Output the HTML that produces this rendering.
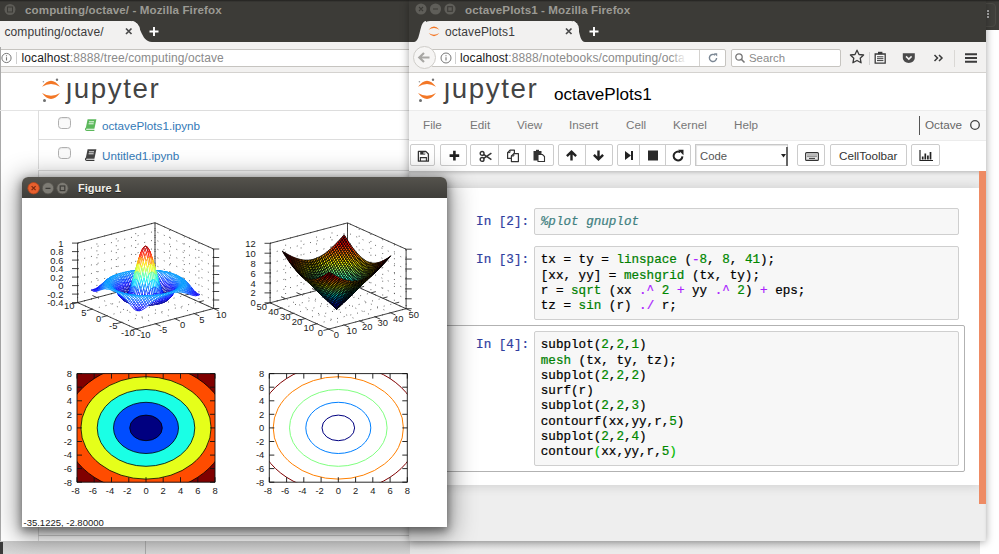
<!DOCTYPE html>
<html><head><meta charset="utf-8">
<style>
*{box-sizing:border-box;margin:0;padding:0}
html,body{width:999px;height:554px;overflow:hidden}
body{position:relative;background:#e3e3e3;font-family:"Liberation Sans",sans-serif;font-size:11.7px;color:#333}
.abs{position:absolute}
/* ---------- generic firefox chrome ---------- */
.win{position:absolute;top:0;height:541px;overflow:hidden;background:#fff}
.titlebar{position:absolute;left:0;right:0;top:0;height:42px;background:#3c3b37}
.title{position:absolute;top:3px;font-weight:bold;font-size:11.6px;color:#9b9a94;white-space:nowrap;letter-spacing:.1px}
.tab{position:absolute;top:21px;height:21px;background:#f2f1f0;border-radius:9px 9px 0 0;font-size:12px;letter-spacing:.1px;color:#3b3b3b;white-space:nowrap}
.navbar{position:absolute;left:0;right:0;top:42px;height:31px;background:#f2f1f0;border-bottom:1px solid #d4d2cf}
.urlbox{position:absolute;top:7px;height:18px;background:#fff;border:1px solid #c6c4c0;border-radius:2px;font-size:12px;letter-spacing:.1px;color:#8a8a8a;white-space:nowrap;line-height:16px}
.urlbox b{font-weight:normal;color:#1a1a1a}
/* ---------- jupyter ---------- */
.jtext{position:absolute;font-size:27.7px;color:#444;margin-top:.8px;letter-spacing:1.6px;white-space:nowrap;line-height:30px}
.row{position:absolute;left:38px;right:0;height:30px;border-top:1px solid #ddd;border-left:1px solid #ddd}
.cb{position:absolute;left:19.2px;top:5.6px;width:12.6px;height:12.4px;border:1px solid #b0b0b0;border-radius:3.5px;background:#fafafa;box-shadow:inset 0 1px 1px #e8e8e8}
.lnk{position:absolute;left:63px;top:8px;color:#337ab7;font-size:11.7px;white-space:nowrap}
.menu span{position:absolute;top:118px;color:#777;font-size:11.7px}
.btn{position:absolute;top:144px;height:22px;border:1px solid #ccc;border-radius:2px;background:#fff}
.btn i{position:absolute;top:0;bottom:0;width:1px;background:#ccc}
.btn svg{position:absolute;top:4px}
.cellin{position:absolute;left:125px;width:425px;background:#f7f7f7;border:1px solid #cfcfcf;border-radius:2px}
pre{font-family:"Liberation Mono",monospace;font-size:12.6px;line-height:15.3px;color:#000;-webkit-text-stroke:.22px}
.cellin pre{position:absolute;left:5.8px;top:6.3px}
.prompt{position:absolute;left:61px;margin-top:1.3px;width:64px;text-align:right;padding-right:5px;color:#303f9f}
.k{color:#008000}.n{color:#080}.o{color:#a2f}.c{color:#408080;font-style:italic}.m{color:#0b0}
</style></head>
<body>

<!-- strip of another window on far right -->
<div class="abs" style="left:980px;top:0;width:19px;height:30px;background:#3e3d39"></div>
<div class="abs" style="left:974px;top:3px;width:22px;height:24px;border:1px solid #4c4b46;border-radius:4px;background:#41403c"></div>
<div class="abs" style="left:987px;top:10px;width:2px;height:2px;background:#aaa;box-shadow:0 3px #aaa,0 6px #aaa"></div>

<!-- bottom strip -->
<div class="abs" style="left:0;top:541px;width:999px;height:13px;background:linear-gradient(#d6d6d6,#ebebeb 70%)"></div>
<div class="abs" style="left:0;top:541px;width:410px;height:13px;background:linear-gradient(#c9c9c9,#d9d9d9)"></div>
<div class="abs" style="left:0;top:542px;width:2.5px;height:12px;background:#3a3a3a"></div>
<div class="abs" style="left:145px;top:541px;width:1px;height:13px;background:#aaa"></div>
<div class="abs" style="left:980px;top:30px;width:19px;height:524px;background:#fff"></div>

<!-- ================= LEFT WINDOW ================= -->
<div class="win" id="lw" style="left:0;width:440px">
  <div class="titlebar"></div>
  <svg class="abs" style="left:2px;top:2px" width="16" height="16"><circle cx="8" cy="7.5" r="5.5" fill="#5d5c57"/><rect x="5.5" y="5" width="5" height="5" fill="none" stroke="#3c3b37" stroke-width="1"/></svg>
  <div class="title" style="left:25px">computing/octave/ - Mozilla Firefox</div>
  <div class="tab" style="left:-10px;width:150px"><span class="abs" style="left:14.5px;top:4px">computing/octave/</span></div>
  <svg class="abs" style="left:132px;top:21px" width="22" height="21"><path d="M0 0 C9 0 8 21 20 21 L0 21Z" fill="#f2f1f0"/></svg>
  <svg class="abs" style="left:124px;top:26px" width="40" height="12"><path d="M2 2.5l5.5 5.5M7.5 2.5L2 8" stroke="#4a4a4a" stroke-width="1.7"/><path d="M25.5 5.5h9M30 1v9" stroke="#fff" stroke-width="1.9"/></svg>
  <div class="navbar">
    <div class="urlbox" style="left:-5px;width:460px"><span class="abs" style="left:25.5px;top:0"><b>localhost</b>:8888/tree/computing/octave</span></div>
    <svg class="abs" style="left:0;top:9px" width="20" height="14"><circle cx="6.5" cy="7" r="4.6" fill="none" stroke="#777" stroke-width="1"/><path d="M6.5 6.3v3.2M6.5 4.2v1" stroke="#777" stroke-width="1.1"/><path d="M16.5 1v12" stroke="#d0d0d0" stroke-width="1"/></svg>
  </div>
  <!-- left edge stripe -->
  <div class="abs" style="left:0;top:47px;width:1px;height:494px;background:#a9a9a9"></div>
  <!-- jupyter header -->
  <svg class="abs" style="left:40.5px;top:78px" width="24" height="27" viewBox="0 0 24 27"><path d="M1 8.7Q10-3.3 19 8.7Q10 3.3 1 8.7zM1 15Q10 26.8 19 15Q10 20.6 1 15z" fill="#f37726"/><circle cx="16" cy="1.7" r="1.2" fill="#767677"/><circle cx="2.4" cy="3.8" r=".8" fill="#989798"/><circle cx="3.5" cy="22.4" r="1.5" fill="#6f7070"/></svg>
  <div class="jtext" style="left:66px;top:73px">&#x237;upyter</div>
  <div class="abs" style="left:0;top:110px;width:440px;height:1px;background:#e4e4e4"></div>
  <div class="row" style="top:110px"><div class="cb"></div>
    <svg class="abs" style="left:44.5px;top:6.8px" width="14" height="14" viewBox="0 0 14 14"><path d="M3.6 1.2h8.8l-2 9.6H1.6z" fill="#5cb85c"/><path d="M2.2 10.2c-1 .6-.9 2.2.5 2.2h7.7" fill="none" stroke="#5cb85c" stroke-width="1.2"/><path d="M5 3.8h5M4.6 5.8h5" stroke="#fff" stroke-width=".9"/></svg>
    <div class="lnk">octavePlots1.ipynb</div></div>
  <div class="row" style="top:139.4px"><div class="cb" style="top:6.6px"></div>
    <svg class="abs" style="left:44.5px;top:7.4px" width="14" height="14" viewBox="0 0 14 14"><path d="M3.6 1.2h8.8l-2 9.6H1.6z" fill="#444"/><path d="M2.2 10.2c-1 .6-.9 2.2.5 2.2h7.7" fill="none" stroke="#3a3a3a" stroke-width="1.2"/><path d="M5 3.8h5M4.6 5.8h5" stroke="#fff" stroke-width=".9"/></svg>
    <div class="lnk" style="top:8.6px">Untitled1.ipynb</div></div>
  <div class="row" style="top:170px;height:371px"></div>
  <div class="abs" style="left:38px;top:535px;width:402px;height:1px;background:#d0d0d0"></div>
</div>

<!-- ================= RIGHT WINDOW ================= -->
<div class="win" id="rw" style="left:409px;width:577px;box-shadow:0 1px 8px 0 rgba(0,0,0,.36)">
  <div class="titlebar" style="background:#3c3b37"></div>
  <svg class="abs" style="left:4px;top:1px" width="46" height="17"><g fill="#5f5e59"><circle cx="8" cy="8" r="5.6"/><circle cx="22.5" cy="8" r="5.6"/><circle cx="37" cy="8" r="5.6"/></g><g stroke="#3c3b37" stroke-width="1.1" fill="none"><path d="M6 6l4 4M10 6l-4 4M20 8h5"/><rect x="34.7" y="5.7" width="4.6" height="4.6"/></g></svg>
  <div class="title" style="left:56px;top:3px">octavePlots1 - Mozilla Firefox</div>
  <div class="tab" style="left:13px;width:157px;border-radius:8px 8px 0 0"><span class="abs" style="left:23px;top:4px">octavePlots1</span></div>
  <svg class="abs" style="left:5px;top:21px" width="12" height="21"><path d="M12 0 C5 0 7 21 0 21 L12 21Z" fill="#f2f1f0"/></svg>
  <svg class="abs" style="left:164px;top:21px" width="14" height="21"><path d="M0 0 C7 0 5 21 12 21 L0 21Z" fill="#f2f1f0"/></svg>
  <svg class="abs" style="left:18.6px;top:25.2px" width="12" height="13" viewBox="0 0 20 21.7"><path d="M1 8Q10-3 19 8Q10 2.4 1 8zM1 13.4Q10 24.4 19 13.4Q10 19 1 13.4z" fill="#f37726"/></svg>
  <svg class="abs" style="left:155px;top:26px" width="40" height="12"><path d="M2 2.5l5.5 5.5M7.5 2.5L2 8" stroke="#4a4a4a" stroke-width="1.7"/><path d="M25.5 5.5h9M30 1v9" stroke="#fff" stroke-width="1.9"/></svg>
  <div class="navbar">
    <div class="urlbox" style="left:22px;width:295px"><span class="abs" style="left:28px;top:0"><b>localhost</b>:8888/notebooks/computing/octa</span>
      <div class="abs" style="right:25px;top:0;width:30px;height:16px;background:linear-gradient(90deg,rgba(255,255,255,0),#fff 55%)"></div>
      <div class="abs" style="right:25px;top:0;width:1px;height:16px;background:#d4d2cf"></div>
      <svg class="abs" style="right:6px;top:2px" width="12" height="12" viewBox="0 0 12 12"><path d="M9.6 6A3.6 3.6 0 1 1 8.2 3.1" fill="none" stroke="#7b8794" stroke-width="1.4"/><path d="M6.8 1.2h3.4v3.4z" fill="#7b8794"/></svg>
    </div>
    <svg class="abs" style="left:2px;top:3px" width="60" height="26"><circle cx="13.5" cy="12.5" r="11" fill="#f6f5f4" stroke="#cfcdc9" stroke-width="1"/><path d="M8.5 12.5h10M13 8l-4.7 4.5L13 17" fill="none" stroke="#a8a7a4" stroke-width="2.2"/><circle cx="35" cy="13" r="5" fill="none" stroke="#777" stroke-width="1"/><path d="M35 12.3v3.2M35 10.2v1" stroke="#777" stroke-width="1.1"/><path d="M44.5 7v12" stroke="#d0d0d0" stroke-width="1"/></svg>
    <div class="urlbox" style="left:322px;width:110px"><span class="abs" style="left:17px;top:0;color:#8a8a8a;font-size:11.4px;letter-spacing:0">Search</span>
      <svg class="abs" style="left:1.5px;top:2px" width="12" height="12"><circle cx="5" cy="5" r="3.2" fill="none" stroke="#777" stroke-width="1.3"/><path d="M7.3 7.3l3.2 3.2" stroke="#777" stroke-width="1.6"/></svg></div>
    <svg class="abs" style="left:438px;top:5px" width="140" height="22" viewBox="0 0 140 22">
      <path d="M10 3.2l2 4.3 4.6.5-3.4 3.2.9 4.6L10 13.5l-4.1 2.3.9-4.6L3.4 8l4.6-.5z" fill="none" stroke="#3b3b3b" stroke-width="1.3" stroke-linejoin="round"/>
      <path d="M22.5 5v13" stroke="#d0d0d0"/>
      <path d="M28.2 7h10v9.2h-10z" fill="#fbfbfb" stroke="#3b3b3b" stroke-width="1.3"/><path d="M31 4.8h4.4v2.4H31z" fill="#3b3b3b"/><path d="M30 9.8h6.4M30 11.7h6.4M30 13.6h6.4" stroke="#3b3b3b" stroke-width="1"/>
      <path d="M55.8 6.2h12v4.4c0 3.2-2.6 5.4-6 5.4s-6-2.2-6-5.4z" fill="#4a4a4a"/><path d="M59 9.4l2.8 2.7 2.8-2.7" fill="none" stroke="#f2f1f0" stroke-width="1.5"/>
      <path d="M87.5 8l3 3-3 3M92 8l3 3-3 3" fill="none" stroke="#3b3b3b" stroke-width="1.5"/>
      <path d="M107.5 3v17" stroke="#dad8d5"/>
      <path d="M118 7.2h12M118 11h12M118 14.8h12" stroke="#3b3b3b" stroke-width="2"/>
    </svg>
  </div>
  <!-- jupyter header -->
  <svg class="abs" style="left:8px;top:78px" width="24" height="27" viewBox="0 0 24 27"><path d="M1 8.7Q10-3.3 19 8.7Q10 3.3 1 8.7zM1 15Q10 26.8 19 15Q10 20.6 1 15z" fill="#f37726"/><circle cx="16" cy="1.7" r="1.2" fill="#767677"/><circle cx="2.4" cy="3.8" r=".8" fill="#989798"/><circle cx="3.5" cy="22.4" r="1.5" fill="#6f7070"/></svg>
  <div class="jtext" style="left:35px;top:73px">&#x237;upyter</div>
  <div class="abs" style="left:145px;top:85px;font-size:17.1px;color:#000;white-space:nowrap">octavePlots1</div>
  <div class="abs" style="left:0;top:110px;width:577px;height:31px;background:#f8f8f8;border-top:1px solid #ececec;border-bottom:1px solid #ececec"></div>
  <div class="menu"><span style="left:14px">File</span><span style="left:61px">Edit</span><span style="left:108px">View</span><span style="left:160px">Insert</span><span style="left:217px">Cell</span><span style="left:264px">Kernel</span><span style="left:325px">Help</span><span style="left:516px;color:#666">Octave</span></div>
  <div class="abs" style="left:510px;top:116px;width:1px;height:19px;background:#555"></div>
  <svg class="abs" style="left:560px;top:119px" width="12" height="12"><circle cx="6" cy="6" r="4.3" fill="none" stroke="#444" stroke-width="1.3"/></svg>
  <!-- toolbar -->
  <div class="btn" style="left:1px;width:25px"><svg style="left:6px;top:4.5px" width="13" height="13" viewBox="0 0 13 13"><path d="M1.4 1.4h7.4l2.6 2.6v7.2h-10z" fill="#fff" stroke="#333" stroke-width="1.3" stroke-linejoin="round"/><path d="M3.2 1.4h5v3.2h-5z" fill="#333"/><path d="M6.6 2h1v2h-1z" fill="#fff"/><path d="M3.4 11V7.6h6V11" fill="none" stroke="#333" stroke-width="1.1"/></svg></div>
  <div class="btn" style="left:31px;width:27px"><svg style="left:7px" width="13" height="13"><path d="M1.6 6.6h9.6M6.4 1.8v9.6" stroke="#222" stroke-width="2.6"/></svg></div>
  <div class="btn" style="left:61px;width:84px"><i style="left:27px"></i><i style="left:54px"></i>
    <svg style="left:7.5px;top:4.5px" width="14" height="13" viewBox="0 0 14 13"><circle cx="3.1" cy="3.4" r="1.9" fill="none" stroke="#333" stroke-width="1.4"/><circle cx="3.1" cy="9.4" r="1.9" fill="none" stroke="#333" stroke-width="1.4"/><path d="M4.6 4.4L12.4 9.6M4.6 8.4L12.4 3.2" stroke="#333" stroke-width="1.5"/></svg>
    <svg style="left:34.5px;top:4px" width="14" height="14" viewBox="0 0 14 14"><path d="M4 1.2H8.4V9.4H1.6V3.6z" fill="#fff" stroke="#333" stroke-width="1.2" stroke-linejoin="round"/><path d="M7.8 4.6H12.4v8H5.4V7z" fill="#fff" stroke="#333" stroke-width="1.2" stroke-linejoin="round"/><path d="M4 1.2v2.4H1.6M7.8 4.6V7H5.4" fill="none" stroke="#333" stroke-width="1"/></svg>
    <svg style="left:61px" width="14" height="13" viewBox="0 0 14 13"><path d="M1.5 2h8v9.5h-8z" fill="#333"/><path d="M4 .8h3v2H4z" fill="#333"/><path d="M6 5.5h4.5l2 2V12.5H6z" fill="#fff" stroke="#333" stroke-width="1.1"/></svg></div>
  <div class="btn" style="left:149px;width:55px"><i style="left:26px"></i>
    <svg style="left:6px" width="13" height="13"><path d="M6.5 11.6V3.4M1.9 7.2l4.6-4.6 4.6 4.6" fill="none" stroke="#222" stroke-width="2.4"/></svg>
    <svg style="left:33px" width="13" height="13"><path d="M6.5 1.4v8.2M1.9 5.8l4.6 4.6 4.6-4.6" fill="none" stroke="#222" stroke-width="2.4"/></svg></div>
  <div class="btn" style="left:208px;width:74px"><i style="left:21px"></i><i style="left:47px"></i>
    <svg style="left:5px" width="12" height="13"><path d="M2 2l6 4.5L2 11z" fill="#222"/><path d="M9 2v9" stroke="#222" stroke-width="2"/></svg>
    <svg style="left:29px" width="12" height="13"><rect x="1" y="1.5" width="10" height="10" fill="#2a2a2a"/></svg>
    <svg style="left:53px;top:3.5px" width="14" height="14" viewBox="0 0 13 13"><path d="M10.6 6.8A4.1 4.1 0 1 1 8.6 3" fill="none" stroke="#222" stroke-width="1.9"/><path d="M6.6 .8h5v5z" fill="#222"/></svg></div>
  <div class="btn" style="left:286px;width:93px;border-color:#c8c8c8;border-radius:0;box-shadow:inset 1px 1px 1px #e4e4e4"><span class="abs" style="left:4px;top:5px;font-size:11.3px;color:#555">Code</span>
    <div class="abs" style="right:-1px;top:2px;width:2px;height:19px;background:#666"></div>
    <svg class="abs" style="left:84.5px;top:9px" width="6" height="5"><path d="M0 0h5l-2.5 3.5z" fill="#222"/></svg></div>
  <div class="btn" style="left:388px;width:28px"><svg style="left:7px;top:6.5px" width="14" height="10"><rect x=".6" y=".6" width="12.8" height="7.8" rx="1" fill="#e8e8e8" stroke="#333" stroke-width="1.1"/><path d="M2.5 3h9M2.5 4.6h9" stroke="#333" stroke-width="1" stroke-dasharray="1 1"/><path d="M4 6.4h6" stroke="#333" stroke-width="1"/></svg></div>
  <div class="btn" style="left:421px;width:77px"><span class="abs" style="left:8px;top:3.5px;font-size:11.7px;color:#333">CellToolbar</span></div>
  <div class="btn" style="left:502px;width:29px"><svg style="left:7px;top:5px" width="15" height="12"><path d="M1 0v10.5h13" fill="none" stroke="#222" stroke-width="1.2"/><path d="M3.7 9.5v-3M6.3 9.5v-6M8.9 9.5v-4M11.5 9.5v-7.5" stroke="#222" stroke-width="1.7"/></svg></div>
  <div class="abs" style="left:0;top:170.5px;width:577px;height:371px;background:#eee;box-shadow:inset 0 3px 4px -2px rgba(0,0,0,.25)"></div>
  <!-- notebook container -->
  <div class="abs" style="left:30px;top:188.3px;width:539.5px;height:297px;background:#fff;box-shadow:0 0 10px 1px rgba(87,87,87,.2)"></div>
  <div class="abs" style="left:569.5px;top:170.5px;width:8px;height:333px;background:#ee8b64"></div>
  <!-- cells -->
  <pre class="prompt" style="top:214px">In [2]:</pre>
  <div class="cellin" style="top:208px;height:27px"><pre><span class="c">%plot gnuplot</span></pre></div>
  <pre class="prompt" style="top:252px">In [3]:</pre>
  <div class="cellin" style="top:246px;height:73.5px"><pre>tx = ty = <span class="k">linspace</span> (<span class="o">-</span><span class="n">8</span>, <span class="n">8</span>, <span class="n">41</span>);
[xx, yy] = <span class="k">meshgrid</span> (tx, ty);
r = <span class="k">sqrt</span> (xx <span class="o">.^</span> <span class="n">2</span> <span class="o">+</span> yy <span class="o">.^</span> <span class="n">2</span>) <span class="o">+</span> eps;
tz = <span class="k">sin</span> (r) <span class="o">./</span> r;</pre></div>
  <div class="abs" style="left:30px;top:324.7px;width:525.5px;height:147.4px;border:1px solid #b2b2b2;border-radius:2px"></div>
  <pre class="prompt" style="top:337px">In [4]:</pre>
  <div class="cellin" style="top:331px;height:135px"><pre>subplot(<span class="n">2</span>,<span class="n">2</span>,<span class="n">1</span>)
<span class="k">mesh</span> (tx, ty, tz);
subplot(<span class="n">2</span>,<span class="n">2</span>,<span class="n">2</span>)
surf(r)
subplot(<span class="n">2</span>,<span class="n">2</span>,<span class="n">3</span>)
contourf(xx,yy,r,<span class="n">5</span>)
subplot(<span class="n">2</span>,<span class="n">2</span>,<span class="n">4</span>)
contour<span class="m">(</span>xx,yy,r,<span class="n">5</span><span class="m">)</span></pre></div>
</div>

<div class="abs" style="left:0;top:0;width:999px;height:2px;background:linear-gradient(rgba(0,0,0,.45),rgba(0,0,0,0))"></div>
<!-- ================= FIGURE WINDOW ================= -->
<div class="abs" id="fig" style="left:22px;top:177px;width:425px;height:350px;border-radius:6px 6px 0 0;box-shadow:0 3px 9px 1px rgba(0,0,0,.42),0 5px 26px 4px rgba(0,0,0,.42);background:#fff;overflow:hidden">
  <div class="abs" style="left:0;top:0;width:425px;height:21px;background:linear-gradient(#55534d,#3e3d39)"></div>
  <svg class="abs" style="left:4px;top:3px" width="50" height="16"><circle cx="7.6" cy="8.2" r="5.7" fill="#e8602e" stroke="#b8461c" stroke-width=".8"/><circle cx="22" cy="8.2" r="5.7" fill="#7d7b74" stroke="#55534d" stroke-width=".8"/><circle cx="36.5" cy="8.2" r="5.7" fill="#7d7b74" stroke="#55534d" stroke-width=".8"/><g stroke="#3c3b37" stroke-width="1.2" fill="none"><path d="M5.6 6.2l4 4M9.6 6.2l-4 4" stroke="#7a2a10"/><path d="M19.5 8.4h5"/><rect x="34.2" y="6" width="4.6" height="4.6"/></g></svg>
  <div class="abs" style="left:56px;top:4px;font-weight:bold;font-size:11px;color:#f0efe9;white-space:nowrap;text-shadow:0 1px 0 #222;margin-top:1.3px">Figure 1</div>
  <div class="abs" style="left:0;top:21px;width:425px;height:330px"><svg width="425" height="330" viewBox="22 198 425 330" style="position:absolute;left:0;top:0" font-family="Liberation Sans, sans-serif" font-size="9.4" fill="#1a1a1a">
<path d="M77.6 243.1L155.0 222.7L213.6 249.0M77.6 251.6L155.0 231.2L213.6 257.5M77.6 260.1L155.0 239.7L213.6 266.0M77.6 268.6L155.0 248.2L213.6 274.5M77.6 277.1L155.0 256.7L213.6 283.0M77.6 285.6L155.0 265.2L213.6 291.5M77.6 294.1L155.0 273.7L213.6 300.0M77.6 302.6L155.0 282.2L213.6 308.5M77.6 302.6L155.0 282.2L155.0 222.7M92.2 309.2L169.6 288.8L169.6 229.3M106.9 315.8L184.3 295.4L184.3 235.9M121.5 322.3L198.9 301.9L198.9 242.4M136.2 328.9L213.6 308.5L213.6 249.0M136.2 328.9L77.6 302.6L77.6 243.1M155.5 323.8L96.9 297.5L96.9 238.0M174.9 318.7L116.3 292.4L116.3 232.9M194.2 313.6L135.7 287.3L135.7 227.8M213.6 308.5L155.0 282.2L155.0 222.7" fill="none" stroke="#444" stroke-width="0.9" stroke-dasharray="0.9 6"/>
<path d="M155.0 282.2L155.0 222.7M77.6 302.6L155.0 282.2M155.0 282.2L213.6 308.5M169.6 288.8L174.5 287.5M184.3 295.4L189.1 294.1M198.9 301.9L203.8 300.7M96.9 297.5L92.4 295.5M116.3 292.4L111.7 290.4M135.7 287.3L131.1 285.3" fill="none" stroke="#222" stroke-width="0.85"/>
<g fill="#fff" stroke-width="0.72" stroke-linejoin="round"><path d="M152.7 274.6l1.6-.4-1.2-.8-1.5 .7zM151.2 274.7l1.5-.1-1.1-.5-1.6 .4zM149.6 274.5l1.6 .2-1.2-.2-1.5 .2z" stroke="#00e"/><path d="M148.1 274.1l1.5 .4-1.1 .2-1.6-.2z" stroke="#00f"/><path d="M146.6 273.6l1.5 .5-1.2 .4-1.5-.3z" stroke="#01f"/><path d="M145 272.9l1.6 .7-1.2 .6-1.6-.4z" stroke="#02f"/><path d="M143.5 272.3l1.5 .6-1.2 .9-1.5-.6z" stroke="#03f"/><path d="M141.9 271.7l1.6 .6-1.2 .9-1.6-.5z" stroke="#04f"/><path d="M140.4 271.2l1.5 .5-1.2 1-1.5-.5z" stroke="#05f"/><path d="M138.8 270.8l1.6 .4-1.2 1-1.6-.4z" stroke="#06f"/><path d="M137.3 270.6l1.5 .2-1.2 1-1.5-.4z" stroke="#07f"/><path d="M135.7 270.5l1.6 .1-1.2 .8-1.6-.2zM134.2 270.6l1.5-.1-1.2 .7-1.5-.1z" stroke="#08f"/><path d="M132.6 270.8l1.6-.2-1.2 .5-1.6 0zM131.1 271.1l1.5-.3-1.2 .3-1.5 .1zM129.5 271.5l1.6-.4-1.2 .1-1.5 .2zM128 271.9l1.5-.4-1.1-.1-1.6 .3zM126.4 272.3l1.6-.4-1.2-.2-1.5 .3zM124.9 272.7l1.5-.4-1.1-.3-1.6 .4zM123.3 273.1l1.6-.4-1.2-.3-1.5 .4zM121.8 273.5l1.5-.4-1.1-.3-1.6 .4zM120.2 273.9l1.6-.4-1.2-.3-1.5 .5zM118.7 274.3l1.5-.4-1.1-.2-1.6 .4zM117.1 274.7l1.6-.4-1.2-.2-1.5 .6zM115.6 275.2l1.5-.5-1.1 0-1.6 .6zM114 275.7l1.6-.5-1.2 .1-1.5 .7zM112.5 276.3l1.5-.6-1.1 .3-1.6 .8z" stroke="#09f"/><path d="M110.9 277.1l1.6-.8-1.2 .5-1.5 .9zM109.4 277.9l1.5-.8-1.1 .6-1.6 1.1z" stroke="#08f"/><path d="M107.9 279l1.5-1.1-1.2 .9-1.5 1.1z" stroke="#07f"/><path d="M106.3 280.1l1.6-1.1-1.2 .9-1.6 1.3z" stroke="#06f"/><path d="M104.8 281.5l1.5-1.4-1.2 1.1-1.5 1.3z" stroke="#05f"/><path d="M103.2 282.9l1.6-1.4-1.2 1-1.6 1.4z" stroke="#04f"/><path d="M101.7 284.3l1.5-1.4-1.2 1-1.5 1.3z" stroke="#03f"/><path d="M100.1 285.8l1.6-1.5-1.2 .9-1.6 1.3z" stroke="#02f"/><path d="M98.6 287.2l1.5-1.4-1.2 .7-1.5 1.1z" stroke="#01f"/><path d="M97 288.4l1.6-1.2-1.2 .4-1.6 .9z" stroke="#00f"/><path d="M95.5 289.4l1.5-1-1.2 .1-1.5 .7zM93.9 290.1l1.6-.7-1.2-.2-1.6 .4zM92.4 290.6l1.5-.5-1.2-.5-1.5 .2zM153.9 274.8l1.6 0-1.2-.6-1.6 .4zM152.4 274.6l1.5 .2-1.2-.2-1.5 .1z" stroke="#00e"/><path d="M150.8 274.1l1.6 .5-1.2 .1-1.6-.2z" stroke="#00f"/><path d="M149.3 273.5l1.5 .6-1.2 .4-1.5-.4z" stroke="#01f"/><path d="M147.7 272.7l1.6 .8-1.2 .6-1.5-.5z" stroke="#02f"/><path d="M146.2 272l1.5 .7-1.1 .9-1.6-.7z" stroke="#03f"/><path d="M144.6 271.3l1.6 .7-1.2 .9-1.5-.6z" stroke="#05f"/><path d="M143.1 270.8l1.5 .5-1.1 1-1.6-.6z" stroke="#06f"/><path d="M141.5 270.4l1.6 .4-1.2 .9-1.5-.5z" stroke="#07f"/><path d="M140 270.2l1.5 .2-1.1 .8-1.6-.4zM138.4 270.2l1.6 0-1.2 .6-1.5-.2z" stroke="#08f"/><path d="M136.9 270.4l1.5-.2-1.1 .4-1.6-.1zM135.3 270.8l1.6-.4-1.2 .1-1.5 .1zM133.8 271.2l1.5-.4-1.1-.2-1.6 .2zM132.2 271.8l1.6-.6-1.2-.4-1.5 .3zM130.7 272.3l1.5-.5-1.1-.7-1.6 .4zM129.1 272.9l1.6-.6-1.2-.8-1.5 .4zM127.6 273.5l1.5-.6-1.1-1-1.6 .4zM126.1 274l1.5-.5-1.2-1.2-1.5 .4zM124.5 274.4l1.6-.4-1.2-1.3-1.6 .4zM123 274.8l1.5-.4-1.2-1.3-1.5 .4zM121.4 275.1l1.6-.3-1.2-1.3-1.6 .4zM119.9 275.4l1.5-.3-1.2-1.2-1.5 .4zM118.3 275.6l1.6-.2-1.2-1.1-1.6 .4zM116.8 275.8l1.5-.2-1.2-.9-1.5 .5zM115.2 276.1l1.6-.3-1.2-.6-1.6 .5zM113.7 276.5l1.5-.4-1.2-.4-1.5 .6zM112.1 277l1.6-.5-1.2-.2-1.6 .8zM110.6 277.6l1.5-.6-1.2 .1-1.5 .8z" stroke="#09f"/><path d="M109 278.4l1.6-.8-1.2 .3-1.5 1.1zM107.5 279.4l1.5-1-1.1 .6-1.6 1.1z" stroke="#08f"/><path d="M105.9 280.6l1.6-1.2-1.2 .7-1.5 1.4z" stroke="#07f"/><path d="M104.4 281.9l1.5-1.3-1.1 .9-1.6 1.4z" stroke="#06f"/><path d="M102.8 283.4l1.6-1.5-1.2 1-1.5 1.4z" stroke="#05f"/><path d="M101.3 285l1.5-1.6-1.1 .9-1.6 1.5z" stroke="#03f"/><path d="M99.7 286.5l1.6-1.5-1.2 .8-1.5 1.4z" stroke="#02f"/><path d="M98.2 288l1.5-1.5-1.1 .7-1.6 1.2z" stroke="#01f"/><path d="M96.6 289.3l1.6-1.3-1.2 .4-1.5 1z" stroke="#00f"/><path d="M95.1 290.3l1.5-1-1.1 .1-1.6 .7zM93.5 291.1l1.6-.8-1.2-.2-1.5 .5zM155.1 274.8l1.5 .2-1.1-.2-1.6 0z" stroke="#00e"/><path d="M153.5 274.2l1.6 .6-1.2 0-1.5-.2z" stroke="#00f"/><path d="M152 273.5l1.5 .7-1.1 .4-1.6-.5z" stroke="#01f"/><path d="M150.4 272.7l1.6 .8-1.2 .6-1.5-.6z" stroke="#02f"/><path d="M148.9 271.9l1.5 .8-1.1 .8-1.6-.8z" stroke="#04f"/><path d="M147.3 271.1l1.6 .8-1.2 .8-1.5-.7z" stroke="#05f"/><path d="M145.8 270.5l1.5 .6-1.1 .9-1.6-.7z" stroke="#06f"/><path d="M144.3 270.2l1.5 .3-1.2 .8-1.5-.5z" stroke="#07f"/><path d="M142.7 270l1.6 .2-1.2 .6-1.6-.4z" stroke="#08f"/><path d="M141.2 270.1l1.5-.1-1.2 .4-1.5-.2zM139.6 270.5l1.6-.4-1.2 .1-1.6 0zM138.1 271l1.5-.5-1.2-.3-1.5 .2zM136.5 271.7l1.6-.7-1.2-.6-1.6 .4zM135 272.4l1.5-.7-1.2-.9-1.5 .4zM133.4 273.2l1.6-.8-1.2-1.2-1.6 .6zM131.9 274l1.5-.8-1.2-1.4-1.5 .5z" stroke="#09f"/><path d="M130.3 274.8l1.6-.8-1.2-1.7-1.6 .6zM128.8 275.5l1.5-.7-1.2-1.9-1.5 .6zM127.2 276.1l1.6-.6-1.2-2-1.5 .5zM125.7 276.5l1.5-.4-1.1-2.1-1.6 .4zM124.1 276.9l1.6-.4-1.2-2.1-1.5 .4zM122.6 277.1l1.5-.2-1.1-2.1-1.6 .3zM121 277.2l1.6-.1-1.2-2-1.5 .3zM119.5 277.3l1.5-.1-1.1-1.8-1.6 .2z" stroke="#08f"/><path d="M117.9 277.3l1.6 0-1.2-1.7-1.5 .2zM116.4 277.3l1.5 0-1.1-1.5-1.6 .3zM114.8 277.4l1.6-.1-1.2-1.2-1.5 .4zM113.3 277.5l1.5-.1-1.1-.9-1.6 .5zM111.7 277.8l1.6-.3-1.2-.5-1.5 .6zM110.2 278.3l1.5-.5-1.1-.2-1.6 .8zM108.6 279l1.6-.7-1.2 .1-1.5 1z" stroke="#09f"/><path d="M107.1 280l1.5-1-1.1 .4-1.6 1.2z" stroke="#08f"/><path d="M105.6 281.1l1.5-1.1-1.2 .6-1.5 1.3z" stroke="#07f"/><path d="M104 282.5l1.6-1.4-1.2 .8-1.6 1.5z" stroke="#06f"/><path d="M102.5 284.1l1.5-1.6-1.2 .9-1.5 1.6z" stroke="#05f"/><path d="M100.9 285.7l1.6-1.6-1.2 .9-1.6 1.5z" stroke="#04f"/><path d="M99.4 287.4l1.5-1.7-1.2 .8-1.5 1.5z" stroke="#02f"/><path d="M97.8 288.9l1.6-1.5-1.2 .6-1.6 1.3z" stroke="#01f"/><path d="M96.3 290.3l1.5-1.4-1.2 .4-1.5 1z" stroke="#00f"/><path d="M94.7 291.3l1.6-1-1.2 0-1.6 .8z" stroke="#00e"/><path d="M156.3 274.5l1.5 .5-1.2 0-1.5-.2z" stroke="#00f"/><path d="M154.7 273.7l1.6 .8-1.2 .3-1.6-.6z" stroke="#01f"/><path d="M153.2 272.8l1.5 .9-1.2 .5-1.5-.7z" stroke="#02f"/><path d="M151.6 271.9l1.6 .9-1.2 .7-1.6-.8z" stroke="#04f"/><path d="M150.1 271.1l1.5 .8-1.2 .8-1.5-.8z" stroke="#05f"/><path d="M148.5 270.4l1.6 .7-1.2 .8-1.6-.8z" stroke="#06f"/><path d="M147 270.1l1.5 .3-1.2 .7-1.5-.6z" stroke="#08f"/><path d="M145.4 270l1.6 .1-1.2 .4-1.5-.3zM143.9 270.2l1.5-.2-1.1 .2-1.6-.2zM142.3 270.7l1.6-.5-1.2-.2-1.5 .1zM140.8 271.4l1.5-.7-1.1-.6-1.6 .4zM139.2 272.3l1.6-.9-1.2-.9-1.5 .5zM137.7 273.3l1.5-1-1.1-1.3-1.6 .7z" stroke="#09f"/><path d="M136.1 274.4l1.6-1.1-1.2-1.6-1.5 .7zM134.6 275.5l1.5-1.1-1.1-2-1.6 .8z" stroke="#08f"/><path d="M133 276.5l1.6-1-1.2-2.3-1.5 .8z" stroke="#07f"/><path d="M131.5 277.4l1.5-.9-1.1-2.5-1.6 .8zM129.9 278.2l1.6-.8-1.2-2.6-1.5 .7zM128.4 278.9l1.5-.7-1.1-2.7-1.6 .6z" stroke="#06f"/><path d="M126.8 279.4l1.6-.5-1.2-2.8-1.5 .4zM125.3 279.7l1.5-.3-1.1-2.9-1.6 .4z" stroke="#05f"/><path d="M123.8 279.9l1.5-.2-1.2-2.8-1.5 .2zM122.2 279.9l1.6 0-1.2-2.8-1.6 .1zM120.7 279.8l1.5 .1-1.2-2.7-1.5 .1z" stroke="#06f"/><path d="M119.1 279.6l1.6 .2-1.2-2.5-1.6 0z" stroke="#07f"/><path d="M117.6 279.3l1.5 .3-1.2-2.3-1.5 0zM116 279.1l1.6 .2-1.2-2-1.6 .1z" stroke="#08f"/><path d="M114.5 278.8l1.5 .3-1.2-1.7-1.5 .1zM112.9 278.8l1.6 0-1.2-1.3-1.6 .3zM111.4 278.8l1.5 0-1.2-1-1.5 .5zM109.8 279.2l1.6-.4-1.2-.5-1.6 .7zM108.3 279.8l1.5-.6-1.2-.2-1.5 1zM106.7 280.7l1.6-.9-1.2 .2-1.5 1.1z" stroke="#09f"/><path d="M105.2 281.9l1.5-1.2-1.1 .4-1.6 1.4z" stroke="#08f"/><path d="M103.6 283.3l1.6-1.4-1.2 .6-1.5 1.6z" stroke="#06f"/><path d="M102.1 284.9l1.5-1.6-1.1 .8-1.6 1.6z" stroke="#05f"/><path d="M100.5 286.7l1.6-1.8-1.2 .8-1.5 1.7z" stroke="#04f"/><path d="M99 288.4l1.5-1.7-1.1 .7-1.6 1.5z" stroke="#02f"/><path d="M97.4 290l1.6-1.6-1.2 .5-1.5 1.4z" stroke="#01f"/><path d="M95.9 291.3l1.5-1.3-1.1 .3-1.6 1z" stroke="#00f"/><path d="M157.4 274l1.6 .8-1.2 .2-1.5-.5z" stroke="#01f"/><path d="M155.9 273.1l1.5 .9-1.1 .5-1.6-.8z" stroke="#02f"/><path d="M154.3 272.1l1.6 1-1.2 .6-1.5-.9z" stroke="#04f"/><path d="M152.8 271.2l1.5 .9-1.1 .7-1.6-.9z" stroke="#05f"/><path d="M151.2 270.5l1.6 .7-1.2 .7-1.5-.8z" stroke="#07f"/><path d="M149.7 270.1l1.5 .4-1.1 .6-1.6-.7z" stroke="#08f"/><path d="M148.1 270l1.6 .1-1.2 .3-1.5-.3zM146.6 270.3l1.5-.3-1.1 .1-1.6-.1zM145 270.9l1.6-.6-1.2-.3-1.5 .2zM143.5 271.9l1.5-1-1.1-.7-1.6 .5zM142 273l1.5-1.1-1.2-1.2-1.5 .7z" stroke="#09f"/><path d="M140.4 274.3l1.6-1.3-1.2-1.6-1.6 .9z" stroke="#08f"/><path d="M138.9 275.7l1.5-1.4-1.2-2-1.5 1z" stroke="#07f"/><path d="M137.3 277l1.6-1.3-1.2-2.4-1.6 1.1z" stroke="#06f"/><path d="M135.8 278.3l1.5-1.3-1.2-2.6-1.5 1.1z" stroke="#05f"/><path d="M134.2 279.5l1.6-1.2-1.2-2.8-1.6 1zM132.7 280.6l1.5-1.1-1.2-3-1.5 .9z" stroke="#04f"/><path d="M131.1 281.4l1.6-.8-1.2-3.2-1.6 .8zM129.6 282.1l1.5-.7-1.2-3.2-1.5 .7zM128 282.6l1.6-.5-1.2-3.2-1.6 .5zM126.5 283l1.5-.4-1.2-3.2-1.5 .3zM124.9 283.1l1.6-.1-1.2-3.3-1.5 .2zM123.4 283l1.5 .1-1.1-3.2-1.6 0z" stroke="#03f"/><path d="M121.8 282.8l1.6 .2-1.2-3.1-1.5-.1zM120.3 282.4l1.5 .4-1.1-3-1.6-.2z" stroke="#04f"/><path d="M118.7 281.9l1.6 .5-1.2-2.8-1.5-.3z" stroke="#05f"/><path d="M117.2 281.4l1.5 .5-1.1-2.6-1.6-.2z" stroke="#06f"/><path d="M115.6 280.8l1.6 .6-1.2-2.3-1.5-.3z" stroke="#07f"/><path d="M114.1 280.4l1.5 .4-1.1-2-1.6 0z" stroke="#08f"/><path d="M112.5 280l1.6 .4-1.2-1.6-1.5 0zM111 279.9l1.5 .1-1.1-1.2-1.6 .4zM109.4 280.1l1.6-.2-1.2-.7-1.5 .6zM107.9 280.6l1.5-.5-1.1-.3-1.6 .9zM106.3 281.5l1.6-.9-1.2 .1-1.5 1.2z" stroke="#09f"/><path d="M104.8 282.7l1.5-1.2-1.1 .4-1.6 1.4z" stroke="#08f"/><path d="M103.3 284.2l1.5-1.5-1.2 .6-1.5 1.6z" stroke="#07f"/><path d="M101.7 286l1.6-1.8-1.2 .7-1.6 1.8z" stroke="#05f"/><path d="M100.2 287.8l1.5-1.8-1.2 .7-1.5 1.7z" stroke="#04f"/><path d="M98.6 289.5l1.6-1.7-1.2 .6-1.6 1.6z" stroke="#02f"/><path d="M97.1 291.1l1.5-1.6-1.2 .5-1.5 1.3z" stroke="#01f"/><path d="M158.6 273.5l1.6 1-1.2 .3-1.6-.8z" stroke="#02f"/><path d="M157.1 272.5l1.5 1-1.2 .5-1.5-.9z" stroke="#03f"/><path d="M155.5 271.5l1.6 1-1.2 .6-1.6-1z" stroke="#05f"/><path d="M154 270.7l1.5 .8-1.2 .6-1.5-.9z" stroke="#06f"/><path d="M152.4 270.2l1.6 .5-1.2 .5-1.6-.7z" stroke="#08f"/><path d="M150.9 270.1l1.5 .1-1.2 .3-1.5-.4zM149.3 270.4l1.6-.3-1.2 0-1.6-.1zM147.8 271.2l1.5-.8-1.2-.4-1.5 .3zM146.2 272.3l1.6-1.1-1.2-.9-1.6 .6z" stroke="#09f"/><path d="M144.7 273.6l1.5-1.3-1.2-1.4-1.5 1z" stroke="#08f"/><path d="M143.1 275.2l1.6-1.6-1.2-1.7-1.5 1.1z" stroke="#07f"/><path d="M141.6 276.8l1.5-1.6-1.1-2.2-1.6 1.3z" stroke="#06f"/><path d="M140 278.5l1.6-1.7-1.2-2.5-1.5 1.4z" stroke="#05f"/><path d="M138.5 280.1l1.5-1.6-1.1-2.8-1.6 1.3z" stroke="#04f"/><path d="M136.9 281.5l1.6-1.4-1.2-3.1-1.5 1.3z" stroke="#03f"/><path d="M135.4 282.8l1.5-1.3-1.1-3.2-1.6 1.2z" stroke="#02f"/><path d="M133.8 283.9l1.6-1.1-1.2-3.3-1.5 1.1z" stroke="#01f"/><path d="M132.3 284.8l1.5-.9-1.1-3.3-1.6 .8zM130.7 285.5l1.6-.7-1.2-3.4-1.5 .7z" stroke="#00f"/><path d="M129.2 286l1.5-.5-1.1-3.4-1.6 .5zM127.6 286.3l1.6-.3-1.2-3.4-1.5 .4z" stroke="#00e"/><path d="M126.1 286.4l1.5-.1-1.1-3.3-1.6 .1zM124.5 286.3l1.6 .1-1.2-3.3-1.5-.1z" stroke="#00f"/><path d="M123 286.1l1.5 .2-1.1-3.3-1.6-.2z" stroke="#01f"/><path d="M121.5 285.6l1.5 .5-1.2-3.3-1.5-.4z" stroke="#02f"/><path d="M119.9 285l1.6 .6-1.2-3.2-1.6-.5z" stroke="#03f"/><path d="M118.4 284.2l1.5 .8-1.2-3.1-1.5-.5z" stroke="#04f"/><path d="M116.8 283.4l1.6 .8-1.2-2.8-1.6-.6z" stroke="#05f"/><path d="M115.3 282.5l1.5 .9-1.2-2.6-1.5-.4z" stroke="#06f"/><path d="M113.7 281.8l1.6 .7-1.2-2.1-1.6-.4z" stroke="#07f"/><path d="M112.2 281.2l1.5 .6-1.2-1.8-1.5-.1z" stroke="#08f"/><path d="M110.6 281l1.6 .2-1.2-1.3-1.6 .2zM109.1 281.1l1.5-.1-1.2-.9-1.5 .5zM107.5 281.5l1.6-.4-1.2-.5-1.6 .9zM106 282.4l1.5-.9-1.2 0-1.5 1.2z" stroke="#09f"/><path d="M104.4 283.7l1.6-1.3-1.2 .3-1.5 1.5z" stroke="#08f"/><path d="M102.9 285.3l1.5-1.6-1.1 .5-1.6 1.8z" stroke="#06f"/><path d="M101.3 287.1l1.6-1.8-1.2 .7-1.5 1.8z" stroke="#05f"/><path d="M99.8 289l1.5-1.9-1.1 .7-1.6 1.7z" stroke="#03f"/><path d="M98.2 290.8l1.6-1.8-1.2 .5-1.5 1.6z" stroke="#02f"/><path d="M159.8 273l1.5 1.1-1.1 .4-1.6-1z" stroke="#03f"/><path d="M158.2 271.9l1.6 1.1-1.2 .5-1.5-1z" stroke="#05f"/><path d="M156.7 271l1.5 .9-1.1 .6-1.6-1z" stroke="#06f"/><path d="M155.1 270.4l1.6 .6-1.2 .5-1.5-.8z" stroke="#08f"/><path d="M153.6 270.3l1.5 .1-1.1 .3-1.6-.5zM152 270.6l1.6-.3-1.2-.1-1.5-.1zM150.5 271.3l1.5-.7-1.1-.5-1.6 .3zM148.9 272.5l1.6-1.2-1.2-.9-1.5 .8z" stroke="#09f"/><path d="M147.4 274.1l1.5-1.6-1.1-1.3-1.6 1.1z" stroke="#08f"/><path d="M145.8 275.9l1.6-1.8-1.2-1.8-1.5 1.3z" stroke="#07f"/><path d="M144.3 277.8l1.5-1.9-1.1-2.3-1.6 1.6z" stroke="#05f"/><path d="M142.7 279.7l1.6-1.9-1.2-2.6-1.5 1.6z" stroke="#04f"/><path d="M141.2 281.5l1.5-1.8-1.1-2.9-1.6 1.7z" stroke="#02f"/><path d="M139.7 283.2l1.5-1.7-1.2-3-1.5 1.6z" stroke="#01f"/><path d="M138.1 284.7l1.6-1.5-1.2-3.1-1.6 1.4z" stroke="#00f"/><path d="M136.6 285.9l1.5-1.2-1.2-3.2-1.5 1.3zM135 286.9l1.6-1-1.2-3.1-1.6 1.1z" stroke="#00d"/><path d="M133.5 287.8l1.5-.9-1.2-3-1.5 .9z" stroke="#00c"/><path d="M131.9 288.4l1.6-.6-1.2-3-1.6 .7zM130.4 288.9l1.5-.5-1.2-2.9-1.5 .5zM128.8 289.3l1.6-.4-1.2-2.9-1.6 .3zM127.3 289.4l1.5-.1-1.2-3-1.5 .1z" stroke="#00b"/><path d="M125.7 289.4l1.6 0-1.2-3-1.6-.1z" stroke="#00c"/><path d="M124.2 289.2l1.5 .2-1.2-3.1-1.5-.2zM122.6 288.7l1.6 .5-1.2-3.1-1.5-.5z" stroke="#00d"/><path d="M121.1 288.1l1.5 .6-1.1-3.1-1.6-.6z" stroke="#00f"/><path d="M119.5 287.2l1.6 .9-1.2-3.1-1.5-.8z" stroke="#01f"/><path d="M118 286.2l1.5 1-1.1-3-1.6-.8z" stroke="#02f"/><path d="M116.4 285.1l1.6 1.1-1.2-2.8-1.5-.9z" stroke="#04f"/><path d="M114.9 284l1.5 1.1-1.1-2.6-1.6-.7z" stroke="#05f"/><path d="M113.3 283.1l1.6 .9-1.2-2.2-1.5-.6z" stroke="#07f"/><path d="M111.8 282.3l1.5 .8-1.1-1.9-1.6-.2z" stroke="#08f"/><path d="M110.2 281.9l1.6 .4-1.2-1.3-1.5 .1zM108.7 282l1.5-.1-1.1-.8-1.6 .4zM107.1 282.5l1.6-.5-1.2-.5-1.5 .9zM105.6 283.5l1.5-1-1.1-.1-1.6 1.3z" stroke="#09f"/><path d="M104 284.9l1.6-1.4-1.2 .2-1.5 1.6z" stroke="#08f"/><path d="M102.5 286.6l1.5-1.7-1.1 .4-1.6 1.8z" stroke="#06f"/><path d="M101 288.5l1.5-1.9-1.2 .5-1.5 1.9z" stroke="#05f"/><path d="M99.4 290.4l1.6-1.9-1.2 .5-1.6 1.8z" stroke="#03f"/><path d="M160.9 272.5l1.6 1.1-1.2 .5-1.5-1.1z" stroke="#04f"/><path d="M159.4 271.5l1.5 1-1.1 .5-1.6-1.1z" stroke="#06f"/><path d="M157.9 270.7l1.5 .8-1.2 .4-1.5-.9z" stroke="#07f"/><path d="M156.3 270.5l1.6 .2-1.2 .3-1.6-.6zM154.8 270.7l1.5-.2-1.2-.1-1.5-.1zM153.2 271.4l1.6-.7-1.2-.4-1.6 .3zM151.7 272.7l1.5-1.3-1.2-.8-1.5 .7z" stroke="#09f"/><path d="M150.1 274.3l1.6-1.6-1.2-1.4-1.6 1.2z" stroke="#08f"/><path d="M148.6 276.3l1.5-2-1.2-1.8-1.5 1.6z" stroke="#07f"/><path d="M147 278.4l1.6-2.1-1.2-2.2-1.6 1.8z" stroke="#05f"/><path d="M145.5 280.5l1.5-2.1-1.2-2.5-1.5 1.9z" stroke="#03f"/><path d="M143.9 282.6l1.6-2.1-1.2-2.7-1.6 1.9z" stroke="#01f"/><path d="M142.4 284.5l1.5-1.9-1.2-2.9-1.5 1.8z" stroke="#00f"/><path d="M140.8 286.1l1.6-1.6-1.2-3-1.5 1.7z" stroke="#00d"/><path d="M139.3 287.4l1.5-1.3-1.1-2.9-1.6 1.5z" stroke="#00c"/><path d="M137.7 288.5l1.6-1.1-1.2-2.7-1.5 1.2z" stroke="#00b"/><path d="M136.2 289.4l1.5-.9-1.1-2.6-1.6 1z" stroke="#00a"/><path d="M134.6 290.1l1.6-.7-1.2-2.5-1.5 .9zM133.1 290.6l1.5-.5-1.1-2.3-1.6 .6zM131.5 291.1l1.6-.5-1.2-2.2-1.5 .5zM130 291.4l1.5-.3-1.1-2.2-1.6 .4zM128.4 291.7l1.6-.3-1.2-2.1-1.5 .1zM126.9 291.8l1.5-.1-1.1-2.3-1.6 0z" stroke="#009"/><path d="M125.3 291.8l1.6 0-1.2-2.4-1.5-.2z" stroke="#00a"/><path d="M123.8 291.5l1.5 .3-1.1-2.6-1.6-.5z" stroke="#00b"/><path d="M122.2 291l1.6 .5-1.2-2.8-1.5-.6z" stroke="#00c"/><path d="M120.7 290.2l1.5 .8-1.1-2.9-1.6-.9z" stroke="#00d"/><path d="M119.2 289.1l1.5 1.1-1.2-3-1.5-1z" stroke="#00f"/><path d="M117.6 287.9l1.6 1.2-1.2-2.9-1.6-1.1z" stroke="#01f"/><path d="M116.1 286.6l1.5 1.3-1.2-2.8-1.5-1.1z" stroke="#03f"/><path d="M114.5 285.2l1.6 1.4-1.2-2.6-1.6-.9z" stroke="#05f"/><path d="M113 284.1l1.5 1.1-1.2-2.1-1.5-.8z" stroke="#07f"/><path d="M111.4 283.3l1.6 .8-1.2-1.8-1.6-.4z" stroke="#08f"/><path d="M109.9 282.8l1.5 .5-1.2-1.4-1.5 .1zM108.3 282.9l1.6-.1-1.2-.8-1.6 .5zM106.8 283.5l1.5-.6-1.2-.4-1.5 1zM105.2 284.6l1.6-1.1-1.2 0-1.6 1.4z" stroke="#09f"/><path d="M103.7 286.2l1.5-1.6-1.2 .3-1.5 1.7z" stroke="#07f"/><path d="M102.1 288l1.6-1.8-1.2 .4-1.5 1.9z" stroke="#06f"/><path d="M100.6 290l1.5-2-1.1 .5-1.6 1.9z" stroke="#04f"/><path d="M162.1 272.1l1.6 1.2-1.2 .3-1.6-1.1z" stroke="#05f"/><path d="M160.6 271.2l1.5 .9-1.2 .4-1.5-1z" stroke="#07f"/><path d="M159 270.7l1.6 .5-1.2 .3-1.5-.8z" stroke="#08f"/><path d="M157.5 270.8l1.5-.1-1.1 0-1.6-.2zM155.9 271.4l1.6-.6-1.2-.3-1.5 .2zM154.4 272.6l1.5-1.2-1.1-.7-1.6 .7z" stroke="#09f"/><path d="M152.8 274.3l1.6-1.7-1.2-1.2-1.5 1.3z" stroke="#08f"/><path d="M151.3 276.4l1.5-2.1-1.1-1.6-1.6 1.6z" stroke="#07f"/><path d="M149.7 278.7l1.6-2.3-1.2-2.1-1.5 2z" stroke="#05f"/><path d="M148.2 281l1.5-2.3-1.1-2.4-1.6 2.1z" stroke="#03f"/><path d="M146.6 283.3l1.6-2.3-1.2-2.6-1.5 2.1z" stroke="#01f"/><path d="M145.1 285.3l1.5-2-1.1-2.8-1.6 2.1z" stroke="#00e"/><path d="M143.5 287l1.6-1.7-1.2-2.7-1.5 1.9z" stroke="#00c"/><path d="M142 288.4l1.5-1.4-1.1-2.5-1.6 1.6z" stroke="#00a"/><path d="M140.4 289.5l1.6-1.1-1.2-2.3-1.5 1.3zM138.9 290.2l1.5-.7-1.1-2.1-1.6 1.1z" stroke="#009"/><path d="M137.4 290.8l1.5-.6-1.2-1.7-1.5 .9zM135.8 291.2l1.6-.4-1.2-1.4-1.6 .7zM134.3 291.6l1.5-.4-1.2-1.1-1.5 .5zM132.7 292l1.6-.4-1.2-1-1.6 .5zM131.2 292.4l1.5-.4-1.2-.9-1.5 .3zM129.6 292.8l1.6-.4-1.2-1-1.6 .3zM128.1 293.2l1.5-.4-1.2-1.1-1.5 .1zM126.5 293.5l1.6-.3-1.2-1.4-1.6 0z" stroke="#008"/><path d="M125 293.5l1.5 0-1.2-1.7-1.5-.3zM123.4 293.3l1.6 .2-1.2-2-1.6-.5z" stroke="#009"/><path d="M121.9 292.8l1.5 .5-1.2-2.3-1.5-.8z" stroke="#00a"/><path d="M120.3 291.9l1.6 .9-1.2-2.6-1.5-1.1z" stroke="#00c"/><path d="M118.8 290.6l1.5 1.3-1.1-2.8-1.6-1.2z" stroke="#00e"/><path d="M117.2 289.2l1.6 1.4-1.2-2.7-1.5-1.3z" stroke="#01f"/><path d="M115.7 287.7l1.5 1.5-1.1-2.6-1.6-1.4z" stroke="#03f"/><path d="M114.1 286.2l1.6 1.5-1.2-2.5-1.5-1.1z" stroke="#05f"/><path d="M112.6 284.9l1.5 1.3-1.1-2.1-1.6-.8z" stroke="#07f"/><path d="M111 284l1.6 .9-1.2-1.6-1.5-.5z" stroke="#08f"/><path d="M109.5 283.7l1.5 .3-1.1-1.2-1.6 .1zM107.9 283.8l1.6-.1-1.2-.8-1.5 .6zM106.4 284.6l1.5-.8-1.1-.3-1.6 1.1z" stroke="#09f"/><path d="M104.8 285.9l1.6-1.3-1.2 0-1.5 1.6z" stroke="#08f"/><path d="M103.3 287.6l1.5-1.7-1.1 .3-1.6 1.8z" stroke="#07f"/><path d="M101.7 289.6l1.6-2-1.2 .4-1.5 2z" stroke="#05f"/><path d="M163.3 271.9l1.5 1-1.1 .4-1.6-1.2z" stroke="#06f"/><path d="M161.7 271.2l1.6 .7-1.2 .2-1.5-.9z" stroke="#08f"/><path d="M160.2 271l1.5 .2-1.1 0-1.6-.5zM158.6 271.4l1.6-.4-1.2-.3-1.5 .1zM157.1 272.5l1.5-1.1-1.1-.6-1.6 .6z" stroke="#09f"/><path d="M155.6 274.1l1.5-1.6-1.2-1.1-1.5 1.2z" stroke="#08f"/><path d="M154 276.2l1.6-2.1-1.2-1.5-1.6 1.7z" stroke="#07f"/><path d="M152.5 278.6l1.5-2.4-1.2-1.9-1.5 2.1z" stroke="#05f"/><path d="M150.9 281.2l1.6-2.6-1.2-2.2-1.6 2.3z" stroke="#03f"/><path d="M149.4 283.6l1.5-2.4-1.2-2.5-1.5 2.3z" stroke="#00f"/><path d="M147.8 285.8l1.6-2.2-1.2-2.6-1.6 2.3z" stroke="#00d"/><path d="M146.3 287.6l1.5-1.8-1.2-2.5-1.5 2z" stroke="#00b"/><path d="M144.7 289l1.6-1.4-1.2-2.3-1.6 1.7z" stroke="#00a"/><path d="M143.2 289.9l1.5-.9-1.2-2-1.5 1.4z" stroke="#009"/><path d="M141.6 290.5l1.6-.6-1.2-1.5-1.6 1.1zM140.1 290.7l1.5-.2-1.2-1-1.5 .7zM138.5 290.8l1.6-.1-1.2-.5-1.5 .6zM137 290.9l1.5-.1-1.1 0-1.6 .4zM135.4 291l1.6-.1-1.2 .3-1.5 .4zM133.9 291.3l1.5-.3-1.1 .6-1.6 .4zM132.3 291.8l1.6-.5-1.2 .7-1.5 .4zM130.8 292.5l1.5-.7-1.1 .6-1.6 .4zM129.2 293.3l1.6-.8-1.2 .3-1.5 .4zM127.7 294l1.5-.7-1.1-.1-1.6 .3zM126.1 294.6l1.6-.6-1.2-.5-1.5 0zM124.6 294.8l1.5-.2-1.1-1.1-1.6-.2z" stroke="#008"/><path d="M123 294.7l1.6 .1-1.2-1.5-1.5-.5z" stroke="#009"/><path d="M121.5 294.2l1.5 .5-1.1-1.9-1.6-.9z" stroke="#00a"/><path d="M119.9 293.2l1.6 1-1.2-2.3-1.5-1.3z" stroke="#00b"/><path d="M118.4 291.8l1.5 1.4-1.1-2.6-1.6-1.4z" stroke="#00d"/><path d="M116.9 290.1l1.5 1.7-1.2-2.6-1.5-1.5z" stroke="#00f"/><path d="M115.3 288.4l1.6 1.7-1.2-2.4-1.6-1.5z" stroke="#03f"/><path d="M113.8 286.8l1.5 1.6-1.2-2.2-1.5-1.3z" stroke="#05f"/><path d="M112.2 285.5l1.6 1.3-1.2-1.9-1.6-.9z" stroke="#07f"/><path d="M110.7 284.7l1.5 .8-1.2-1.5-1.5-.3z" stroke="#08f"/><path d="M109.1 284.4l1.6 .3-1.2-1-1.6 .1zM107.6 284.8l1.5-.4-1.2-.6-1.5 .8zM106 285.8l1.6-1-1.2-.2-1.6 1.3z" stroke="#09f"/><path d="M104.5 287.4l1.5-1.6-1.2 .1-1.5 1.7z" stroke="#08f"/><path d="M102.9 289.3l1.6-1.9-1.2 .2-1.6 2z" stroke="#06f"/><path d="M164.5 271.8l1.5 .9-1.2 .2-1.5-1z" stroke="#07f"/><path d="M162.9 271.3l1.6 .5-1.2 .1-1.6-.7z" stroke="#08f"/><path d="M161.4 271.4l1.5-.1-1.2-.1-1.5-.2zM159.8 272.2l1.6-.8-1.2-.4-1.6 .4zM158.3 273.7l1.5-1.5-1.2-.8-1.5 1.1z" stroke="#09f"/><path d="M156.7 275.8l1.6-2.1-1.2-1.2-1.5 1.6z" stroke="#07f"/><path d="M155.2 278.2l1.5-2.4-1.1-1.7-1.6 2.1z" stroke="#05f"/><path d="M153.6 280.9l1.6-2.7-1.2-2-1.5 2.4z" stroke="#03f"/><path d="M152.1 283.5l1.5-2.6-1.1-2.3-1.6 2.6z" stroke="#01f"/><path d="M150.5 285.9l1.6-2.4-1.2-2.3-1.5 2.4z" stroke="#00d"/><path d="M149 287.9l1.5-2-1.1-2.3-1.6 2.2z" stroke="#00b"/><path d="M147.4 289.3l1.6-1.4-1.2-2.1-1.5 1.8z" stroke="#009"/><path d="M145.9 290.2l1.5-.9-1.1-1.7-1.6 1.4zM144.3 290.5l1.6-.3-1.2-1.2-1.5 .9zM142.8 290.3l1.5 .2-1.1-.6-1.6 .6zM141.2 289.9l1.6 .4-1.2 .2-1.5 .2z" stroke="#008"/><path d="M139.7 289.4l1.5 .5-1.1 .8-1.6 .1z" stroke="#009"/><path d="M138.1 289l1.6 .4-1.2 1.4-1.5 .1zM136.6 288.8l1.5 .2-1.1 1.9-1.6 .1zM135.1 289l1.5-.2-1.2 2.2-1.5 .3zM133.5 289.6l1.6-.6-1.2 2.3-1.6 .5zM132 290.6l1.5-1-1.2 2.2-1.5 .7zM130.4 291.8l1.6-1.2-1.2 1.9-1.6 .8z" stroke="#00a"/><path d="M128.9 293.2l1.5-1.4-1.2 1.5-1.5 .7z" stroke="#009"/><path d="M127.3 294.4l1.6-1.2-1.2 .8-1.6 .6zM125.8 295.4l1.5-1-1.2 .2-1.5 .2zM124.2 295.9l1.6-.5-1.2-.6-1.6-.1zM122.7 295.9l1.5 0-1.2-1.2-1.5-.5z" stroke="#008"/><path d="M121.1 295.2l1.6 .7-1.2-1.7-1.6-1z" stroke="#009"/><path d="M119.6 294.1l1.5 1.1-1.2-2-1.5-1.4z" stroke="#00b"/><path d="M118 292.5l1.6 1.6-1.2-2.3-1.5-1.7z" stroke="#00d"/><path d="M116.5 290.7l1.5 1.8-1.1-2.4-1.6-1.7z" stroke="#01f"/><path d="M114.9 288.8l1.6 1.9-1.2-2.3-1.5-1.6z" stroke="#03f"/><path d="M113.4 287.2l1.5 1.6-1.1-2-1.6-1.3z" stroke="#05f"/><path d="M111.8 286l1.6 1.2-1.2-1.7-1.5-.8z" stroke="#07f"/><path d="M110.3 285.3l1.5 .7-1.1-1.3-1.6-.3zM108.7 285.3l1.6 0-1.2-.9-1.5 .4zM107.2 286l1.5-.7-1.1-.5-1.6 1z" stroke="#09f"/><path d="M105.6 287.3l1.6-1.3-1.2-.2-1.5 1.6z" stroke="#08f"/><path d="M104.1 289l1.5-1.7-1.1 .1-1.6 1.9z" stroke="#07f"/><path d="M165.6 271.8l1.6 .8-1.2 .1-1.5-.9z" stroke="#08f"/><path d="M164.1 271.6l1.5 .2-1.1 0-1.6-.5zM162.5 272.1l1.6-.5-1.2-.3-1.5 .1zM161 273.3l1.5-1.2-1.1-.7-1.6 .8z" stroke="#09f"/><path d="M159.4 275.1l1.6-1.8-1.2-1.1-1.5 1.5z" stroke="#08f"/><path d="M157.9 277.5l1.5-2.4-1.1-1.4-1.6 2.1z" stroke="#06f"/><path d="M156.3 280.3l1.6-2.8-1.2-1.7-1.5 2.4z" stroke="#04f"/><path d="M154.8 283.1l1.5-2.8-1.1-2.1-1.6 2.7z" stroke="#01f"/><path d="M153.3 285.7l1.5-2.6-1.2-2.2-1.5 2.6z" stroke="#00e"/><path d="M151.7 287.9l1.6-2.2-1.2-2.2-1.6 2.4z" stroke="#00b"/><path d="M150.2 289.4l1.5-1.5-1.2-2-1.5 2z" stroke="#009"/><path d="M148.6 290.3l1.6-.9-1.2-1.5-1.6 1.4zM147.1 290.4l1.5-.1-1.2-1-1.5 .9zM145.5 289.9l1.6 .5-1.2-.2-1.6 .3z" stroke="#008"/><path d="M144 289l1.5 .9-1.2 .6-1.5-.2z" stroke="#009"/><path d="M142.4 287.7l1.6 1.3-1.2 1.3-1.6-.4z" stroke="#00a"/><path d="M140.9 286.5l1.5 1.2-1.2 2.2-1.5-.5z" stroke="#00c"/><path d="M139.3 285.5l1.6 1-1.2 2.9-1.6-.4z" stroke="#00d"/><path d="M137.8 285l1.5 .5-1.2 3.5-1.5-.2z" stroke="#00e"/><path d="M136.2 285.1l1.6-.1-1.2 3.8-1.5 .2zM134.7 285.8l1.5-.7-1.1 3.9-1.6 .6z" stroke="#00f"/><path d="M133.1 287.2l1.6-1.4-1.2 3.8-1.5 1z" stroke="#00e"/><path d="M131.6 289l1.5-1.8-1.1 3.4-1.6 1.2z" stroke="#00d"/><path d="M130 291l1.6-2-1.2 2.8-1.5 1.4z" stroke="#00c"/><path d="M128.5 293l1.5-2-1.1 2.2-1.6 1.2z" stroke="#00a"/><path d="M126.9 294.8l1.6-1.8-1.2 1.4-1.5 1z" stroke="#009"/><path d="M125.4 296.2l1.5-1.4-1.1 .6-1.6 .5zM123.8 296.8l1.6-.6-1.2-.3-1.5 0zM122.3 296.8l1.5 0-1.1-.9-1.6-.7z" stroke="#008"/><path d="M120.7 296l1.6 .8-1.2-1.6-1.5-1.1z" stroke="#009"/><path d="M119.2 294.7l1.5 1.3-1.1-1.9-1.6-1.6z" stroke="#00b"/><path d="M117.6 292.9l1.6 1.8-1.2-2.2-1.5-1.8z" stroke="#00e"/><path d="M116.1 290.9l1.5 2-1.1-2.2-1.6-1.9z" stroke="#01f"/><path d="M114.6 289l1.5 1.9-1.2-2.1-1.5-1.6z" stroke="#04f"/><path d="M113 287.4l1.6 1.6-1.2-1.8-1.6-1.2z" stroke="#06f"/><path d="M111.5 286.3l1.5 1.1-1.2-1.4-1.5-.7z" stroke="#08f"/><path d="M109.9 285.9l1.6 .4-1.2-1-1.6 0zM108.4 286.3l1.5-.4-1.2-.6-1.5 .7zM106.8 287.3l1.6-1-1.2-.3-1.6 1.3z" stroke="#09f"/><path d="M105.3 288.9l1.5-1.6-1.2 0-1.5 1.7zM166.8 272l1.6 .6-1.2 0-1.6-.8z" stroke="#08f"/><path d="M165.3 272.1l1.5-.1-1.2-.2-1.5-.2zM163.7 272.9l1.6-.8-1.2-.5-1.6 .5zM162.2 274.4l1.5-1.5-1.2-.8-1.5 1.2z" stroke="#09f"/><path d="M160.6 276.6l1.6-2.2-1.2-1.1-1.6 1.8z" stroke="#07f"/><path d="M159.1 279.3l1.5-2.7-1.2-1.5-1.5 2.4z" stroke="#05f"/><path d="M157.5 282.2l1.6-2.9-1.2-1.8-1.6 2.8z" stroke="#02f"/><path d="M156 285.1l1.5-2.9-1.2-1.9-1.5 2.8z" stroke="#00f"/><path d="M154.4 287.5l1.6-2.4-1.2-2-1.5 2.6z" stroke="#00c"/><path d="M152.9 289.4l1.5-1.9-1.1-1.8-1.6 2.2z" stroke="#00a"/><path d="M151.3 290.4l1.6-1-1.2-1.5-1.5 1.5zM149.8 290.6l1.5-.2-1.1-1-1.6 .9zM148.2 289.8l1.6 .8-1.2-.3-1.5 .1z" stroke="#008"/><path d="M146.7 288.4l1.5 1.4-1.1 .6-1.6-.5z" stroke="#009"/><path d="M145.1 286.5l1.6 1.9-1.2 1.5-1.5-.9z" stroke="#00b"/><path d="M143.6 284.3l1.5 2.2-1.1 2.5-1.6-1.3z" stroke="#00d"/><path d="M142 282.3l1.6 2-1.2 3.4-1.5-1.2z" stroke="#01f"/><path d="M140.5 280.7l1.5 1.6-1.1 4.2-1.6-1z" stroke="#03f"/><path d="M138.9 279.8l1.6 .9-1.2 4.8-1.5-.5zM137.4 279.8l1.5 0-1.1 5.2-1.6 .1zM135.8 280.6l1.6-.8-1.2 5.3-1.5 .7zM134.3 282.4l1.5-1.8-1.1 5.2-1.6 1.4z" stroke="#05f"/><path d="M132.8 284.8l1.5-2.4-1.2 4.8-1.5 1.8z" stroke="#03f"/><path d="M131.2 287.6l1.6-2.8-1.2 4.2-1.6 2z" stroke="#01f"/><path d="M129.7 290.6l1.5-3-1.2 3.4-1.5 2z" stroke="#00d"/><path d="M128.1 293.3l1.6-2.7-1.2 2.4-1.6 1.8z" stroke="#00b"/><path d="M126.6 295.6l1.5-2.3-1.2 1.5-1.5 1.4z" stroke="#009"/><path d="M125 297.1l1.6-1.5-1.2 .6-1.6 .6zM123.5 297.8l1.5-.7-1.2-.3-1.5 0zM121.9 297.5l1.6 .3-1.2-1-1.6-.8z" stroke="#008"/><path d="M120.4 296.5l1.5 1-1.2-1.5-1.5-1.3z" stroke="#00a"/><path d="M118.8 294.8l1.6 1.7-1.2-1.8-1.6-1.8z" stroke="#00c"/><path d="M117.3 292.8l1.5 2-1.2-1.9-1.5-2z" stroke="#00f"/><path d="M115.7 290.7l1.6 2.1-1.2-1.9-1.5-1.9z" stroke="#02f"/><path d="M114.2 288.9l1.5 1.8-1.1-1.7-1.6-1.6z" stroke="#05f"/><path d="M112.6 287.5l1.6 1.4-1.2-1.5-1.5-1.1z" stroke="#07f"/><path d="M111.1 286.7l1.5 .8-1.1-1.2-1.6-.4zM109.5 286.8l1.6-.1-1.2-.8-1.5 .4zM108 287.5l1.5-.7-1.1-.5-1.6 1z" stroke="#09f"/><path d="M106.4 289l1.6-1.5-1.2-.2-1.5 1.6z" stroke="#08f"/><path d="M168 272.3l1.5 .5-1.1-.2-1.6-.6zM166.4 272.6l1.6-.3-1.2-.3-1.5 .1zM164.9 273.7l1.5-1.1-1.1-.5-1.6 .8z" stroke="#09f"/><path d="M163.3 275.6l1.6-1.9-1.2-.8-1.5 1.5z" stroke="#08f"/><path d="M161.8 278.1l1.5-2.5-1.1-1.2-1.6 2.2z" stroke="#06f"/><path d="M160.2 281l1.6-2.9-1.2-1.5-1.5 2.7z" stroke="#04f"/><path d="M158.7 284l1.5-3-1.1-1.7-1.6 2.9z" stroke="#01f"/><path d="M157.1 286.8l1.6-2.8-1.2-1.8-1.5 2.9z" stroke="#00d"/><path d="M155.6 289l1.5-2.2-1.1-1.7-1.6 2.4z" stroke="#00a"/><path d="M154 290.4l1.6-1.4-1.2-1.5-1.5 1.9z" stroke="#009"/><path d="M152.5 290.8l1.5-.4-1.1-1-1.6 1zM151 290.2l1.5 .6-1.2-.4-1.5 .2z" stroke="#008"/><path d="M149.4 288.5l1.6 1.7-1.2 .4-1.6-.8z" stroke="#009"/><path d="M147.9 286.1l1.5 2.4-1.2 1.3-1.5-1.4z" stroke="#00c"/><path d="M146.3 283.1l1.6 3-1.2 2.3-1.6-1.9z" stroke="#00f"/><path d="M144.8 280l1.5 3.1-1.2 3.4-1.5-2.2z" stroke="#03f"/><path d="M143.2 277.2l1.6 2.8-1.2 4.3-1.6-2z" stroke="#06f"/><path d="M141.7 274.9l1.5 2.3-1.2 5.1-1.5-1.6z" stroke="#09f"/><path d="M140.1 273.6l1.6 1.3-1.2 5.8-1.6-.9z" stroke="#0cf"/><path d="M138.6 273.4l1.5 .2-1.2 6.2-1.5 0zM137 274.4l1.6-1-1.2 6.4-1.6 .8z" stroke="#0df"/><path d="M135.5 276.6l1.5-2.2-1.2 6.2-1.5 1.8z" stroke="#0cf"/><path d="M133.9 279.6l1.6-3-1.2 5.8-1.5 2.4z" stroke="#09f"/><path d="M132.4 283.3l1.5-3.7-1.1 5.2-1.6 2.8z" stroke="#06f"/><path d="M130.8 287.2l1.6-3.9-1.2 4.3-1.5 3z" stroke="#03f"/><path d="M129.3 291l1.5-3.8-1.1 3.4-1.6 2.7z" stroke="#00f"/><path d="M127.7 294.2l1.6-3.2-1.2 2.3-1.5 2.3z" stroke="#00c"/><path d="M126.2 296.7l1.5-2.5-1.1 1.4-1.6 1.5z" stroke="#009"/><path d="M124.6 298.2l1.6-1.5-1.2 .4-1.5 .7zM123.1 298.6l1.5-.4-1.1-.4-1.6-.3z" stroke="#008"/><path d="M121.5 298l1.6 .6-1.2-1.1-1.5-1z" stroke="#009"/><path d="M120 296.6l1.5 1.4-1.1-1.5-1.6-1.7z" stroke="#00a"/><path d="M118.4 294.6l1.6 2-1.2-1.8-1.5-2z" stroke="#00d"/><path d="M116.9 292.4l1.5 2.2-1.1-1.8-1.6-2.1z" stroke="#01f"/><path d="M115.3 290.3l1.6 2.1-1.2-1.7-1.5-1.8z" stroke="#04f"/><path d="M113.8 288.7l1.5 1.6-1.1-1.4-1.6-1.4z" stroke="#06f"/><path d="M112.3 287.6l1.5 1.1-1.2-1.2-1.5-.8z" stroke="#08f"/><path d="M110.7 287.3l1.6 .3-1.2-.9-1.6 .1zM109.2 287.8l1.5-.5-1.2-.5-1.5 .7zM107.6 289.1l1.6-1.3-1.2-.3-1.6 1.5zM169.2 272.8l1.5 .2-1.2-.2-1.5-.5zM167.6 273.3l1.6-.5-1.2-.5-1.6 .3zM166.1 274.7l1.5-1.4-1.2-.7-1.5 1.1z" stroke="#09f"/><path d="M164.5 276.8l1.6-2.1-1.2-1-1.6 1.9z" stroke="#08f"/><path d="M163 279.5l1.5-2.7-1.2-1.2-1.5 2.5z" stroke="#05f"/><path d="M161.4 282.6l1.6-3.1-1.2-1.4-1.6 2.9z" stroke="#03f"/><path d="M159.9 285.6l1.5-3-1.2-1.6-1.5 3z" stroke="#00f"/><path d="M158.3 288.2l1.6-2.6-1.2-1.6-1.6 2.8z" stroke="#00c"/><path d="M156.8 290.2l1.5-2-1.2-1.4-1.5 2.2z" stroke="#009"/><path d="M155.2 291.1l1.6-.9-1.2-1.2-1.6 1.4zM153.7 290.8l1.5 .3-1.2-.7-1.5 .4z" stroke="#008"/><path d="M152.1 289.3l1.6 1.5-1.2 0-1.5-.6z" stroke="#009"/><path d="M150.6 286.7l1.5 2.6-1.1 .9-1.6-1.7z" stroke="#00b"/><path d="M149 283.2l1.6 3.5-1.2 1.8-1.5-2.4z" stroke="#00f"/><path d="M147.5 279.3l1.5 3.9-1.1 2.9-1.6-3z" stroke="#04f"/><path d="M145.9 275.2l1.6 4.1-1.2 3.8-1.5-3.1z" stroke="#08f"/><path d="M144.4 271.5l1.5 3.7-1.1 4.8-1.6-2.8z" stroke="#0df"/><path d="M142.8 268.6l1.6 2.9-1.2 5.7-1.5-2.3z" stroke="#2fd"/><path d="M141.3 266.9l1.5 1.7-1.1 6.3-1.6-1.3z" stroke="#4fb"/><path d="M139.7 266.6l1.6 .3-1.2 6.7-1.5-.2zM138.2 267.7l1.5-1.1-1.1 6.8-1.6 1z" stroke="#6f9"/><path d="M136.6 270.3l1.6-2.6-1.2 6.7-1.5 2.2z" stroke="#4fb"/><path d="M135.1 274l1.5-3.7-1.1 6.3-1.6 3z" stroke="#2fd"/><path d="M133.5 278.5l1.6-4.5-1.2 5.6-1.5 3.7z" stroke="#0df"/><path d="M132 283.3l1.5-4.8-1.1 4.8-1.6 3.9z" stroke="#08f"/><path d="M130.5 288.1l1.5-4.8-1.2 3.9-1.5 3.8z" stroke="#04f"/><path d="M128.9 292.4l1.6-4.3-1.2 2.9-1.6 3.2z" stroke="#00f"/><path d="M127.4 295.8l1.5-3.4-1.2 1.8-1.5 2.5z" stroke="#00b"/><path d="M125.8 298.1l1.6-2.3-1.2 .9-1.6 1.5z" stroke="#009"/><path d="M124.3 299.2l1.5-1.1-1.2 .1-1.5 .4zM122.7 299.1l1.6 .1-1.2-.6-1.6-.6z" stroke="#008"/><path d="M121.2 298l1.5 1.1-1.2-1.1-1.5-1.4z" stroke="#009"/><path d="M119.6 296.2l1.6 1.8-1.2-1.4-1.6-2z" stroke="#00c"/><path d="M118.1 294l1.5 2.2-1.2-1.6-1.5-2.2z" stroke="#00f"/><path d="M116.5 291.8l1.6 2.2-1.2-1.6-1.6-2.1z" stroke="#03f"/><path d="M115 289.9l1.5 1.9-1.2-1.5-1.5-1.6z" stroke="#05f"/><path d="M113.4 288.5l1.6 1.4-1.2-1.2-1.5-1.1z" stroke="#08f"/><path d="M111.9 288l1.5 .5-1.1-.9-1.6-.3zM110.3 288.3l1.6-.3-1.2-.7-1.5 .5zM108.8 289.3l1.5-1-1.1-.5-1.6 1.3zM170.3 273.2l1.6 .1-1.2-.3-1.5-.2zM168.8 274l1.5-.8-1.1-.4-1.6 .5zM167.2 275.6l1.6-1.6-1.2-.7-1.5 1.4z" stroke="#09f"/><path d="M165.7 277.9l1.5-2.3-1.1-.9-1.6 2.1z" stroke="#07f"/><path d="M164.1 280.8l1.6-2.9-1.2-1.1-1.5 2.7z" stroke="#04f"/><path d="M162.6 284l1.5-3.2-1.1-1.3-1.6 3.1z" stroke="#02f"/><path d="M161 287l1.6-3-1.2-1.4-1.5 3z" stroke="#00d"/><path d="M159.5 289.4l1.5-2.4-1.1-1.4-1.6 2.6z" stroke="#00b"/><path d="M157.9 291l1.6-1.6-1.2-1.2-1.5 2z" stroke="#009"/><path d="M156.4 291.4l1.5-.4-1.1-.8-1.6 .9zM154.8 290.5l1.6 .9-1.2-.3-1.5-.3z" stroke="#008"/><path d="M153.3 288.2l1.5 2.3-1.1 .3-1.6-1.5z" stroke="#00a"/><path d="M151.7 284.7l1.6 3.5-1.2 1.1-1.5-2.6z" stroke="#00d"/><path d="M150.2 280.3l1.5 4.4-1.1 2-1.6-3.5z" stroke="#03f"/><path d="M148.7 275.3l1.5 5-1.2 2.9-1.5-3.9z" stroke="#08f"/><path d="M147.1 270.4l1.6 4.9-1.2 4-1.6-4.1z" stroke="#0ef"/><path d="M145.6 265.9l1.5 4.5-1.2 4.8-1.5-3.7z" stroke="#4fb"/><path d="M144 262.4l1.6 3.5-1.2 5.6-1.6-2.9z" stroke="#9f6"/><path d="M142.5 260.3l1.5 2.1-1.2 6.2-1.5-1.7z" stroke="#df2"/><path d="M140.9 259.9l1.6 .4-1.2 6.6-1.6-.3zM139.4 261.2l1.5-1.3-1.2 6.7-1.5 1.1z" stroke="#ef1"/><path d="M137.8 264.1l1.6-2.9-1.2 6.5-1.6 2.6z" stroke="#df2"/><path d="M136.3 268.3l1.5-4.2-1.2 6.2-1.5 3.7z" stroke="#9f6"/><path d="M134.7 273.6l1.6-5.3-1.2 5.7-1.6 4.5z" stroke="#4fb"/><path d="M133.2 279.4l1.5-5.8-1.2 4.9-1.5 4.8z" stroke="#0ef"/><path d="M131.6 285.1l1.6-5.7-1.2 3.9-1.5 4.8z" stroke="#08f"/><path d="M130.1 290.4l1.5-5.3-1.1 3-1.6 4.3z" stroke="#03f"/><path d="M128.5 294.7l1.6-4.3-1.2 2-1.5 3.4z" stroke="#00d"/><path d="M127 297.8l1.5-3.1-1.1 1.1-1.6 2.3z" stroke="#00a"/><path d="M125.4 299.6l1.6-1.8-1.2 .3-1.5 1.1zM123.9 300l1.5-.4-1.1-.4-1.6-.1z" stroke="#008"/><path d="M122.3 299.2l1.6 .8-1.2-.9-1.5-1.1z" stroke="#009"/><path d="M120.8 297.6l1.5 1.6-1.1-1.2-1.6-1.8z" stroke="#00b"/><path d="M119.2 295.4l1.6 2.2-1.2-1.4-1.5-2.2z" stroke="#00d"/><path d="M117.7 293.1l1.5 2.3-1.1-1.4-1.6-2.2z" stroke="#02f"/><path d="M116.1 291l1.6 2.1-1.2-1.3-1.5-1.9z" stroke="#04f"/><path d="M114.6 289.5l1.5 1.5-1.1-1.1-1.6-1.4z" stroke="#07f"/><path d="M113 288.7l1.6 .8-1.2-1-1.5-.5zM111.5 288.7l1.5 0-1.1-.7-1.6 .3zM110 289.6l1.5-.9-1.2-.4-1.5 1zM171.5 273.8l1.5-.1-1.1-.4-1.6-.1zM169.9 274.7l1.6-.9-1.2-.6-1.5 .8z" stroke="#09f"/><path d="M168.4 276.5l1.5-1.8-1.1-.7-1.6 1.6z" stroke="#08f"/><path d="M166.9 279l1.5-2.5-1.2-.9-1.5 2.3z" stroke="#06f"/><path d="M165.3 282l1.6-3-1.2-1.1-1.6 2.9z" stroke="#04f"/><path d="M163.8 285.2l1.5-3.2-1.2-1.2-1.5 3.2z" stroke="#01f"/><path d="M162.2 288.1l1.6-2.9-1.2-1.2-1.6 3z" stroke="#00d"/><path d="M160.7 290.4l1.5-2.3-1.2-1.1-1.5 2.4z" stroke="#00a"/><path d="M159.1 291.7l1.6-1.3-1.2-1-1.6 1.6zM157.6 291.6l1.5 .1-1.2-.7-1.5 .4z" stroke="#008"/><path d="M156 290.1l1.6 1.5-1.2-.2-1.6-.9z" stroke="#009"/><path d="M154.5 287.1l1.5 3-1.2 .4-1.5-2.3z" stroke="#00c"/><path d="M152.9 282.8l1.6 4.3-1.2 1.1-1.6-3.5z" stroke="#01f"/><path d="M151.4 277.5l1.5 5.3-1.2 1.9-1.5-4.4z" stroke="#06f"/><path d="M149.8 271.7l1.6 5.8-1.2 2.8-1.5-5z" stroke="#0df"/><path d="M148.3 266l1.5 5.7-1.1 3.6-1.6-4.9z" stroke="#4fb"/><path d="M146.7 260.9l1.6 5.1-1.2 4.4-1.5-4.5z" stroke="#bf4"/><path d="M145.2 256.9l1.5 4-1.1 5-1.6-3.5z" stroke="#fe0"/><path d="M143.6 254.5l1.6 2.4-1.2 5.5-1.5-2.1z" stroke="#fa0"/><path d="M142.1 254l1.5 .5-1.1 5.8-1.6-.4zM140.5 255.3l1.6-1.3-1.2 5.9-1.5 1.3z" stroke="#f80"/><path d="M139 258.6l1.5-3.3-1.1 5.9-1.6 2.9z" stroke="#fa0"/><path d="M137.4 263.4l1.6-4.8-1.2 5.5-1.5 4.2z" stroke="#fe0"/><path d="M135.9 269.3l1.5-5.9-1.1 4.9-1.6 5.3z" stroke="#bf4"/><path d="M134.3 275.8l1.6-6.5-1.2 4.3-1.5 5.8z" stroke="#4fb"/><path d="M132.8 282.4l1.5-6.6-1.1 3.6-1.6 5.7z" stroke="#0df"/><path d="M131.2 288.5l1.6-6.1-1.2 2.7-1.5 5.3z" stroke="#06f"/><path d="M129.7 293.6l1.5-5.1-1.1 1.9-1.6 4.3z" stroke="#01f"/><path d="M128.2 297.4l1.5-3.8-1.2 1.1-1.5 3.1z" stroke="#00c"/><path d="M126.6 299.8l1.6-2.4-1.2 .4-1.6 1.8z" stroke="#009"/><path d="M125.1 300.7l1.5-.9-1.2-.2-1.5 .4zM123.5 300.2l1.6 .5-1.2-.7-1.6-.8z" stroke="#008"/><path d="M122 298.7l1.5 1.5-1.2-1-1.5-1.6z" stroke="#00a"/><path d="M120.4 296.6l1.6 2.1-1.2-1.1-1.6-2.2z" stroke="#00d"/><path d="M118.9 294.2l1.5 2.4-1.2-1.2-1.5-2.3z" stroke="#01f"/><path d="M117.3 292l1.6 2.2-1.2-1.1-1.6-2.1z" stroke="#04f"/><path d="M115.8 290.3l1.5 1.7-1.2-1-1.5-1.5z" stroke="#06f"/><path d="M114.2 289.4l1.6 .9-1.2-.8-1.6-.8z" stroke="#08f"/><path d="M112.7 289.3l1.5 .1-1.2-.7-1.5 0zM111.1 290l1.6-.7-1.2-.6-1.5 .9zM172.7 274.3l1.5-.2-1.2-.4-1.5 .1zM171.1 275.3l1.6-1-1.2-.5-1.6 .9z" stroke="#09f"/><path d="M169.6 277.2l1.5-1.9-1.2-.6-1.5 1.8z" stroke="#08f"/><path d="M168 279.9l1.6-2.7-1.2-.7-1.5 2.5z" stroke="#06f"/><path d="M166.5 283l1.5-3.1-1.1-.9-1.6 3z" stroke="#03f"/><path d="M164.9 286.2l1.6-3.2-1.2-1-1.5 3.2z" stroke="#00f"/><path d="M163.4 289.1l1.5-2.9-1.1-1-1.6 2.9z" stroke="#00c"/><path d="M161.8 291.2l1.6-2.1-1.2-1-1.5 2.3z" stroke="#009"/><path d="M160.3 292.2l1.5-1-1.1-.8-1.6 1.3zM158.7 291.8l1.6 .4-1.2-.5-1.5-.1z" stroke="#008"/><path d="M157.2 289.8l1.5 2-1.1-.2-1.6-1.5z" stroke="#00a"/><path d="M155.6 286.2l1.6 3.6-1.2 .3-1.5-3z" stroke="#00d"/><path d="M154.1 281.3l1.5 4.9-1.1 .9-1.6-4.3z" stroke="#03f"/><path d="M152.5 275.4l1.6 5.9-1.2 1.5-1.5-5.3z" stroke="#09f"/><path d="M151 269l1.5 6.4-1.1 2.1-1.6-5.8z" stroke="#2fd"/><path d="M149.4 262.7l1.6 6.3-1.2 2.7-1.5-5.7z" stroke="#9f6"/><path d="M147.9 257l1.5 5.7-1.1 3.3-1.6-5.1z" stroke="#fe0"/><path d="M146.4 252.7l1.5 4.3-1.2 3.9-1.5-4z" stroke="#f80"/><path d="M144.8 250l1.6 2.7-1.2 4.2-1.6-2.4z" stroke="#f30"/><path d="M143.3 249.4l1.5 .6-1.2 4.5-1.5-.5zM141.7 250.9l1.6-1.5-1.2 4.6-1.6 1.3z" stroke="#f10"/><path d="M140.2 254.3l1.5-3.4-1.2 4.4-1.5 3.3z" stroke="#f30"/><path d="M138.6 259.5l1.6-5.2-1.2 4.3-1.6 4.8z" stroke="#f80"/><path d="M137.1 265.9l1.5-6.4-1.2 3.9-1.5 5.9z" stroke="#fe0"/><path d="M135.5 273.1l1.6-7.2-1.2 3.4-1.6 6.5z" stroke="#9f6"/><path d="M134 280.3l1.5-7.2-1.2 2.7-1.5 6.6z" stroke="#2fd"/><path d="M132.4 287l1.6-6.7-1.2 2.1-1.6 6.1z" stroke="#09f"/><path d="M130.9 292.8l1.5-5.8-1.2 1.5-1.5 5.1z" stroke="#03f"/><path d="M129.3 297.2l1.6-4.4-1.2 .8-1.5 3.8z" stroke="#00d"/><path d="M127.8 300l1.5-2.8-1.1 .2-1.6 2.4z" stroke="#00a"/><path d="M126.2 301.2l1.6-1.2-1.2-.2-1.5 .9zM124.7 301l1.5 .2-1.1-.5-1.6-.5z" stroke="#008"/><path d="M123.1 299.7l1.6 1.3-1.2-.8-1.5-1.5z" stroke="#009"/><path d="M121.6 297.6l1.5 2.1-1.1-1-1.6-2.1z" stroke="#00c"/><path d="M120 295.2l1.6 2.4-1.2-1-1.5-2.4z" stroke="#00f"/><path d="M118.5 292.9l1.5 2.3-1.1-1-1.6-2.2z" stroke="#03f"/><path d="M116.9 291.1l1.6 1.8-1.2-.9-1.5-1.7z" stroke="#06f"/><path d="M115.4 290l1.5 1.1-1.1-.8-1.6-.9z" stroke="#08f"/><path d="M113.8 289.8l1.6 .2-1.2-.6-1.5-.1zM112.3 290.5l1.5-.7-1.1-.5-1.6 .7zM173.8 274.9l1.6-.3-1.2-.5-1.5 .2zM172.3 276l1.5-1.1-1.1-.6-1.6 1z" stroke="#09f"/><path d="M170.7 277.9l1.6-1.9-1.2-.7-1.5 1.9z" stroke="#08f"/><path d="M169.2 280.6l1.5-2.7-1.1-.7-1.6 2.7z" stroke="#06f"/><path d="M167.6 283.8l1.6-3.2-1.2-.7-1.5 3.1z" stroke="#03f"/><path d="M166.1 287l1.5-3.2-1.1-.8-1.6 3.2z" stroke="#00f"/><path d="M164.6 289.9l1.5-2.9-1.2-.8-1.5 2.9z" stroke="#00b"/><path d="M163 291.9l1.6-2-1.2-.8-1.6 2.1z" stroke="#009"/><path d="M161.5 292.7l1.5-.8-1.2-.7-1.5 1zM159.9 292.1l1.6 .6-1.2-.5-1.6-.4z" stroke="#008"/><path d="M158.4 289.8l1.5 2.3-1.2-.3-1.5-2z" stroke="#00a"/><path d="M156.8 285.9l1.6 3.9-1.2 0-1.6-3.6z" stroke="#00e"/><path d="M155.3 280.5l1.5 5.4-1.2 .3-1.5-4.9z" stroke="#05f"/><path d="M153.7 274.2l1.6 6.3-1.2 .8-1.6-5.9z" stroke="#0cf"/><path d="M152.2 267.4l1.5 6.8-1.2 1.2-1.5-6.4z" stroke="#4fb"/><path d="M150.6 260.7l1.6 6.7-1.2 1.6-1.6-6.3z" stroke="#df2"/><path d="M149.1 254.8l1.5 5.9-1.2 2-1.5-5.7z" stroke="#fa0"/><path d="M147.5 250.2l1.6 4.6-1.2 2.2-1.5-4.3z" stroke="#f30"/><path d="M146 247.3l1.5 2.9-1.1 2.5-1.6-2.7z" stroke="#e00"/><path d="M144.4 246.6l1.6 .7-1.2 2.7-1.5-.6zM142.9 248.2l1.5-1.6-1.1 2.8-1.6 1.5z" stroke="#b00"/><path d="M141.3 251.8l1.6-3.6-1.2 2.7-1.5 3.4z" stroke="#e00"/><path d="M139.8 257.2l1.5-5.4-1.1 2.5-1.6 5.2z" stroke="#f30"/><path d="M138.2 264l1.6-6.8-1.2 2.3-1.5 6.4z" stroke="#fa0"/><path d="M136.7 271.5l1.5-7.5-1.1 1.9-1.6 7.2z" stroke="#df2"/><path d="M135.1 279.1l1.6-7.6-1.2 1.6-1.5 7.2z" stroke="#4fb"/><path d="M133.6 286.3l1.5-7.2-1.1 1.2-1.6 6.7z" stroke="#0cf"/><path d="M132 292.4l1.6-6.1-1.2 .7-1.5 5.8z" stroke="#05f"/><path d="M130.5 297.1l1.5-4.7-1.1 .4-1.6 4.4z" stroke="#00e"/><path d="M128.9 300.2l1.6-3.1-1.2 .1-1.5 2.8z" stroke="#00a"/><path d="M127.4 301.7l1.5-1.5-1.1-.2-1.6 1.2zM125.9 301.7l1.5 0-1.2-.5-1.5-.2z" stroke="#008"/><path d="M124.3 300.5l1.6 1.2-1.2-.7-1.6-1.3z" stroke="#009"/><path d="M122.8 298.4l1.5 2.1-1.2-.8-1.5-2.1z" stroke="#00b"/><path d="M121.2 296l1.6 2.4-1.2-.8-1.6-2.4z" stroke="#00f"/><path d="M119.7 293.7l1.5 2.3-1.2-.8-1.5-2.3z" stroke="#03f"/><path d="M118.1 291.8l1.6 1.9-1.2-.8-1.6-1.8z" stroke="#06f"/><path d="M116.6 290.7l1.5 1.1-1.2-.7-1.5-1.1z" stroke="#08f"/><path d="M115 290.4l1.6 .3-1.2-.7-1.6-.2zM113.5 290.9l1.5-.5-1.2-.6-1.5 .7zM175 275.4l1.6-.3-1.2-.5-1.6 .3zM173.5 276.5l1.5-1.1-1.2-.5-1.5 1.1z" stroke="#09f"/><path d="M171.9 278.5l1.6-2-1.2-.5-1.6 1.9z" stroke="#08f"/><path d="M170.4 281.2l1.5-2.7-1.2-.6-1.5 2.7z" stroke="#05f"/><path d="M168.8 284.4l1.6-3.2-1.2-.6-1.6 3.2z" stroke="#03f"/><path d="M167.3 287.6l1.5-3.2-1.2-.6-1.5 3.2z" stroke="#00e"/><path d="M165.7 290.5l1.6-2.9-1.2-.6-1.5 2.9z" stroke="#00b"/><path d="M164.2 292.5l1.5-2-1.1-.6-1.6 2z" stroke="#009"/><path d="M162.6 293.3l1.6-.8-1.2-.6-1.5 .8zM161.1 292.5l1.5 .8-1.1-.6-1.6-.6z" stroke="#008"/><path d="M159.5 290.1l1.6 2.4-1.2-.4-1.5-2.3z" stroke="#00a"/><path d="M158 286.1l1.5 4-1.1-.3-1.6-3.9z" stroke="#00f"/><path d="M156.4 280.6l1.6 5.5-1.2-.2-1.5-5.4z" stroke="#05f"/><path d="M154.9 274.1l1.5 6.5-1.1-.1-1.6-6.3z" stroke="#0df"/><path d="M153.3 267.2l1.6 6.9-1.2 .1-1.5-6.8z" stroke="#6f9"/><path d="M151.8 260.4l1.5 6.8-1.1 .2-1.6-6.7z" stroke="#ef1"/><path d="M150.2 254.3l1.6 6.1-1.2 .3-1.5-5.9z" stroke="#f80"/><path d="M148.7 249.6l1.5 4.7-1.1 .5-1.6-4.6z" stroke="#f10"/><path d="M147.1 246.8l1.6 2.8-1.2 .6-1.5-2.9z" stroke="#b00"/><path d="M145.6 246l1.5 .8-1.1 .5-1.6-.7zM144.1 247.6l1.5-1.6-1.2 .6-1.5 1.6z" stroke="#900"/><path d="M142.5 251.3l1.6-3.7-1.2 .6-1.6 3.6z" stroke="#b00"/><path d="M141 256.8l1.5-5.5-1.2 .5-1.5 5.4z" stroke="#f10"/><path d="M139.4 263.6l1.6-6.8-1.2 .4-1.6 6.8z" stroke="#f80"/><path d="M137.9 271.3l1.5-7.7-1.2 .4-1.5 7.5z" stroke="#ef1"/><path d="M136.3 279l1.6-7.7-1.2 .2-1.6 7.6z" stroke="#6f9"/><path d="M134.8 286.3l1.5-7.3-1.2 .1-1.5 7.2z" stroke="#0df"/><path d="M133.2 292.6l1.6-6.3-1.2 0-1.6 6.1z" stroke="#05f"/><path d="M131.7 297.4l1.5-4.8-1.2-.2-1.5 4.7z" stroke="#00f"/><path d="M130.1 300.7l1.6-3.3-1.2-.3-1.6 3.1z" stroke="#00a"/><path d="M128.6 302.2l1.5-1.5-1.2-.5-1.5 1.5zM127 302.3l1.6-.1-1.2-.5-1.5 0z" stroke="#008"/><path d="M125.5 301.1l1.5 1.2-1.1-.6-1.6-1.2z" stroke="#009"/><path d="M123.9 299.1l1.6 2-1.2-.6-1.5-2.1z" stroke="#00b"/><path d="M122.4 296.6l1.5 2.5-1.1-.7-1.6-2.4z" stroke="#00e"/><path d="M120.8 294.3l1.6 2.3-1.2-.6-1.5-2.3z" stroke="#03f"/><path d="M119.3 292.4l1.5 1.9-1.1-.6-1.6-1.9z" stroke="#05f"/><path d="M117.7 291.2l1.6 1.2-1.2-.6-1.5-1.1z" stroke="#08f"/><path d="M116.2 290.9l1.5 .3-1.1-.5-1.6-.3zM114.6 291.5l1.6-.6-1.2-.5-1.5 .5zM176.2 275.9l1.5-.2-1.1-.6-1.6 .3zM174.6 277l1.6-1.1-1.2-.5-1.5 1.1z" stroke="#09f"/><path d="M173.1 279l1.5-2-1.1-.5-1.6 2z" stroke="#08f"/><path d="M171.5 281.7l1.6-2.7-1.2-.5-1.5 2.7z" stroke="#05f"/><path d="M170 284.8l1.5-3.1-1.1-.5-1.6 3.2z" stroke="#03f"/><path d="M168.4 288.1l1.6-3.3-1.2-.4-1.5 3.2z" stroke="#00e"/><path d="M166.9 290.9l1.5-2.8-1.1-.5-1.6 2.9z" stroke="#00b"/><path d="M165.3 293l1.6-2.1-1.2-.4-1.5 2z" stroke="#009"/><path d="M163.8 293.8l1.5-.8-1.1-.5-1.6 .8zM162.3 293.1l1.5 .7-1.2-.5-1.5-.8z" stroke="#008"/><path d="M160.7 290.8l1.6 2.3-1.2-.6-1.6-2.4z" stroke="#00a"/><path d="M159.2 286.9l1.5 3.9-1.2-.7-1.5-4z" stroke="#00f"/><path d="M157.6 281.6l1.6 5.3-1.2-.8-1.6-5.5z" stroke="#05f"/><path d="M156.1 275.3l1.5 6.3-1.2-1-1.5-6.5z" stroke="#0df"/><path d="M154.5 268.4l1.6 6.9-1.2-1.2-1.6-6.9z" stroke="#6f9"/><path d="M153 261.8l1.5 6.6-1.2-1.2-1.5-6.8z" stroke="#ef1"/><path d="M151.4 255.8l1.6 6-1.2-1.4-1.6-6.1z" stroke="#f80"/><path d="M149.9 251.2l1.5 4.6-1.2-1.5-1.5-4.7z" stroke="#f10"/><path d="M148.3 248.4l1.6 2.8-1.2-1.6-1.6-2.8z" stroke="#b00"/><path d="M146.8 247.7l1.5 .7-1.2-1.6-1.5-.8zM145.2 249.2l1.6-1.5-1.2-1.7-1.5 1.6z" stroke="#900"/><path d="M143.7 252.8l1.5-3.6-1.1-1.6-1.6 3.7z" stroke="#b00"/><path d="M142.1 258.3l1.6-5.5-1.2-1.5-1.5 5.5z" stroke="#f10"/><path d="M140.6 265l1.5-6.7-1.1-1.5-1.6 6.8z" stroke="#f80"/><path d="M139 272.5l1.6-7.5-1.2-1.4-1.5 7.7z" stroke="#ef1"/><path d="M137.5 280.2l1.5-7.7-1.1-1.2-1.6 7.7z" stroke="#6f9"/><path d="M135.9 287.3l1.6-7.1-1.2-1.2-1.5 7.3z" stroke="#0df"/><path d="M134.4 293.4l1.5-6.1-1.1-1-1.6 6.3z" stroke="#05f"/><path d="M132.8 298.2l1.6-4.8-1.2-.8-1.5 4.8z" stroke="#00f"/><path d="M131.3 301.3l1.5-3.1-1.1-.8-1.6 3.3z" stroke="#00a"/><path d="M129.7 302.8l1.6-1.5-1.2-.6-1.5 1.5zM128.2 302.7l1.5 .1-1.1-.6-1.6 .1z" stroke="#008"/><path d="M126.6 301.5l1.6 1.2-1.2-.4-1.5-1.2z" stroke="#009"/><path d="M125.1 299.5l1.5 2-1.1-.4-1.6-2z" stroke="#00b"/><path d="M123.6 297.1l1.5 2.4-1.2-.4-1.5-2.5z" stroke="#00e"/><path d="M122 294.7l1.6 2.4-1.2-.5-1.6-2.3z" stroke="#03f"/><path d="M120.5 292.9l1.5 1.8-1.2-.4-1.5-1.9z" stroke="#05f"/><path d="M118.9 291.7l1.6 1.2-1.2-.5-1.6-1.2z" stroke="#08f"/><path d="M117.4 291.4l1.5 .3-1.2-.5-1.5-.3zM115.8 292l1.6-.6-1.2-.5-1.6 .6zM177.4 276.4l1.5-.2-1.2-.5-1.5 .2zM175.8 277.4l1.6-1-1.2-.5-1.6 1.1z" stroke="#09f"/><path d="M174.3 279.3l1.5-1.9-1.2-.4-1.5 2z" stroke="#08f"/><path d="M172.7 282l1.6-2.7-1.2-.3-1.6 2.7z" stroke="#06f"/><path d="M171.2 285.1l1.5-3.1-1.2-.3-1.5 3.1z" stroke="#03f"/><path d="M169.6 288.3l1.6-3.2-1.2-.3-1.6 3.3z" stroke="#00f"/><path d="M168.1 291.2l1.5-2.9-1.2-.2-1.5 2.8z" stroke="#00b"/><path d="M166.5 293.3l1.6-2.1-1.2-.3-1.6 2.1z" stroke="#009"/><path d="M165 294.3l1.5-1-1.2-.3-1.5 .8zM163.4 293.9l1.6 .4-1.2-.5-1.5-.7z" stroke="#008"/><path d="M161.9 291.9l1.5 2-1.1-.8-1.6-2.3z" stroke="#00a"/><path d="M160.3 288.4l1.6 3.5-1.2-1.1-1.5-3.9z" stroke="#00e"/><path d="M158.8 283.4l1.5 5-1.1-1.5-1.6-5.3z" stroke="#05f"/><path d="M157.2 277.5l1.6 5.9-1.2-1.8-1.5-6.3z" stroke="#0cf"/><path d="M155.7 271.1l1.5 6.4-1.1-2.2-1.6-6.9z" stroke="#4fb"/><path d="M154.1 264.8l1.6 6.3-1.2-2.7-1.5-6.6z" stroke="#df2"/><path d="M152.6 259.2l1.5 5.6-1.1-3-1.6-6z" stroke="#fa0"/><path d="M151 254.8l1.6 4.4-1.2-3.4-1.5-4.6z" stroke="#f30"/><path d="M149.5 252.1l1.5 2.7-1.1-3.6-1.6-2.8z" stroke="#e00"/><path d="M147.9 251.5l1.6 .6-1.2-3.7-1.5-.7zM146.4 253l1.5-1.5-1.1-3.8-1.6 1.5z" stroke="#b00"/><path d="M144.8 256.4l1.6-3.4-1.2-3.8-1.5 3.6z" stroke="#e00"/><path d="M143.3 261.6l1.5-5.2-1.1-3.6-1.6 5.5z" stroke="#f30"/><path d="M141.8 268l1.5-6.4-1.2-3.3-1.5 6.7z" stroke="#fa0"/><path d="M140.2 275.2l1.6-7.2-1.2-3-1.6 7.5z" stroke="#df2"/><path d="M138.7 282.4l1.5-7.2-1.2-2.7-1.5 7.7z" stroke="#4fb"/><path d="M137.1 289.1l1.6-6.7-1.2-2.2-1.6 7.1z" stroke="#0cf"/><path d="M135.6 294.9l1.5-5.8-1.2-1.8-1.5 6.1z" stroke="#05f"/><path d="M134 299.3l1.6-4.4-1.2-1.5-1.6 4.8z" stroke="#00e"/><path d="M132.5 302.1l1.5-2.8-1.2-1.1-1.5 3.1z" stroke="#00a"/><path d="M130.9 303.3l1.6-1.2-1.2-.8-1.6 1.5zM129.4 303.1l1.5 .2-1.2-.5-1.5-.1z" stroke="#008"/><path d="M127.8 301.8l1.6 1.3-1.2-.4-1.6-1.2z" stroke="#009"/><path d="M126.3 299.7l1.5 2.1-1.2-.3-1.5-2z" stroke="#00b"/><path d="M124.7 297.3l1.6 2.4-1.2-.2-1.5-2.4z" stroke="#00f"/><path d="M123.2 295l1.5 2.3-1.1-.2-1.6-2.4z" stroke="#03f"/><path d="M121.6 293.2l1.6 1.8-1.2-.3-1.5-1.8z" stroke="#06f"/><path d="M120.1 292.1l1.5 1.1-1.1-.3-1.6-1.2z" stroke="#08f"/><path d="M118.5 291.9l1.6 .2-1.2-.4-1.5-.3zM117 292.6l1.5-.7-1.1-.5-1.6 .6zM178.5 276.9l1.6 0-1.2-.7-1.5 .2zM177 277.8l1.5-.9-1.1-.5-1.6 1z" stroke="#09f"/><path d="M175.4 279.6l1.6-1.8-1.2-.4-1.5 1.9z" stroke="#08f"/><path d="M173.9 282.1l1.5-2.5-1.1-.3-1.6 2.7z" stroke="#06f"/><path d="M172.3 285.1l1.6-3-1.2-.1-1.5 3.1z" stroke="#03f"/><path d="M170.8 288.3l1.5-3.2-1.1 0-1.6 3.2z" stroke="#00f"/><path d="M169.2 291.3l1.6-3-1.2 0-1.5 2.9z" stroke="#00c"/><path d="M167.7 293.6l1.5-2.3-1.1-.1-1.6 2.1z" stroke="#009"/><path d="M166.1 294.9l1.6-1.3-1.2-.3-1.5 1zM164.6 294.8l1.5 .1-1.1-.6-1.6-.4z" stroke="#008"/><path d="M163 293.3l1.6 1.5-1.2-.9-1.5-2z" stroke="#00a"/><path d="M161.5 290.3l1.5 3-1.1-1.4-1.6-3.5z" stroke="#00d"/><path d="M160 285.9l1.5 4.4-1.2-1.9-1.5-5z" stroke="#03f"/><path d="M158.4 280.7l1.6 5.2-1.2-2.5-1.6-5.9z" stroke="#09f"/><path d="M156.9 274.9l1.5 5.8-1.2-3.2-1.5-6.4z" stroke="#2fd"/><path d="M155.3 269.2l1.6 5.7-1.2-3.8-1.6-6.3z" stroke="#9f6"/><path d="M153.8 264.1l1.5 5.1-1.2-4.4-1.5-5.6z" stroke="#fe0"/><path d="M152.2 260.1l1.6 4-1.2-4.9-1.6-4.4z" stroke="#f80"/><path d="M150.7 257.7l1.5 2.4-1.2-5.3-1.5-2.7z" stroke="#f30"/><path d="M149.1 257.1l1.6 .6-1.2-5.6-1.6-.6zM147.6 258.5l1.5-1.4-1.2-5.6-1.5 1.5z" stroke="#f10"/><path d="M146 261.7l1.6-3.2-1.2-5.5-1.6 3.4z" stroke="#f30"/><path d="M144.5 266.5l1.5-4.8-1.2-5.3-1.5 5.2z" stroke="#f80"/><path d="M142.9 272.4l1.6-5.9-1.2-4.9-1.5 6.4z" stroke="#fe0"/><path d="M141.4 279l1.5-6.6-1.1-4.4-1.6 7.2z" stroke="#9f6"/><path d="M139.8 285.6l1.6-6.6-1.2-3.8-1.5 7.2z" stroke="#2fd"/><path d="M138.3 291.7l1.5-6.1-1.1-3.2-1.6 6.7z" stroke="#09f"/><path d="M136.7 296.8l1.6-5.1-1.2-2.6-1.5 5.8z" stroke="#03f"/><path d="M135.2 300.6l1.5-3.8-1.1-1.9-1.6 4.4z" stroke="#00d"/><path d="M133.6 303l1.6-2.4-1.2-1.3-1.5 2.8z" stroke="#00a"/><path d="M132.1 303.8l1.5-.8-1.1-.9-1.6 1.2zM130.5 303.4l1.6 .4-1.2-.5-1.5-.2z" stroke="#008"/><path d="M129 301.9l1.5 1.5-1.1-.3-1.6-1.3z" stroke="#009"/><path d="M127.4 299.8l1.6 2.1-1.2-.1-1.5-2.1z" stroke="#00c"/><path d="M125.9 297.4l1.5 2.4-1.1-.1-1.6-2.4z" stroke="#00f"/><path d="M124.3 295.2l1.6 2.2-1.2-.1-1.5-2.3z" stroke="#03f"/><path d="M122.8 293.5l1.5 1.7-1.1-.2-1.6-1.8z" stroke="#06f"/><path d="M121.3 292.5l1.5 1-1.2-.3-1.5-1.1z" stroke="#08f"/><path d="M119.7 292.4l1.6 .1-1.2-.4-1.6-.2zM118.2 293.2l1.5-.8-1.2-.5-1.5 .7zM179.7 277.5l1.5 0-1.1-.6-1.6 0zM178.2 278.2l1.5-.7-1.2-.6-1.5 .9z" stroke="#09f"/><path d="M176.6 279.8l1.6-1.6-1.2-.4-1.6 1.8z" stroke="#08f"/><path d="M175.1 282.1l1.5-2.3-1.2-.2-1.5 2.5z" stroke="#06f"/><path d="M173.5 285l1.6-2.9-1.2 0-1.6 3z" stroke="#04f"/><path d="M172 288.2l1.5-3.2-1.2 .1-1.5 3.2z" stroke="#01f"/><path d="M170.4 291.2l1.6-3-1.2 .1-1.6 3z" stroke="#00d"/><path d="M168.9 293.7l1.5-2.5-1.2 .1-1.5 2.3z" stroke="#00a"/><path d="M167.3 295.2l1.6-1.5-1.2-.1-1.6 1.3zM165.8 295.6l1.5-.4-1.2-.3-1.5-.1z" stroke="#008"/><path d="M164.2 294.7l1.6 .9-1.2-.8-1.6-1.5z" stroke="#009"/><path d="M162.7 292.4l1.5 2.3-1.2-1.4-1.5-3z" stroke="#00c"/><path d="M161.1 288.9l1.6 3.5-1.2-2.1-1.5-4.4z" stroke="#01f"/><path d="M159.6 284.5l1.5 4.4-1.1-3-1.6-5.2z" stroke="#06f"/><path d="M158 279.5l1.6 5-1.2-3.8-1.5-5.8z" stroke="#0df"/><path d="M156.5 274.6l1.5 4.9-1.1-4.6-1.6-5.7z" stroke="#4fb"/><path d="M154.9 270.1l1.6 4.5-1.2-5.4-1.5-5.1z" stroke="#bf4"/><path d="M153.4 266.6l1.5 3.5-1.1-6-1.6-4z" stroke="#fe0"/><path d="M151.8 264.6l1.6 2-1.2-6.5-1.5-2.4z" stroke="#fa0"/><path d="M150.3 264.1l1.5 .5-1.1-6.9-1.6-.6zM148.7 265.4l1.6-1.3-1.2-7-1.5 1.4z" stroke="#f80"/><path d="M147.2 268.3l1.5-2.9-1.1-6.9-1.6 3.2z" stroke="#fa0"/><path d="M145.6 272.6l1.6-4.3-1.2-6.6-1.5 4.8z" stroke="#fe0"/><path d="M144.1 277.8l1.5-5.2-1.1-6.1-1.6 5.9z" stroke="#bf4"/><path d="M142.5 283.6l1.6-5.8-1.2-5.4-1.5 6.6z" stroke="#4fb"/><path d="M141 289.4l1.5-5.8-1.1-4.6-1.6 6.6z" stroke="#0df"/><path d="M139.5 294.6l1.5-5.2-1.2-3.8-1.5 6.1z" stroke="#06f"/><path d="M137.9 298.9l1.6-4.3-1.2-2.9-1.6 5.1z" stroke="#01f"/><path d="M136.4 302l1.5-3.1-1.2-2.1-1.5 3.8z" stroke="#00c"/><path d="M134.8 303.8l1.6-1.8-1.2-1.4-1.6 2.4z" stroke="#009"/><path d="M133.3 304.2l1.5-.4-1.2-.8-1.5 .8zM131.7 303.4l1.6 .8-1.2-.4-1.6-.4z" stroke="#008"/><path d="M130.2 301.8l1.5 1.6-1.2 0-1.5-1.5z" stroke="#00a"/><path d="M128.6 299.6l1.6 2.2-1.2 .1-1.6-2.1z" stroke="#00d"/><path d="M127.1 297.3l1.5 2.3-1.2 .2-1.5-2.4z" stroke="#01f"/><path d="M125.5 295.2l1.6 2.1-1.2 .1-1.6-2.2z" stroke="#04f"/><path d="M124 293.7l1.5 1.5-1.2 0-1.5-1.7z" stroke="#06f"/><path d="M122.4 292.9l1.6 .8-1.2-.2-1.5-1z" stroke="#08f"/><path d="M120.9 293l1.5-.1-1.1-.4-1.6-.1zM119.3 293.8l1.6-.8-1.2-.6-1.5 .8zM180.9 278l1.5 .3-1.2-.8-1.5 0zM179.3 278.6l1.6-.6-1.2-.5-1.5 .7zM177.8 279.9l1.5-1.3-1.1-.4-1.6 1.6z" stroke="#09f"/><path d="M176.2 282.1l1.6-2.2-1.2-.1-1.5 2.3z" stroke="#07f"/><path d="M174.7 284.8l1.5-2.7-1.1 0-1.6 2.9z" stroke="#04f"/><path d="M173.1 287.8l1.6-3-1.2 .2-1.5 3.2z" stroke="#02f"/><path d="M171.6 290.9l1.5-3.1-1.1 .4-1.6 3z" stroke="#00d"/><path d="M170 293.5l1.6-2.6-1.2 .3-1.5 2.5z" stroke="#00b"/><path d="M168.5 295.4l1.5-1.9-1.1 .2-1.6 1.5z" stroke="#009"/><path d="M166.9 296.3l1.6-.9-1.2-.2-1.5 .4zM165.4 296.1l1.5 .2-1.1-.7-1.6-.9z" stroke="#008"/><path d="M163.8 294.6l1.6 1.5-1.2-1.4-1.5-2.3z" stroke="#00a"/><path d="M162.3 292l1.5 2.6-1.1-2.2-1.6-3.5z" stroke="#00d"/><path d="M160.7 288.5l1.6 3.5-1.2-3.1-1.5-4.4z" stroke="#03f"/><path d="M159.2 284.5l1.5 4-1.1-4-1.6-5z" stroke="#08f"/><path d="M157.7 280.4l1.5 4.1-1.2-5-1.5-4.9z" stroke="#0ef"/><path d="M156.1 276.8l1.6 3.6-1.2-5.8-1.6-4.5z" stroke="#4fb"/><path d="M154.6 273.9l1.5 2.9-1.2-6.7-1.5-3.5z" stroke="#9f6"/><path d="M153 272.2l1.6 1.7-1.2-7.3-1.6-2z" stroke="#df2"/><path d="M151.5 271.9l1.5 .3-1.2-7.6-1.5-.5zM149.9 273l1.6-1.1-1.2-7.8-1.6 1.3z" stroke="#ef1"/><path d="M148.4 275.5l1.5-2.5-1.2-7.6-1.5 2.9z" stroke="#df2"/><path d="M146.8 279.2l1.6-3.7-1.2-7.2-1.6 4.3z" stroke="#9f6"/><path d="M145.3 283.7l1.5-4.5-1.2-6.6-1.5 5.2z" stroke="#4fb"/><path d="M143.7 288.6l1.6-4.9-1.2-5.9-1.6 5.8z" stroke="#0ef"/><path d="M142.2 293.4l1.5-4.8-1.2-5-1.5 5.8z" stroke="#08f"/><path d="M140.6 297.7l1.6-4.3-1.2-4-1.5 5.2z" stroke="#03f"/><path d="M139.1 301.1l1.5-3.4-1.1-3.1-1.6 4.3z" stroke="#00d"/><path d="M137.5 303.4l1.6-2.3-1.2-2.2-1.5 3.1z" stroke="#00a"/><path d="M136 304.5l1.5-1.1-1.1-1.4-1.6 1.8zM134.4 304.4l1.6 .1-1.2-.7-1.5 .4z" stroke="#008"/><path d="M132.9 303.3l1.5 1.1-1.1-.2-1.6-.8z" stroke="#009"/><path d="M131.3 301.5l1.6 1.8-1.2 .1-1.5-1.6z" stroke="#00b"/><path d="M129.8 299.3l1.5 2.2-1.1 .3-1.6-2.2z" stroke="#00d"/><path d="M128.2 297l1.6 2.3-1.2 .3-1.5-2.3z" stroke="#02f"/><path d="M126.7 295.1l1.5 1.9-1.1 .3-1.6-2.1z" stroke="#04f"/><path d="M125.1 293.8l1.6 1.3-1.2 .1-1.5-1.5z" stroke="#07f"/><path d="M123.6 293.2l1.5 .6-1.1-.1-1.6-.8zM122 293.5l1.6-.3-1.2-.3-1.5 .1zM120.5 294.6l1.5-1.1-1.1-.5-1.6 .8zM182 278.7l1.6 .4-1.2-.8-1.5-.3zM180.5 279l1.5-.3-1.1-.7-1.6 .6zM178.9 280.1l1.6-1.1-1.2-.4-1.5 1.3z" stroke="#09f"/><path d="M177.4 281.9l1.5-1.8-1.1-.2-1.6 2.2z" stroke="#08f"/><path d="M175.9 284.4l1.5-2.5-1.2 .2-1.5 2.7z" stroke="#05f"/><path d="M174.3 287.3l1.6-2.9-1.2 .4-1.6 3z" stroke="#03f"/><path d="M172.8 290.3l1.5-3-1.2 .5-1.5 3.1z" stroke="#00f"/><path d="M171.2 293.1l1.6-2.8-1.2 .6-1.6 2.6z" stroke="#00c"/><path d="M169.7 295.3l1.5-2.2-1.2 .4-1.5 1.9z" stroke="#009"/><path d="M168.1 296.7l1.6-1.4-1.2 .1-1.6 .9zM166.6 297.1l1.5-.4-1.2-.4-1.5-.2z" stroke="#008"/><path d="M165 296.5l1.6 .6-1.2-1-1.6-1.5z" stroke="#009"/><path d="M163.5 294.8l1.5 1.7-1.2-1.9-1.5-2.6z" stroke="#00b"/><path d="M161.9 292.4l1.6 2.4-1.2-2.8-1.6-3.5z" stroke="#00f"/><path d="M160.4 289.4l1.5 3-1.2-3.9-1.5-4z" stroke="#04f"/><path d="M158.8 286.3l1.6 3.1-1.2-4.9-1.5-4.1z" stroke="#08f"/><path d="M157.3 283.5l1.5 2.8-1.1-5.9-1.6-3.6z" stroke="#0df"/><path d="M155.7 281.2l1.6 2.3-1.2-6.7-1.5-2.9z" stroke="#2fd"/><path d="M154.2 279.9l1.5 1.3-1.1-7.3-1.6-1.7z" stroke="#4fb"/><path d="M152.6 279.7l1.6 .2-1.2-7.7-1.5-.3zM151.1 280.7l1.5-1-1.1-7.8-1.6 1.1z" stroke="#6f9"/><path d="M149.5 282.9l1.6-2.2-1.2-7.7-1.5 2.5z" stroke="#4fb"/><path d="M148 285.9l1.5-3-1.1-7.4-1.6 3.7z" stroke="#2fd"/><path d="M146.4 289.6l1.6-3.7-1.2-6.7-1.5 4.5z" stroke="#0df"/><path d="M144.9 293.5l1.5-3.9-1.1-5.9-1.6 4.9z" stroke="#08f"/><path d="M143.3 297.3l1.6-3.8-1.2-4.9-1.5 4.8z" stroke="#04f"/><path d="M141.8 300.5l1.5-3.2-1.1-3.9-1.6 4.3z" stroke="#00f"/><path d="M140.2 303l1.6-2.5-1.2-2.8-1.5 3.4z" stroke="#00b"/><path d="M138.7 304.5l1.5-1.5-1.1-1.9-1.6 2.3z" stroke="#009"/><path d="M137.2 304.9l1.5-.4-1.2-1.1-1.5 1.1zM135.6 304.3l1.6 .6-1.2-.4-1.6-.1z" stroke="#008"/><path d="M134.1 302.9l1.5 1.4-1.2 .1-1.5-1.1z" stroke="#009"/><path d="M132.5 300.9l1.6 2-1.2 .4-1.6-1.8z" stroke="#00c"/><path d="M131 298.7l1.5 2.2-1.2 .6-1.5-2.2z" stroke="#00f"/><path d="M129.4 296.7l1.6 2-1.2 .6-1.6-2.3z" stroke="#03f"/><path d="M127.9 295l1.5 1.7-1.2 .3-1.5-1.9z" stroke="#05f"/><path d="M126.3 293.9l1.6 1.1-1.2 .1-1.6-1.3z" stroke="#08f"/><path d="M124.8 293.6l1.5 .3-1.2-.1-1.5-.6zM123.2 294.2l1.6-.6-1.2-.4-1.6 .3zM121.7 295.4l1.5-1.2-1.2-.7-1.5 1.1zM183.2 279.4l1.6 .6-1.2-.9-1.6-.4zM181.7 279.4l1.5 0-1.2-.7-1.5 .3zM180.1 280.2l1.6-.8-1.2-.4-1.6 1.1z" stroke="#09f"/><path d="M178.6 281.8l1.5-1.6-1.2-.1-1.5 1.8z" stroke="#08f"/><path d="M177 284l1.6-2.2-1.2 .1-1.5 2.5z" stroke="#06f"/><path d="M175.5 286.7l1.5-2.7-1.1 .4-1.6 2.9z" stroke="#04f"/><path d="M173.9 289.6l1.6-2.9-1.2 .6-1.5 3z" stroke="#01f"/><path d="M172.4 292.4l1.5-2.8-1.1 .7-1.6 2.8z" stroke="#00d"/><path d="M170.8 294.9l1.6-2.5-1.2 .7-1.5 2.2z" stroke="#00a"/><path d="M169.3 296.7l1.5-1.8-1.1 .4-1.6 1.4z" stroke="#009"/><path d="M167.7 297.8l1.6-1.1-1.2 0-1.5 .4zM166.2 297.9l1.5-.1-1.1-.7-1.6-.6z" stroke="#008"/><path d="M164.6 297.2l1.6 .7-1.2-1.4-1.5-1.7z" stroke="#009"/><path d="M163.1 295.8l1.5 1.4-1.1-2.4-1.6-2.4z" stroke="#00c"/><path d="M161.5 293.8l1.6 2-1.2-3.4-1.5-3z" stroke="#00f"/><path d="M160 291.7l1.5 2.1-1.1-4.4-1.6-3.1z" stroke="#03f"/><path d="M158.4 289.7l1.6 2-1.2-5.4-1.5-2.8z" stroke="#06f"/><path d="M156.9 288.1l1.5 1.6-1.1-6.2-1.6-2.3z" stroke="#09f"/><path d="M155.4 287.2l1.5 .9-1.2-6.9-1.5-1.3z" stroke="#0cf"/><path d="M153.8 287.1l1.6 .1-1.2-7.3-1.6-.2zM152.3 288l1.5-.9-1.2-7.4-1.5 1z" stroke="#0df"/><path d="M150.7 289.7l1.6-1.7-1.2-7.3-1.6 2.2z" stroke="#0cf"/><path d="M149.2 292.1l1.5-2.4-1.2-6.8-1.5 3z" stroke="#09f"/><path d="M147.6 295l1.6-2.9-1.2-6.2-1.6 3.7z" stroke="#06f"/><path d="M146.1 297.9l1.5-2.9-1.2-5.4-1.5 3.9z" stroke="#03f"/><path d="M144.5 300.7l1.6-2.8-1.2-4.4-1.6 3.8z" stroke="#00f"/><path d="M143 302.9l1.5-2.2-1.2-3.4-1.5 3.2z" stroke="#00c"/><path d="M141.4 304.5l1.6-1.6-1.2-2.4-1.6 2.5z" stroke="#009"/><path d="M139.9 305.1l1.5-.6-1.2-1.5-1.5 1.5zM138.3 304.9l1.6 .2-1.2-.6-1.5 .4z" stroke="#008"/><path d="M136.8 303.9l1.5 1-1.1 0-1.6-.6z" stroke="#009"/><path d="M135.2 302.2l1.6 1.7-1.2 .4-1.5-1.4z" stroke="#00a"/><path d="M133.7 300.2l1.5 2-1.1 .7-1.6-2z" stroke="#00d"/><path d="M132.1 298.1l1.6 2.1-1.2 .7-1.5-2.2z" stroke="#01f"/><path d="M130.6 296.2l1.5 1.9-1.1 .6-1.6-2z" stroke="#04f"/><path d="M129 294.8l1.6 1.4-1.2 .5-1.5-1.7z" stroke="#06f"/><path d="M127.5 294.1l1.5 .7-1.1 .2-1.6-1.1z" stroke="#08f"/><path d="M125.9 294.1l1.6 0-1.2-.2-1.5-.3zM124.4 294.9l1.5-.8-1.1-.5-1.6 .6zM122.8 296.3l1.6-1.4-1.2-.7-1.5 1.2z" stroke="#09f"/><path d="M184.4 280.2l1.5 .8-1.1-1-1.6-.6z" stroke="#08f"/><path d="M182.8 280l1.6 .2-1.2-.8-1.5 0zM181.3 280.5l1.5-.5-1.1-.6-1.6 .8zM179.7 281.7l1.6-1.2-1.2-.3-1.5 1.6z" stroke="#09f"/><path d="M178.2 283.5l1.5-1.8-1.1 .1-1.6 2.2z" stroke="#07f"/><path d="M176.6 286l1.6-2.5-1.2 .5-1.5 2.7z" stroke="#05f"/><path d="M175.1 288.7l1.5-2.7-1.1 .7-1.6 2.9z" stroke="#02f"/><path d="M173.6 291.5l1.5-2.8-1.2 .9-1.5 2.8z" stroke="#00f"/><path d="M172 294.1l1.6-2.6-1.2 .9-1.6 2.5z" stroke="#00c"/><path d="M170.5 296.3l1.5-2.2-1.2 .8-1.5 1.8z" stroke="#00a"/><path d="M168.9 297.9l1.6-1.6-1.2 .4-1.6 1.1zM167.4 298.7l1.5-.8-1.2-.1-1.5 .1zM165.8 298.9l1.6-.2-1.2-.8-1.6-.7z" stroke="#008"/><path d="M164.3 298.4l1.5 .5-1.2-1.7-1.5-1.4z" stroke="#009"/><path d="M162.7 297.4l1.6 1-1.2-2.6-1.6-2z" stroke="#00b"/><path d="M161.2 296.1l1.5 1.3-1.2-3.6-1.5-2.1z" stroke="#00d"/><path d="M159.6 294.9l1.6 1.2-1.2-4.4-1.6-2z" stroke="#01f"/><path d="M158.1 294l1.5 .9-1.2-5.2-1.5-1.6z" stroke="#03f"/><path d="M156.5 293.4l1.6 .6-1.2-5.9-1.5-.9zM155 293.5l1.5-.1-1.1-6.2-1.6-.1zM153.4 294.3l1.6-.8-1.2-6.4-1.5 .9zM151.9 295.6l1.5-1.3-1.1-6.3-1.6 1.7z" stroke="#05f"/><path d="M150.3 297.4l1.6-1.8-1.2-5.9-1.5 2.4z" stroke="#03f"/><path d="M148.8 299.4l1.5-2-1.1-5.3-1.6 2.9z" stroke="#01f"/><path d="M147.2 301.5l1.6-2.1-1.2-4.4-1.5 2.9z" stroke="#00d"/><path d="M145.7 303.2l1.5-1.7-1.1-3.6-1.6 2.8z" stroke="#00b"/><path d="M144.1 304.6l1.6-1.4-1.2-2.5-1.5 2.2z" stroke="#009"/><path d="M142.6 305.2l1.5-.6-1.1-1.7-1.6 1.6zM141 305.2l1.6 0-1.2-.7-1.5 .6zM139.5 304.4l1.5 .8-1.1-.1-1.6-.2z" stroke="#008"/><path d="M137.9 303.1l1.6 1.3-1.2 .5-1.5-1z" stroke="#00a"/><path d="M136.4 301.3l1.5 1.8-1.1 .8-1.6-1.7z" stroke="#00c"/><path d="M134.9 299.3l1.5 2-1.2 .9-1.5-2z" stroke="#00f"/><path d="M133.3 297.4l1.6 1.9-1.2 .9-1.6-2.1z" stroke="#02f"/><path d="M131.8 295.8l1.5 1.6-1.2 .7-1.5-1.9z" stroke="#05f"/><path d="M130.2 294.7l1.6 1.1-1.2 .4-1.6-1.4z" stroke="#07f"/><path d="M128.7 294.4l1.5 .3-1.2 .1-1.5-.7zM127.1 294.7l1.6-.3-1.2-.3-1.6 0zM125.6 295.7l1.5-1-1.2-.6-1.5 .8z" stroke="#09f"/><path d="M124 297.4l1.6-1.7-1.2-.8-1.6 1.4zM185.6 281.2l1.5 1-1.2-1.2-1.5-.8z" stroke="#08f"/><path d="M184 280.8l1.6 .4-1.2-1-1.6-.2zM182.5 280.9l1.5-.1-1.2-.8-1.5 .5zM180.9 281.7l1.6-.8-1.2-.4-1.6 1.2z" stroke="#09f"/><path d="M179.4 283.2l1.5-1.5-1.2 0-1.5 1.8z" stroke="#08f"/><path d="M177.8 285.2l1.6-2-1.2 .3-1.6 2.5z" stroke="#06f"/><path d="M176.3 287.7l1.5-2.5-1.2 .8-1.5 2.7z" stroke="#04f"/><path d="M174.7 290.4l1.6-2.7-1.2 1-1.5 2.8z" stroke="#01f"/><path d="M173.2 293l1.5-2.6-1.1 1.1-1.6 2.6z" stroke="#00e"/><path d="M171.6 295.4l1.6-2.4-1.2 1.1-1.5 2.2z" stroke="#00b"/><path d="M170.1 297.4l1.5-2-1.1 .9-1.6 1.6z" stroke="#009"/><path d="M168.5 298.8l1.6-1.4-1.2 .5-1.5 .8zM167 299.6l1.5-.8-1.1-.1-1.6 .2zM165.4 299.9l1.6-.3-1.2-.7-1.5-.5z" stroke="#008"/><path d="M163.9 299.8l1.5 .1-1.1-1.5-1.6-1z" stroke="#009"/><path d="M162.3 299.4l1.6 .4-1.2-2.4-1.5-1.3z" stroke="#00a"/><path d="M160.8 298.9l1.5 .5-1.1-3.3-1.6-1.2z" stroke="#00c"/><path d="M159.2 298.5l1.6 .4-1.2-4-1.5-.9z" stroke="#00d"/><path d="M157.7 298.3l1.5 .2-1.1-4.5-1.6-.6z" stroke="#00e"/><path d="M156.1 298.5l1.6-.2-1.2-4.9-1.5 .1zM154.6 299.1l1.5-.6-1.1-5-1.6 .8z" stroke="#00f"/><path d="M153.1 300.1l1.5-1-1.2-4.8-1.5 1.3z" stroke="#00e"/><path d="M151.5 301.3l1.6-1.2-1.2-4.5-1.6 1.8z" stroke="#00d"/><path d="M150 302.6l1.5-1.3-1.2-3.9-1.5 2z" stroke="#00c"/><path d="M148.4 303.9l1.6-1.3-1.2-3.2-1.6 2.1z" stroke="#00a"/><path d="M146.9 304.8l1.5-.9-1.2-2.4-1.5 1.7z" stroke="#009"/><path d="M145.3 305.4l1.6-.6-1.2-1.6-1.6 1.4zM143.8 305.3l1.5 .1-1.2-.8-1.5 .6zM142.2 304.7l1.6 .6-1.2-.1-1.6 0z" stroke="#008"/><path d="M140.7 303.6l1.5 1.1-1.2 .5-1.5-.8z" stroke="#009"/><path d="M139.1 302l1.6 1.6-1.2 .8-1.6-1.3z" stroke="#00b"/><path d="M137.6 300.2l1.5 1.8-1.2 1.1-1.5-1.8z" stroke="#00e"/><path d="M136 298.3l1.6 1.9-1.2 1.1-1.5-2z" stroke="#01f"/><path d="M134.5 296.7l1.5 1.6-1.1 1-1.6-1.9z" stroke="#04f"/><path d="M132.9 295.4l1.6 1.3-1.2 .7-1.5-1.6z" stroke="#06f"/><path d="M131.4 294.8l1.5 .6-1.1 .4-1.6-1.1z" stroke="#08f"/><path d="M129.8 294.8l1.6 0-1.2-.1-1.5-.3zM128.3 295.4l1.5-.6-1.1-.4-1.6 .3zM126.7 296.7l1.6-1.3-1.2-.7-1.5 1z" stroke="#09f"/><path d="M125.2 298.5l1.5-1.8-1.1-1-1.6 1.7z" stroke="#08f"/><path d="M186.7 282.4l1.6 1.1-1.2-1.3-1.5-1z" stroke="#07f"/><path d="M185.2 281.7l1.5 .7-1.1-1.2-1.6-.4z" stroke="#08f"/><path d="M183.6 281.5l1.6 .2-1.2-.9-1.5 .1zM182.1 281.9l1.5-.4-1.1-.6-1.6 .8zM180.5 283l1.6-1.1-1.2-.2-1.5 1.5z" stroke="#09f"/><path d="M179 284.6l1.5-1.6-1.1 .2-1.6 2z" stroke="#07f"/><path d="M177.4 286.7l1.6-2.1-1.2 .6-1.5 2.5z" stroke="#05f"/><path d="M175.9 289.2l1.5-2.5-1.1 1-1.6 2.7z" stroke="#03f"/><path d="M174.3 291.7l1.6-2.5-1.2 1.2-1.5 2.6z" stroke="#01f"/><path d="M172.8 294.1l1.5-2.4-1.1 1.3-1.6 2.4z" stroke="#00d"/><path d="M171.3 296.3l1.5-2.2-1.2 1.3-1.5 2z" stroke="#00b"/><path d="M169.7 298.2l1.6-1.9-1.2 1.1-1.6 1.4z" stroke="#009"/><path d="M168.2 299.5l1.5-1.3-1.2 .6-1.5 .8zM166.6 300.5l1.6-1-1.2 .1-1.6 .3zM165.1 301l1.5-.5-1.2-.6-1.5-.1zM163.5 301.2l1.6-.2-1.2-1.2-1.6-.4z" stroke="#008"/><path d="M162 301.3l1.5-.1-1.2-1.8-1.5-.5z" stroke="#009"/><path d="M160.4 301.4l1.6-.1-1.2-2.4-1.6-.4zM158.9 301.5l1.5-.1-1.2-2.9-1.5-.2zM157.3 301.9l1.6-.4-1.2-3.2-1.6 .2zM155.8 302.4l1.5-.5-1.2-3.4-1.5 .6zM154.2 303l1.6-.6-1.2-3.3-1.5 1zM152.7 303.8l1.5-.8-1.1-2.9-1.6 1.2z" stroke="#00a"/><path d="M151.1 304.5l1.6-.7-1.2-2.5-1.5 1.3z" stroke="#009"/><path d="M149.6 305.1l1.5-.6-1.1-1.9-1.6 1.3zM148 305.4l1.6-.3-1.2-1.2-1.5 .9zM146.5 305.2l1.5 .2-1.1-.6-1.6 .6zM144.9 304.7l1.6 .5-1.2 .2-1.5-.1z" stroke="#008"/><path d="M143.4 303.7l1.5 1-1.1 .6-1.6-.6z" stroke="#009"/><path d="M141.8 302.3l1.6 1.4-1.2 1-1.5-1.1z" stroke="#00b"/><path d="M140.3 300.7l1.5 1.6-1.1 1.3-1.6-1.6z" stroke="#00d"/><path d="M138.7 298.9l1.6 1.8-1.2 1.3-1.5-1.8z" stroke="#01f"/><path d="M137.2 297.3l1.5 1.6-1.1 1.3-1.6-1.9z" stroke="#03f"/><path d="M135.6 296l1.6 1.3-1.2 1-1.5-1.6z" stroke="#05f"/><path d="M134.1 295.2l1.5 .8-1.1 .7-1.6-1.3z" stroke="#07f"/><path d="M132.6 295l1.5 .2-1.2 .2-1.5-.6zM131 295.4l1.6-.4-1.2-.2-1.6 0zM129.5 296.4l1.5-1-1.2-.6-1.5 .6z" stroke="#09f"/><path d="M127.9 297.9l1.6-1.5-1.2-1-1.6 1.3z" stroke="#08f"/><path d="M126.4 299.8l1.5-1.9-1.2-1.2-1.5 1.8z" stroke="#07f"/><path d="M187.9 283.7l1.6 1.1-1.2-1.3-1.6-1.1z" stroke="#06f"/><path d="M186.4 282.8l1.5 .9-1.2-1.3-1.5-.7z" stroke="#08f"/><path d="M184.8 282.3l1.6 .5-1.2-1.1-1.6-.2zM183.3 282.4l1.5-.1-1.2-.8-1.5 .4zM181.7 283l1.6-.6-1.2-.5-1.6 1.1z" stroke="#09f"/><path d="M180.2 284.2l1.5-1.2-1.2 0-1.5 1.6z" stroke="#08f"/><path d="M178.6 285.9l1.6-1.7-1.2 .4-1.6 2.1z" stroke="#07f"/><path d="M177.1 288l1.5-2.1-1.2 .8-1.5 2.5z" stroke="#05f"/><path d="M175.5 290.3l1.6-2.3-1.2 1.2-1.6 2.5z" stroke="#03f"/><path d="M174 292.6l1.5-2.3-1.2 1.4-1.5 2.4z" stroke="#00f"/><path d="M172.4 294.9l1.6-2.3-1.2 1.5-1.5 2.2z" stroke="#00d"/><path d="M170.9 296.9l1.5-2-1.1 1.4-1.6 1.9z" stroke="#00b"/><path d="M169.3 298.6l1.6-1.7-1.2 1.3-1.5 1.3z" stroke="#00a"/><path d="M167.8 300l1.5-1.4-1.1 .9-1.6 1z" stroke="#009"/><path d="M166.2 301l1.6-1-1.2 .5-1.5 .5zM164.7 301.8l1.5-.8-1.1 0-1.6 .2zM163.1 302.3l1.6-.5-1.2-.6-1.5 .1zM161.6 302.8l1.5-.5-1.1-1-1.6 .1zM160 303.1l1.6-.3-1.2-1.4-1.5 .1zM158.5 303.5l1.5-.4-1.1-1.6-1.6 .4zM156.9 303.9l1.6-.4-1.2-1.6-1.5 .5zM155.4 304.4l1.5-.5-1.1-1.5-1.6 .6zM153.8 304.8l1.6-.4-1.2-1.4-1.5 .8zM152.3 305l1.5-.2-1.1-1-1.6 .7zM150.8 305.1l1.5-.1-1.2-.5-1.5 .6zM149.2 304.9l1.6 .2-1.2 0-1.6 .3z" stroke="#008"/><path d="M147.7 304.3l1.5 .6-1.2 .5-1.5-.2z" stroke="#009"/><path d="M146.1 303.4l1.6 .9-1.2 .9-1.6-.5z" stroke="#00a"/><path d="M144.6 302.2l1.5 1.2-1.2 1.3-1.5-1z" stroke="#00b"/><path d="M143 300.8l1.6 1.4-1.2 1.5-1.6-1.4z" stroke="#00d"/><path d="M141.5 299.2l1.5 1.6-1.2 1.5-1.5-1.6z" stroke="#00f"/><path d="M139.9 297.8l1.6 1.4-1.2 1.5-1.6-1.8z" stroke="#03f"/><path d="M138.4 296.5l1.5 1.3-1.2 1.1-1.5-1.6z" stroke="#05f"/><path d="M136.8 295.6l1.6 .9-1.2 .8-1.6-1.3z" stroke="#07f"/><path d="M135.3 295.2l1.5 .4-1.2 .4-1.5-.8z" stroke="#08f"/><path d="M133.7 295.4l1.6-.2-1.2 0-1.5-.2zM132.2 296.2l1.5-.8-1.1-.4-1.6 .4zM130.6 297.5l1.6-1.3-1.2-.8-1.5 1z" stroke="#09f"/><path d="M129.1 299.2l1.5-1.7-1.1-1.1-1.6 1.5z" stroke="#08f"/><path d="M127.5 301.1l1.6-1.9-1.2-1.3-1.5 1.9z" stroke="#06f"/><path d="M189.1 285.1l1.5 1.2-1.1-1.5-1.6-1.1z" stroke="#05f"/><path d="M187.5 284.1l1.6 1-1.2-1.4-1.5-.9z" stroke="#07f"/><path d="M186 283.4l1.5 .7-1.1-1.3-1.6-.5z" stroke="#08f"/><path d="M184.4 283.1l1.6 .3-1.2-1.1-1.5 .1zM182.9 283.3l1.5-.2-1.1-.7-1.6 .6zM181.3 284l1.6-.7-1.2-.3-1.5 1.2z" stroke="#09f"/><path d="M179.8 285.3l1.5-1.3-1.1 .2-1.6 1.7z" stroke="#08f"/><path d="M178.2 286.9l1.6-1.6-1.2 .6-1.5 2.1z" stroke="#07f"/><path d="M176.7 288.9l1.5-2-1.1 1.1-1.6 2.3z" stroke="#05f"/><path d="M175.1 291l1.6-2.1-1.2 1.4-1.5 2.3z" stroke="#03f"/><path d="M173.6 293.2l1.5-2.2-1.1 1.6-1.6 2.3z" stroke="#01f"/><path d="M172 295.2l1.6-2-1.2 1.7-1.5 2z" stroke="#00e"/><path d="M170.5 297.1l1.5-1.9-1.1 1.7-1.6 1.7z" stroke="#00c"/><path d="M169 298.7l1.5-1.6-1.2 1.5-1.5 1.4z" stroke="#00a"/><path d="M167.4 300l1.6-1.3-1.2 1.3-1.6 1zM165.9 301.1l1.5-1.1-1.2 1-1.5 .8z" stroke="#009"/><path d="M164.3 302l1.6-.9-1.2 .7-1.6 .5zM162.8 302.7l1.5-.7-1.2 .3-1.5 .5zM161.2 303.2l1.6-.5-1.2 .1-1.6 .3zM159.7 303.7l1.5-.5-1.2-.1-1.5 .4zM158.1 304l1.6-.3-1.2-.2-1.6 .4zM156.6 304.3l1.5-.3-1.2-.1-1.5 .5zM155 304.4l1.6-.1-1.2 .1-1.6 .4zM153.5 304.4l1.5 0-1.2 .4-1.5 .2z" stroke="#008"/><path d="M151.9 304.1l1.6 .3-1.2 .6-1.5 .1zM150.4 303.6l1.5 .5-1.1 1-1.6-.2z" stroke="#009"/><path d="M148.8 302.8l1.6 .8-1.2 1.3-1.5-.6z" stroke="#00a"/><path d="M147.3 301.8l1.5 1-1.1 1.5-1.6-.9z" stroke="#00c"/><path d="M145.7 300.5l1.6 1.3-1.2 1.6-1.5-1.2z" stroke="#00e"/><path d="M144.2 299.2l1.5 1.3-1.1 1.7-1.6-1.4z" stroke="#01f"/><path d="M142.6 297.9l1.6 1.3-1.2 1.6-1.5-1.6z" stroke="#03f"/><path d="M141.1 296.7l1.5 1.2-1.1 1.3-1.6-1.4z" stroke="#05f"/><path d="M139.5 295.9l1.6 .8-1.2 1.1-1.5-1.3z" stroke="#07f"/><path d="M138 295.5l1.5 .4-1.1 .6-1.6-.9z" stroke="#08f"/><path d="M136.4 295.5l1.6 0-1.2 .1-1.5-.4zM134.9 296.1l1.5-.6-1.1-.3-1.6 .2zM133.3 297.2l1.6-1.1-1.2-.7-1.5 .8z" stroke="#09f"/><path d="M131.8 298.8l1.5-1.6-1.1-1-1.6 1.3z" stroke="#08f"/><path d="M130.3 300.6l1.5-1.8-1.2-1.3-1.5 1.7z" stroke="#07f"/><path d="M128.7 302.6l1.6-2-1.2-1.4-1.6 1.9z" stroke="#05f"/><path d="M190.2 286.6l1.6 1.1-1.2-1.4-1.5-1.2z" stroke="#04f"/><path d="M188.7 285.6l1.5 1-1.1-1.5-1.6-1z" stroke="#06f"/><path d="M187.2 284.7l1.5 .9-1.2-1.5-1.5-.7z" stroke="#07f"/><path d="M185.6 284.1l1.6 .6-1.2-1.3-1.6-.3zM184.1 283.9l1.5 .2-1.2-1-1.5 .2zM182.5 284.2l1.6-.3-1.2-.6-1.6 .7zM181 285l1.5-.8-1.2-.2-1.5 1.3z" stroke="#09f"/><path d="M179.4 286.2l1.6-1.2-1.2 .3-1.6 1.6z" stroke="#08f"/><path d="M177.9 287.8l1.5-1.6-1.2 .7-1.5 2z" stroke="#07f"/><path d="M176.3 289.5l1.6-1.7-1.2 1.1-1.6 2.1z" stroke="#05f"/><path d="M174.8 291.4l1.5-1.9-1.2 1.5-1.5 2.2z" stroke="#03f"/><path d="M173.2 293.4l1.6-2-1.2 1.8-1.6 2z" stroke="#01f"/><path d="M171.7 295.2l1.5-1.8-1.2 1.8-1.5 1.9z" stroke="#00f"/><path d="M170.1 296.9l1.6-1.7-1.2 1.9-1.5 1.6z" stroke="#00d"/><path d="M168.6 298.3l1.5-1.4-1.1 1.8-1.6 1.3z" stroke="#00c"/><path d="M167 299.6l1.6-1.3-1.2 1.7-1.5 1.1z" stroke="#00b"/><path d="M165.5 300.6l1.5-1-1.1 1.5-1.6 .9z" stroke="#00a"/><path d="M163.9 301.5l1.6-.9-1.2 1.4-1.5 .7zM162.4 302.1l1.5-.6-1.1 1.2-1.6 .5zM160.8 302.6l1.6-.5-1.2 1.1-1.5 .5zM159.3 302.9l1.5-.3-1.1 1.1-1.6 .3zM157.7 303.1l1.6-.2-1.2 1.1-1.5 .3zM156.2 303.1l1.5 0-1.1 1.2-1.6 .1z" stroke="#009"/><path d="M154.6 302.9l1.6 .2-1.2 1.3-1.5 0z" stroke="#00a"/><path d="M153.1 302.4l1.5 .5-1.1 1.5-1.6-.3z" stroke="#00b"/><path d="M151.5 301.8l1.6 .6-1.2 1.7-1.5-.5z" stroke="#00c"/><path d="M150 300.9l1.5 .9-1.1 1.8-1.6-.8z" stroke="#00d"/><path d="M148.5 299.9l1.5 1-1.2 1.9-1.5-1z" stroke="#00f"/><path d="M146.9 298.8l1.6 1.1-1.2 1.9-1.6-1.3z" stroke="#01f"/><path d="M145.4 297.7l1.5 1.1-1.2 1.7-1.5-1.3z" stroke="#03f"/><path d="M143.8 296.7l1.6 1-1.2 1.5-1.6-1.3z" stroke="#05f"/><path d="M142.3 296l1.5 .7-1.2 1.2-1.5-1.2z" stroke="#07f"/><path d="M140.7 295.6l1.6 .4-1.2 .7-1.6-.8z" stroke="#08f"/><path d="M139.2 295.7l1.5-.1-1.2 .3-1.5-.4zM137.6 296.2l1.6-.5-1.2-.2-1.6 0zM136.1 297.2l1.5-1-1.2-.7-1.5 .6zM134.5 298.5l1.6-1.3-1.2-1.1-1.6 1.1z" stroke="#09f"/><path d="M133 300.3l1.5-1.8-1.2-1.3-1.5 1.6z" stroke="#07f"/><path d="M131.4 302.2l1.6-1.9-1.2-1.5-1.5 1.8z" stroke="#06f"/><path d="M129.9 304.1l1.5-1.9-1.1-1.6-1.6 2z" stroke="#04f"/><path d="M191.4 288.2l1.6 1-1.2-1.5-1.6-1.1z" stroke="#03f"/><path d="M189.9 287.2l1.5 1-1.2-1.6-1.5-1z" stroke="#05f"/><path d="M188.3 286.2l1.6 1-1.2-1.6-1.5-.9z" stroke="#06f"/><path d="M186.8 285.4l1.5 .8-1.1-1.5-1.6-.6z" stroke="#08f"/><path d="M185.2 284.9l1.6 .5-1.2-1.3-1.5-.2zM183.7 284.8l1.5 .1-1.1-1-1.6 .3zM182.1 285.2l1.6-.4-1.2-.6-1.5 .8zM180.6 285.9l1.5-.7-1.1-.2-1.6 1.2z" stroke="#09f"/><path d="M179 287l1.6-1.1-1.2 .3-1.5 1.6z" stroke="#08f"/><path d="M177.5 288.4l1.5-1.4-1.1 .8-1.6 1.7z" stroke="#07f"/><path d="M175.9 289.9l1.6-1.5-1.2 1.1-1.5 1.9z" stroke="#05f"/><path d="M174.4 291.6l1.5-1.7-1.1 1.5-1.6 2z" stroke="#04f"/><path d="M172.8 293.2l1.6-1.6-1.2 1.8-1.5 1.8z" stroke="#02f"/><path d="M171.3 294.8l1.5-1.6-1.1 2-1.6 1.7z" stroke="#01f"/><path d="M169.7 296.2l1.6-1.4-1.2 2.1-1.5 1.4z" stroke="#00f"/><path d="M168.2 297.5l1.5-1.3-1.1 2.1-1.6 1.3zM166.7 298.6l1.5-1.1-1.2 2.1-1.5 1z" stroke="#00d"/><path d="M165.1 299.5l1.6-.9-1.2 2-1.6 .9z" stroke="#00c"/><path d="M163.6 300.2l1.5-.7-1.2 2-1.5 .6zM162 300.7l1.6-.5-1.2 1.9-1.6 .5zM160.5 301l1.5-.3-1.2 1.9-1.5 .3zM158.9 301.1l1.6-.1-1.2 1.9-1.6 .2z" stroke="#00b"/><path d="M157.4 301.1l1.5 0-1.2 2-1.5 0z" stroke="#00c"/><path d="M155.8 300.8l1.6 .3-1.2 2-1.6-.2zM154.3 300.3l1.5 .5-1.2 2.1-1.5-.5z" stroke="#00d"/><path d="M152.7 299.7l1.6 .6-1.2 2.1-1.6-.6z" stroke="#00f"/><path d="M151.2 298.9l1.5 .8-1.2 2.1-1.5-.9z" stroke="#01f"/><path d="M149.6 298.1l1.6 .8-1.2 2-1.5-1z" stroke="#02f"/><path d="M148.1 297.3l1.5 .8-1.1 1.8-1.6-1.1z" stroke="#04f"/><path d="M146.5 296.5l1.6 .8-1.2 1.5-1.5-1.1z" stroke="#05f"/><path d="M145 296l1.5 .5-1.1 1.2-1.6-1z" stroke="#07f"/><path d="M143.4 295.7l1.6 .3-1.2 .7-1.5-.7z" stroke="#08f"/><path d="M141.9 295.8l1.5-.1-1.1 .3-1.6-.4zM140.3 296.3l1.6-.5-1.2-.2-1.5 .1zM138.8 297.2l1.5-.9-1.1-.6-1.6 .5zM137.2 298.5l1.6-1.3-1.2-1-1.5 1z" stroke="#09f"/><path d="M135.7 300.1l1.5-1.6-1.1-1.3-1.6 1.3z" stroke="#08f"/><path d="M134.1 301.9l1.6-1.8-1.2-1.6-1.5 1.8z" stroke="#06f"/><path d="M132.6 303.7l1.5-1.8-1.1-1.6-1.6 1.9z" stroke="#05f"/><path d="M131 305.5l1.6-1.8-1.2-1.5-1.5 1.9z" stroke="#03f"/><path d="M192.6 289.8l1.5 .8-1.1-1.4-1.6-1z" stroke="#02f"/><path d="M191 288.9l1.6 .9-1.2-1.6-1.5-1z" stroke="#03f"/><path d="M189.5 287.9l1.5 1-1.1-1.7-1.6-1z" stroke="#05f"/><path d="M187.9 287l1.6 .9-1.2-1.7-1.5-.8z" stroke="#06f"/><path d="M186.4 286.3l1.5 .7-1.1-1.6-1.6-.5z" stroke="#08f"/><path d="M184.9 285.9l1.5 .4-1.2-1.4-1.5-.1zM183.3 285.8l1.6 .1-1.2-1.1-1.6 .4zM181.8 286.1l1.5-.3-1.2-.6-1.5 .7zM180.2 286.7l1.6-.6-1.2-.2-1.6 1.1z" stroke="#09f"/><path d="M178.7 287.6l1.5-.9-1.2 .3-1.5 1.4z" stroke="#08f"/><path d="M177.1 288.8l1.6-1.2-1.2 .8-1.6 1.5z" stroke="#07f"/><path d="M175.6 290.1l1.5-1.3-1.2 1.1-1.5 1.7z" stroke="#06f"/><path d="M174 291.5l1.6-1.4-1.2 1.5-1.6 1.6z" stroke="#05f"/><path d="M172.5 292.8l1.5-1.3-1.2 1.7-1.5 1.6z" stroke="#04f"/><path d="M170.9 294.1l1.6-1.3-1.2 2-1.6 1.4z" stroke="#03f"/><path d="M169.4 295.3l1.5-1.2-1.2 2.1-1.5 1.3z" stroke="#02f"/><path d="M167.8 296.4l1.6-1.1-1.2 2.2-1.5 1.1z" stroke="#01f"/><path d="M166.3 297.2l1.5-.8-1.1 2.2-1.6 .9zM164.7 297.9l1.6-.7-1.2 2.3-1.5 .7z" stroke="#00f"/><path d="M163.2 298.4l1.5-.5-1.1 2.3-1.6 .5zM161.6 298.7l1.6-.3-1.2 2.3-1.5 .3z" stroke="#00e"/><path d="M160.1 298.9l1.5-.2-1.1 2.3-1.6 .1zM158.5 298.8l1.6 .1-1.2 2.2-1.5 0z" stroke="#00f"/><path d="M157 298.6l1.5 .2-1.1 2.3-1.6-.3z" stroke="#01f"/><path d="M155.4 298.2l1.6 .4-1.2 2.2-1.5-.5z" stroke="#02f"/><path d="M153.9 297.7l1.5 .5-1.1 2.1-1.6-.6z" stroke="#03f"/><path d="M152.3 297.2l1.6 .5-1.2 2-1.5-.8z" stroke="#04f"/><path d="M150.8 296.6l1.5 .6-1.1 1.7-1.6-.8z" stroke="#05f"/><path d="M149.2 296.1l1.6 .5-1.2 1.5-1.5-.8z" stroke="#06f"/><path d="M147.7 295.8l1.5 .3-1.1 1.2-1.6-.8z" stroke="#07f"/><path d="M146.2 295.7l1.5 .1-1.2 .7-1.5-.5z" stroke="#08f"/><path d="M144.6 295.9l1.6-.2-1.2 .3-1.6-.3zM143.1 296.4l1.5-.5-1.2-.2-1.5 .1zM141.5 297.3l1.6-.9-1.2-.6-1.6 .5zM140 298.5l1.5-1.2-1.2-1-1.5 .9z" stroke="#09f"/><path d="M138.4 300l1.6-1.5-1.2-1.3-1.6 1.3z" stroke="#08f"/><path d="M136.9 301.7l1.5-1.7-1.2-1.5-1.5 1.6z" stroke="#06f"/><path d="M135.3 303.5l1.6-1.8-1.2-1.6-1.6 1.8z" stroke="#05f"/><path d="M133.8 305.3l1.5-1.8-1.2-1.6-1.5 1.8z" stroke="#03f"/><path d="M132.2 306.9l1.6-1.6-1.2-1.6-1.6 1.8z" stroke="#02f"/><path d="M193.8 291.3l1.5 .5-1.2-1.2-1.5-.8z" stroke="#01f"/><path d="M192.2 290.5l1.6 .8-1.2-1.5-1.6-.9z" stroke="#02f"/><path d="M190.7 289.6l1.5 .9-1.2-1.6-1.5-1z" stroke="#04f"/><path d="M189.1 288.7l1.6 .9-1.2-1.7-1.6-.9z" stroke="#05f"/><path d="M187.6 287.9l1.5 .8-1.2-1.7-1.5-.7z" stroke="#07f"/><path d="M186 287.3l1.6 .6-1.2-1.6-1.5-.4z" stroke="#08f"/><path d="M184.5 286.9l1.5 .4-1.1-1.4-1.6-.1zM182.9 286.8l1.6 .1-1.2-1.1-1.5 .3zM181.4 287l1.5-.2-1.1-.7-1.6 .6zM179.8 287.5l1.6-.5-1.2-.3-1.5 .9zM178.3 288.2l1.5-.7-1.1 .1-1.6 1.2z" stroke="#09f"/><path d="M176.7 289.2l1.6-1-1.2 .6-1.5 1.3z" stroke="#08f"/><path d="M175.2 290.2l1.5-1-1.1 .9-1.6 1.4z" stroke="#07f"/><path d="M173.6 291.3l1.6-1.1-1.2 1.3-1.5 1.3z" stroke="#06f"/><path d="M172.1 292.3l1.5-1-1.1 1.5-1.6 1.3z" stroke="#05f"/><path d="M170.5 293.3l1.6-1-1.2 1.8-1.5 1.2zM169 294.3l1.5-1-1.1 2-1.6 1.1z" stroke="#04f"/><path d="M167.4 295.1l1.6-.8-1.2 2.1-1.5 .8zM165.9 295.7l1.5-.6-1.1 2.1-1.6 .7zM164.4 296.2l1.5-.5-1.2 2.2-1.5 .5zM162.8 296.5l1.6-.3-1.2 2.2-1.6 .3zM161.3 296.7l1.5-.2-1.2 2.2-1.5 .2zM159.7 296.7l1.6 0-1.2 2.2-1.6-.1z" stroke="#03f"/><path d="M158.2 296.6l1.5 .1-1.2 2.1-1.5-.2zM156.6 296.4l1.6 .2-1.2 2-1.6-.4z" stroke="#04f"/><path d="M155.1 296.2l1.5 .2-1.2 1.8-1.5-.5z" stroke="#05f"/><path d="M153.5 295.9l1.6 .3-1.2 1.5-1.6-.5z" stroke="#06f"/><path d="M152 295.7l1.5 .2-1.2 1.3-1.5-.6z" stroke="#07f"/><path d="M150.4 295.6l1.6 .1-1.2 .9-1.6-.5z" stroke="#08f"/><path d="M148.9 295.7l1.5-.1-1.2 .5-1.5-.3zM147.3 296l1.6-.3-1.2 .1-1.5-.1zM145.8 296.6l1.5-.6-1.1-.3-1.6 .2zM144.2 297.5l1.6-.9-1.2-.7-1.5 .5zM142.7 298.7l1.5-1.2-1.1-1.1-1.6 .9z" stroke="#09f"/><path d="M141.1 300.1l1.6-1.4-1.2-1.4-1.5 1.2z" stroke="#08f"/><path d="M139.6 301.8l1.5-1.7-1.1-1.6-1.6 1.5z" stroke="#07f"/><path d="M138 303.5l1.6-1.7-1.2-1.8-1.5 1.7z" stroke="#05f"/><path d="M136.5 305.2l1.5-1.7-1.1-1.8-1.6 1.8z" stroke="#04f"/><path d="M134.9 306.8l1.6-1.6-1.2-1.7-1.5 1.8z" stroke="#02f"/><path d="M133.4 308.2l1.5-1.4-1.1-1.5-1.6 1.6z" stroke="#01f"/><path d="M194.9 292.7l1.6 .2-1.2-1.1-1.5-.5z" stroke="#00f"/><path d="M193.4 292.1l1.5 .6-1.1-1.4-1.6-.8z" stroke="#01f"/><path d="M191.8 291.4l1.6 .7-1.2-1.6-1.5-.9z" stroke="#02f"/><path d="M190.3 290.6l1.5 .8-1.1-1.8-1.6-.9z" stroke="#04f"/><path d="M188.7 289.7l1.6 .9-1.2-1.9-1.5-.8z" stroke="#05f"/><path d="M187.2 289l1.5 .7-1.1-1.8-1.6-.6z" stroke="#06f"/><path d="M185.6 288.4l1.6 .6-1.2-1.7-1.5-.4z" stroke="#08f"/><path d="M184.1 288l1.5 .4-1.1-1.5-1.6-.1zM182.6 287.9l1.5 .1-1.2-1.2-1.5 .2zM181 288l1.6-.1-1.2-.9-1.6 .5zM179.5 288.4l1.5-.4-1.2-.5-1.5 .7zM177.9 288.9l1.6-.5-1.2-.2-1.6 1zM176.4 289.6l1.5-.7-1.2 .3-1.5 1z" stroke="#09f"/><path d="M174.8 290.3l1.6-.7-1.2 .6-1.6 1.1zM173.3 291.1l1.5-.8-1.2 1-1.5 1z" stroke="#08f"/><path d="M171.7 291.9l1.6-.8-1.2 1.2-1.6 1z" stroke="#07f"/><path d="M170.2 292.7l1.5-.8-1.2 1.4-1.5 1zM168.6 293.4l1.6-.7-1.2 1.6-1.6 .8zM167.1 293.9l1.5-.5-1.2 1.7-1.5 .6z" stroke="#06f"/><path d="M165.5 294.4l1.6-.5-1.2 1.8-1.5 .5zM164 294.8l1.5-.4-1.1 1.8-1.6 .3z" stroke="#05f"/><path d="M162.4 295l1.6-.2-1.2 1.7-1.5 .2zM160.9 295.1l1.5-.1-1.1 1.7-1.6 0zM159.3 295.2l1.6-.1-1.2 1.6-1.5-.1z" stroke="#06f"/><path d="M157.8 295.2l1.5 0-1.1 1.4-1.6-.2z" stroke="#07f"/><path d="M156.2 295.2l1.6 0-1.2 1.2-1.5-.2zM154.7 295.3l1.5-.1-1.1 1-1.6-.3z" stroke="#08f"/><path d="M153.1 295.4l1.6-.1-1.2 .6-1.5-.2zM151.6 295.7l1.5-.3-1.1 .3-1.6-.1zM150 296.2l1.6-.5-1.2-.1-1.5 .1zM148.5 296.9l1.5-.7-1.1-.5-1.6 .3zM146.9 297.8l1.6-.9-1.2-.9-1.5 .6zM145.4 299l1.5-1.2-1.1-1.2-1.6 .9z" stroke="#09f"/><path d="M143.9 300.4l1.5-1.4-1.2-1.5-1.5 1.2z" stroke="#08f"/><path d="M142.3 302l1.6-1.6-1.2-1.7-1.6 1.4z" stroke="#06f"/><path d="M140.8 303.6l1.5-1.6-1.2-1.9-1.5 1.7z" stroke="#05f"/><path d="M139.2 305.3l1.6-1.7-1.2-1.8-1.6 1.7z" stroke="#04f"/><path d="M137.7 306.8l1.5-1.5-1.2-1.8-1.5 1.7z" stroke="#02f"/><path d="M136.1 308.2l1.6-1.4-1.2-1.6-1.6 1.6z" stroke="#01f"/><path d="M134.6 309.2l1.5-1-1.2-1.4-1.5 1.4z" stroke="#00f"/><path d="M196.1 293.8l1.6-.1-1.2-.8-1.6-.2z" stroke="#00e"/><path d="M194.6 293.5l1.5 .3-1.2-1.1-1.5-.6z" stroke="#00f"/><path d="M193 293.1l1.6 .4-1.2-1.4-1.6-.7z" stroke="#01f"/><path d="M191.5 292.4l1.5 .7-1.2-1.7-1.5-.8z" stroke="#02f"/><path d="M189.9 291.7l1.6 .7-1.2-1.8-1.6-.9z" stroke="#04f"/><path d="M188.4 290.9l1.5 .8-1.2-2-1.5-.7z" stroke="#05f"/><path d="M186.8 290.2l1.6 .7-1.2-1.9-1.6-.6z" stroke="#06f"/><path d="M185.3 289.7l1.5 .5-1.2-1.8-1.5-.4z" stroke="#07f"/><path d="M183.7 289.3l1.6 .4-1.2-1.7-1.5-.1z" stroke="#08f"/><path d="M182.2 289.2l1.5 .1-1.1-1.4-1.6 .1zM180.6 289.2l1.6 0-1.2-1.2-1.5 .4zM179.1 289.4l1.5-.2-1.1-.8-1.6 .5zM177.5 289.7l1.6-.3-1.2-.5-1.5 .7zM176 290.2l1.5-.5-1.1-.1-1.6 .7zM174.4 290.7l1.6-.5-1.2 .1-1.5 .8zM172.9 291.3l1.5-.6-1.1 .4-1.6 .8z" stroke="#09f"/><path d="M171.3 291.8l1.6-.5-1.2 .6-1.5 .8zM169.8 292.4l1.5-.6-1.1 .9-1.6 .7zM168.2 292.9l1.6-.5-1.2 1-1.5 .5zM166.7 293.3l1.5-.4-1.1 1-1.6 .5zM165.1 293.7l1.6-.4-1.2 1.1-1.5 .4zM163.6 294l1.5-.3-1.1 1.1-1.6 .2zM162.1 294.3l1.5-.3-1.2 1-1.5 .1zM160.5 294.5l1.6-.2-1.2 .8-1.6 .1z" stroke="#08f"/><path d="M159 294.8l1.5-.3-1.2 .7-1.5 0zM157.4 295.1l1.6-.3-1.2 .4-1.6 0zM155.9 295.4l1.5-.3-1.2 .1-1.5 .1zM154.3 295.9l1.6-.5-1.2-.1-1.6 .1zM152.8 296.5l1.5-.6-1.2-.5-1.5 .3zM151.2 297.3l1.6-.8-1.2-.8-1.6 .5zM149.7 298.3l1.5-1-1.2-1.1-1.5 .7z" stroke="#09f"/><path d="M148.1 299.5l1.6-1.2-1.2-1.4-1.6 .9z" stroke="#08f"/><path d="M146.6 300.8l1.5-1.3-1.2-1.7-1.5 1.2z" stroke="#07f"/><path d="M145 302.3l1.6-1.5-1.2-1.8-1.5 1.4z" stroke="#06f"/><path d="M143.5 303.9l1.5-1.6-1.1-1.9-1.6 1.6z" stroke="#05f"/><path d="M141.9 305.5l1.6-1.6-1.2-1.9-1.5 1.6z" stroke="#04f"/><path d="M140.4 306.9l1.5-1.4-1.1-1.9-1.6 1.7z" stroke="#02f"/><path d="M138.8 308.2l1.6-1.3-1.2-1.6-1.5 1.5z" stroke="#01f"/><path d="M137.3 309.3l1.5-1.1-1.1-1.4-1.6 1.4z" stroke="#00f"/><path d="M135.7 310l1.6-.7-1.2-1.1-1.5 1zM197.3 294.6l1.5-.4-1.1-.5-1.6 .1zM195.7 294.7l1.6-.1-1.2-.8-1.5-.3z" stroke="#00e"/><path d="M194.2 294.5l1.5 .2-1.1-1.2-1.6-.4z" stroke="#00f"/><path d="M192.6 294.1l1.6 .4-1.2-1.4-1.5-.7z" stroke="#01f"/><path d="M191.1 293.5l1.5 .6-1.1-1.7-1.6-.7z" stroke="#02f"/><path d="M189.5 292.9l1.6 .6-1.2-1.8-1.5-.8z" stroke="#03f"/><path d="M188 292.3l1.5 .6-1.1-2-1.6-.7z" stroke="#05f"/><path d="M186.4 291.7l1.6 .6-1.2-2.1-1.5-.5z" stroke="#06f"/><path d="M184.9 291.2l1.5 .5-1.1-2-1.6-.4z" stroke="#07f"/><path d="M183.3 290.8l1.6 .4-1.2-1.9-1.5-.1zM181.8 290.6l1.5 .2-1.1-1.6-1.6 0z" stroke="#08f"/><path d="M180.3 290.5l1.5 .1-1.2-1.4-1.5 .2zM178.7 290.6l1.6-.1-1.2-1.1-1.6 .3zM177.2 290.8l1.5-.2-1.2-.9-1.5 .5zM175.6 291.1l1.6-.3-1.2-.6-1.6 .5zM174.1 291.5l1.5-.4-1.2-.4-1.5 .6zM172.5 291.9l1.6-.4-1.2-.2-1.6 .5zM171 292.3l1.5-.4-1.2-.1-1.5 .6zM169.4 292.7l1.6-.4-1.2 .1-1.6 .5zM167.9 293.1l1.5-.4-1.2 .2-1.5 .4zM166.3 293.5l1.6-.4-1.2 .2-1.6 .4zM164.8 293.9l1.5-.4-1.2 .2-1.5 .3zM163.2 294.3l1.6-.4-1.2 .1-1.5 .3zM161.7 294.7l1.5-.4-1.1 0-1.6 .2zM160.1 295.2l1.6-.5-1.2-.2-1.5 .3zM158.6 295.7l1.5-.5-1.1-.4-1.6 .3zM157 296.3l1.6-.6-1.2-.6-1.5 .3zM155.5 297l1.5-.7-1.1-.9-1.6 .5zM153.9 297.9l1.6-.9-1.2-1.1-1.5 .6z" stroke="#09f"/><path d="M152.4 299l1.5-1.1-1.1-1.4-1.6 .8zM150.8 300.1l1.6-1.1-1.2-1.7-1.5 1z" stroke="#08f"/><path d="M149.3 301.4l1.5-1.3-1.1-1.8-1.6 1.2z" stroke="#07f"/><path d="M147.7 302.9l1.6-1.5-1.2-1.9-1.5 1.3z" stroke="#06f"/><path d="M146.2 304.3l1.5-1.4-1.1-2.1-1.6 1.5z" stroke="#05f"/><path d="M144.6 305.8l1.6-1.5-1.2-2-1.5 1.6z" stroke="#03f"/><path d="M143.1 307.2l1.5-1.4-1.1-1.9-1.6 1.6z" stroke="#02f"/><path d="M141.6 308.4l1.5-1.2-1.2-1.7-1.5 1.4z" stroke="#01f"/><path d="M140 309.4l1.6-1-1.2-1.5-1.6 1.3z" stroke="#00f"/><path d="M138.5 310.1l1.5-.7-1.2-1.2-1.5 1.1zM136.9 310.6l1.6-.5-1.2-.8-1.6 .7zM198.5 295.2l1.5-.7-1.2-.3-1.5 .4zM196.9 295.6l1.6-.4-1.2-.6-1.6 .1zM195.4 295.7l1.5-.1-1.2-.9-1.5-.2z" stroke="#00e"/><path d="M193.8 295.6l1.6 .1-1.2-1.2-1.6-.4z" stroke="#00f"/><path d="M192.3 295.3l1.5 .3-1.2-1.5-1.5-.6z" stroke="#01f"/><path d="M190.7 294.8l1.6 .5-1.2-1.8-1.6-.6z" stroke="#02f"/><path d="M189.2 294.3l1.5 .5-1.2-1.9-1.5-.6z" stroke="#03f"/><path d="M187.6 293.7l1.6 .6-1.2-2-1.6-.6z" stroke="#04f"/><path d="M186.1 293.2l1.5 .5-1.2-2-1.5-.5z" stroke="#05f"/><path d="M184.5 292.8l1.6 .4-1.2-2-1.6-.4z" stroke="#06f"/><path d="M183 292.5l1.5 .3-1.2-2-1.5-.2z" stroke="#07f"/><path d="M181.4 292.2l1.6 .3-1.2-1.9-1.5-.1zM179.9 292.1l1.5 .1-1.1-1.7-1.6 .1z" stroke="#08f"/><path d="M178.3 292.2l1.6-.1-1.2-1.5-1.5 .2zM176.8 292.3l1.5-.1-1.1-1.4-1.6 .3zM175.2 292.5l1.6-.2-1.2-1.2-1.5 .4zM173.7 292.7l1.5-.2-1.1-1-1.6 .4zM172.1 293.1l1.6-.4-1.2-.8-1.5 .4zM170.6 293.4l1.5-.3-1.1-.8-1.6 .4zM169 293.8l1.6-.4-1.2-.7-1.5 .4zM167.5 294.2l1.5-.4-1.1-.7-1.6 .4zM165.9 294.7l1.6-.5-1.2-.7-1.5 .4zM164.4 295.2l1.5-.5-1.1-.8-1.6 .4zM162.8 295.7l1.6-.5-1.2-.9-1.5 .4zM161.3 296.3l1.5-.6-1.1-1-1.6 .5zM159.8 297l1.5-.7-1.2-1.1-1.5 .5zM158.2 297.9l1.6-.9-1.2-1.3-1.6 .6z" stroke="#09f"/><path d="M156.7 298.8l1.5-.9-1.2-1.6-1.5 .7zM155.1 299.8l1.6-1-1.2-1.8-1.6 .9z" stroke="#08f"/><path d="M153.6 301l1.5-1.2-1.2-1.9-1.5 1.1z" stroke="#07f"/><path d="M152 302.2l1.6-1.2-1.2-2-1.6 1.1z" stroke="#06f"/><path d="M150.5 303.5l1.5-1.3-1.2-2.1-1.5 1.3z" stroke="#05f"/><path d="M148.9 304.9l1.6-1.4-1.2-2.1-1.6 1.5z" stroke="#04f"/><path d="M147.4 306.2l1.5-1.3-1.2-2-1.5 1.4z" stroke="#03f"/><path d="M145.8 307.5l1.6-1.3-1.2-1.9-1.6 1.5z" stroke="#02f"/><path d="M144.3 308.6l1.5-1.1-1.2-1.7-1.5 1.4z" stroke="#01f"/><path d="M142.7 309.6l1.6-1-1.2-1.4-1.5 1.2z" stroke="#00f"/><path d="M141.2 310.3l1.5-.7-1.1-1.2-1.6 1zM139.6 310.7l1.6-.4-1.2-.9-1.5 .7zM138.1 310.8l1.5-.1-1.1-.6-1.6 .5z" stroke="#00e"/></g>
<path d="M77.6 302.6L77.6 243.1M213.6 308.5L213.6 249.0M77.6 243.1L155.0 222.7M155.0 222.7L213.6 249.0M77.6 302.6L136.2 328.9M136.2 328.9L213.6 308.5M78.6 243.1L72.0 243.1M212.6 249.0L219.2 249.0M78.6 251.6L72.0 251.6M212.6 257.5L219.2 257.5M78.6 260.1L72.0 260.1M212.6 266.0L219.2 266.0M78.6 268.6L72.0 268.6M212.6 274.5L219.2 274.5M78.6 277.1L72.0 277.1M212.6 283.0L219.2 283.0M78.6 285.6L72.0 285.6M212.6 291.5L219.2 291.5M78.6 294.1L72.0 294.1M212.6 300.0L219.2 300.0M78.6 302.6L72.0 302.6M212.6 308.5L219.2 308.5M77.6 302.6L72.3 304.0M92.2 309.2L86.9 310.6M106.9 315.8L101.6 317.2M121.5 322.3L116.2 323.7M136.2 328.9L130.9 330.3M136.2 328.9L141.2 331.2M155.5 323.8L160.6 326.1M174.9 318.7L179.9 321.0M194.2 313.6L199.3 315.9M213.6 308.5L218.6 310.8" fill="none" stroke="#222" stroke-width="0.85"/>
<text x="63.4" y="246.6" text-anchor="end">1</text>
<text x="63.4" y="255.1" text-anchor="end">0.8</text>
<text x="63.4" y="263.6" text-anchor="end">0.6</text>
<text x="63.4" y="272.1" text-anchor="end">0.4</text>
<text x="63.4" y="280.6" text-anchor="end">0.2</text>
<text x="63.4" y="289.1" text-anchor="end">0</text>
<text x="63.4" y="297.6" text-anchor="end">-0.2</text>
<text x="63.4" y="306.1" text-anchor="end">-0.4</text>
<text x="69.3" y="309.3" text-anchor="middle">10</text>
<text x="83.9" y="315.9" text-anchor="middle">5</text>
<text x="98.6" y="322.4" text-anchor="middle">0</text>
<text x="113.2" y="329.0" text-anchor="middle">-5</text>
<text x="127.9" y="335.6" text-anchor="middle">-10</text>
<text x="143.8" y="337.9" text-anchor="middle">-10</text>
<text x="163.1" y="332.8" text-anchor="middle">-5</text>
<text x="182.5" y="327.7" text-anchor="middle">0</text>
<text x="201.8" y="322.6" text-anchor="middle">5</text>
<text x="221.2" y="317.5" text-anchor="middle">10</text>
<path d="M270.1 243.3L347.5 222.9L406.1 249.2M270.1 253.2L347.5 232.8L406.1 259.1M270.1 263.1L347.5 242.7L406.1 269.0M270.1 273.0L347.5 252.6L406.1 278.9M270.1 283.0L347.5 262.6L406.1 288.9M270.1 292.9L347.5 272.5L406.1 298.8M270.1 302.8L347.5 282.4L406.1 308.7M270.1 302.8L347.5 282.4L347.5 222.9M281.8 308.1L359.2 287.7L359.2 228.2M293.5 313.3L370.9 292.9L370.9 233.4M305.3 318.6L382.7 298.2L382.7 238.7M317.0 323.8L394.4 303.4L394.4 243.9M328.7 329.1L406.1 308.7L406.1 249.2M328.7 329.1L270.1 302.8L270.1 243.3M344.2 325.0L285.6 298.7L285.6 239.2M359.7 320.9L301.1 294.6L301.1 235.1M375.1 316.9L316.5 290.6L316.5 231.1M390.6 312.8L332.0 286.5L332.0 227.0M406.1 308.7L347.5 282.4L347.5 222.9" fill="none" stroke="#444" stroke-width="0.9" stroke-dasharray="0.9 6"/>
<path d="M347.5 282.4L347.5 222.9M270.1 302.8L347.5 282.4M347.5 282.4L406.1 308.7M359.2 287.7L364.1 286.4M370.9 292.9L375.8 291.6M382.7 298.2L387.5 296.9M394.4 303.4L399.2 302.2M285.6 298.7L281.0 296.7M301.1 294.6L296.5 292.6M316.5 290.6L312.0 288.5M332.0 286.5L327.5 284.4" fill="none" stroke="#222" stroke-width="0.85"/>
<g stroke="#000" stroke-width="0.8" stroke-linejoin="round"><path d="M343.7 238.4l1.6-1.8-1.2-1.9-1.5 1.8z" fill="#900"/><path d="M342.2 240.2l1.5-1.8-1.1-1.9-1.6 1.8z" fill="#a00"/><path d="M340.6 242l1.6-1.8-1.2-1.9-1.5 1.7z" fill="#c00"/><path d="M339.1 243.7l1.5-1.7-1.1-2-1.6 1.6z" fill="#d00"/><path d="M337.5 245.4l1.6-1.7-1.2-2.1-1.5 1.7z" fill="#f00"/><path d="M336 247l1.5-1.6-1.1-2.1-1.6 1.5z" fill="#f10"/><path d="M334.5 248.5l1.5-1.5-1.2-2.2-1.5 1.6z" fill="#f20"/><path d="M332.9 250l1.6-1.5-1.2-2.1-1.6 1.4z" fill="#f30"/><path d="M331.4 251.5l1.5-1.5-1.2-2.2-1.5 1.4z" fill="#f40"/><path d="M329.8 252.8l1.6-1.3-1.2-2.3-1.6 1.3zM328.3 254.1l1.5-1.3-1.2-2.3-1.5 1.3z" fill="#f60"/><path d="M326.7 255.3l1.6-1.2-1.2-2.3-1.6 1.2z" fill="#f70"/><path d="M325.2 256.5l1.5-1.2-1.2-2.3-1.5 1.1z" fill="#f80"/><path d="M323.6 257.5l1.6-1-1.2-2.4-1.6 1z" fill="#f90"/><path d="M322.1 258.5l1.5-1-1.2-2.4-1.5 .9zM320.5 259.4l1.6-.9-1.2-2.5-1.6 .9zM319 260.1l1.5-.7-1.2-2.5-1.5 .7z" fill="#fa0"/><path d="M317.4 260.8l1.6-.7-1.2-2.5-1.5 .7zM315.9 261.3l1.5-.5-1.1-2.5-1.6 .5zM314.3 261.8l1.6-.5-1.2-2.5-1.5 .5zM312.8 262.2l1.5-.4-1.1-2.5-1.6 .4zM311.2 262.4l1.6-.2-1.2-2.5-1.5 .2zM309.7 262.6l1.5-.2-1.1-2.5-1.6 .2z" fill="#fb0"/><path d="M308.1 262.6l1.6 0-1.2-2.5-1.5 0zM306.6 262.6l1.5 0-1.1-2.5-1.6 0zM305 262.4l1.6 .2-1.2-2.5-1.5-.1z" fill="#fa0"/><path d="M303.5 262.2l1.5 .2-1.1-2.4-1.6-.2z" fill="#f90"/><path d="M301.9 261.9l1.6 .3-1.2-2.4-1.5-.3z" fill="#f80"/><path d="M300.4 261.5l1.5 .4-1.1-2.4-1.6-.4z" fill="#f70"/><path d="M298.8 261l1.6 .5-1.2-2.4-1.5-.4zM297.3 260.4l1.5 .6-1.1-2.3-1.6-.5z" fill="#f60"/><path d="M295.8 259.8l1.5 .6-1.2-2.2-1.5-.6z" fill="#f40"/><path d="M294.2 259.1l1.6 .7-1.2-2.2-1.6-.6z" fill="#f30"/><path d="M292.7 258.4l1.5 .7-1.2-2.1-1.5-.7z" fill="#f20"/><path d="M291.1 257.6l1.6 .8-1.2-2.1-1.6-.8z" fill="#f10"/><path d="M289.6 256.8l1.5 .8-1.2-2.1-1.5-.8z" fill="#f00"/><path d="M288 255.9l1.6 .9-1.2-2.1-1.6-.9z" fill="#d00"/><path d="M286.5 254.9l1.5 1-1.2-2.1-1.5-.9z" fill="#c00"/><path d="M284.9 254l1.6 .9-1.2-2-1.6-.9z" fill="#a00"/><path d="M283.4 252.9l1.5 1.1-1.2-2-1.5-1z" fill="#900"/><path d="M344.9 240.4l1.6-1.9-1.2-1.9-1.6 1.8z" fill="#a00"/><path d="M343.4 242.2l1.5-1.8-1.2-2-1.5 1.8z" fill="#c00"/><path d="M341.8 244l1.6-1.8-1.2-2-1.6 1.8z" fill="#d00"/><path d="M340.3 245.7l1.5-1.7-1.2-2-1.5 1.7z" fill="#f00"/><path d="M338.7 247.4l1.6-1.7-1.2-2-1.6 1.7z" fill="#f10"/><path d="M337.2 249.1l1.5-1.7-1.2-2-1.5 1.6z" fill="#f30"/><path d="M335.6 250.7l1.6-1.6-1.2-2.1-1.5 1.5z" fill="#f40"/><path d="M334.1 252.2l1.5-1.5-1.1-2.2-1.6 1.5z" fill="#f50"/><path d="M332.5 253.7l1.6-1.5-1.2-2.2-1.5 1.5z" fill="#f60"/><path d="M331 255.1l1.5-1.4-1.1-2.2-1.6 1.3z" fill="#f70"/><path d="M329.4 256.4l1.6-1.3-1.2-2.3-1.5 1.3z" fill="#f80"/><path d="M327.9 257.7l1.5-1.3-1.1-2.3-1.6 1.2z" fill="#f90"/><path d="M326.3 258.9l1.6-1.2-1.2-2.4-1.5 1.2z" fill="#fa0"/><path d="M324.8 259.9l1.5-1-1.1-2.4-1.6 1z" fill="#fb0"/><path d="M323.2 260.9l1.6-1-1.2-2.4-1.5 1zM321.7 261.8l1.5-.9-1.1-2.4-1.6 .9z" fill="#fc0"/><path d="M320.1 262.6l1.6-.8-1.2-2.4-1.5 .7zM318.6 263.3l1.5-.7-1.1-2.5-1.6 .7zM317 263.9l1.6-.6-1.2-2.5-1.5 .5zM315.5 264.3l1.5-.4-1.1-2.6-1.6 .5zM314 264.7l1.5-.4-1.2-2.5-1.5 .4zM312.4 264.9l1.6-.2-1.2-2.5-1.6 .2zM310.9 265l1.5-.1-1.2-2.5-1.5 .2zM309.3 265.1l1.6-.1-1.2-2.4-1.6 0z" fill="#fd0"/><path d="M307.8 265l1.5 .1-1.2-2.5-1.5 0zM306.2 264.8l1.6 .2-1.2-2.4-1.6-.2z" fill="#fc0"/><path d="M304.7 264.6l1.5 .2-1.2-2.4-1.5-.2z" fill="#fb0"/><path d="M303.1 264.2l1.6 .4-1.2-2.4-1.6-.3z" fill="#fa0"/><path d="M301.6 263.8l1.5 .4-1.2-2.3-1.5-.4z" fill="#f90"/><path d="M300 263.3l1.6 .5-1.2-2.3-1.6-.5z" fill="#f80"/><path d="M298.5 262.7l1.5 .6-1.2-2.3-1.5-.6z" fill="#f70"/><path d="M296.9 262l1.6 .7-1.2-2.3-1.5-.6z" fill="#f60"/><path d="M295.4 261.3l1.5 .7-1.1-2.2-1.6-.7z" fill="#f50"/><path d="M293.8 260.5l1.6 .8-1.2-2.2-1.5-.7z" fill="#f40"/><path d="M292.3 259.7l1.5 .8-1.1-2.1-1.6-.8z" fill="#f30"/><path d="M290.7 258.8l1.6 .9-1.2-2.1-1.5-.8z" fill="#f10"/><path d="M289.2 257.8l1.5 1-1.1-2-1.6-.9z" fill="#f00"/><path d="M287.6 256.9l1.6 .9-1.2-1.9-1.5-1z" fill="#d00"/><path d="M286.1 255.9l1.5 1-1.1-2-1.6-.9z" fill="#c00"/><path d="M284.5 254.8l1.6 1.1-1.2-1.9-1.5-1.1z" fill="#a00"/><path d="M346.1 242.2l1.5-1.9-1.1-1.8-1.6 1.9z" fill="#c00"/><path d="M344.5 244.1l1.6-1.9-1.2-1.8-1.5 1.8z" fill="#d00"/><path d="M343 245.9l1.5-1.8-1.1-1.9-1.6 1.8z" fill="#f00"/><path d="M341.4 247.7l1.6-1.8-1.2-1.9-1.5 1.7z" fill="#f10"/><path d="M339.9 249.5l1.5-1.8-1.1-2-1.6 1.7z" fill="#f30"/><path d="M338.3 251.2l1.6-1.7-1.2-2.1-1.5 1.7z" fill="#f40"/><path d="M336.8 252.8l1.5-1.6-1.1-2.1-1.6 1.6z" fill="#f60"/><path d="M335.2 254.4l1.6-1.6-1.2-2.1-1.5 1.5z" fill="#f70"/><path d="M333.7 255.9l1.5-1.5-1.1-2.2-1.6 1.5z" fill="#f80"/><path d="M332.2 257.3l1.5-1.4-1.2-2.2-1.5 1.4z" fill="#f90"/><path d="M330.6 258.7l1.6-1.4-1.2-2.2-1.6 1.3z" fill="#fa0"/><path d="M329.1 260l1.5-1.3-1.2-2.3-1.5 1.3z" fill="#fb0"/><path d="M327.5 261.2l1.6-1.2-1.2-2.3-1.6 1.2z" fill="#fc0"/><path d="M326 262.3l1.5-1.1-1.2-2.3-1.5 1z" fill="#fd0"/><path d="M324.4 263.4l1.6-1.1-1.2-2.4-1.6 1zM322.9 264.3l1.5-.9-1.2-2.5-1.5 .9z" fill="#fe0"/><path d="M321.3 265.1l1.6-.8-1.2-2.5-1.6 .8zM319.8 265.8l1.5-.7-1.2-2.5-1.5 .7zM318.2 266.4l1.6-.6-1.2-2.5-1.6 .6zM316.7 266.8l1.5-.4-1.2-2.5-1.5 .4zM315.1 267.2l1.6-.4-1.2-2.5-1.5 .4zM313.6 267.4l1.5-.2-1.1-2.5-1.6 .2zM312 267.5l1.6-.1-1.2-2.5-1.5 .1zM310.5 267.5l1.5 0-1.1-2.5-1.6 .1z" fill="#ff0"/><path d="M308.9 267.4l1.6 .1-1.2-2.4-1.5-.1zM307.4 267.2l1.5 .2-1.1-2.4-1.6-.2z" fill="#fe0"/><path d="M305.8 266.9l1.6 .3-1.2-2.4-1.5-.2z" fill="#fd0"/><path d="M304.3 266.5l1.5 .4-1.1-2.3-1.6-.4z" fill="#fc0"/><path d="M302.7 266.1l1.6 .4-1.2-2.3-1.5-.4z" fill="#fb0"/><path d="M301.2 265.5l1.5 .6-1.1-2.3-1.6-.5z" fill="#fa0"/><path d="M299.6 264.9l1.6 .6-1.2-2.2-1.5-.6z" fill="#f90"/><path d="M298.1 264.2l1.5 .7-1.1-2.2-1.6-.7z" fill="#f80"/><path d="M296.5 263.4l1.6 .8-1.2-2.2-1.5-.7z" fill="#f70"/><path d="M295 262.6l1.5 .8-1.1-2.1-1.6-.8z" fill="#f60"/><path d="M293.5 261.7l1.5 .9-1.2-2.1-1.5-.8z" fill="#f40"/><path d="M291.9 260.8l1.6 .9-1.2-2-1.6-.9z" fill="#f30"/><path d="M290.4 259.8l1.5 1-1.2-2-1.5-1z" fill="#f10"/><path d="M288.8 258.8l1.6 1-1.2-2-1.6-.9z" fill="#f00"/><path d="M287.3 257.7l1.5 1.1-1.2-1.9-1.5-1z" fill="#d00"/><path d="M285.7 256.6l1.6 1.1-1.2-1.8-1.6-1.1z" fill="#c00"/><path d="M347.3 244.1l1.5-2-1.2-1.8-1.5 1.9z" fill="#d00"/><path d="M345.7 246l1.6-1.9-1.2-1.9-1.6 1.9z" fill="#f00"/><path d="M344.2 247.8l1.5-1.8-1.2-1.9-1.5 1.8z" fill="#f10"/><path d="M342.6 249.7l1.6-1.9-1.2-1.9-1.6 1.8z" fill="#f30"/><path d="M341.1 251.5l1.5-1.8-1.2-2-1.5 1.8z" fill="#f40"/><path d="M339.5 253.2l1.6-1.7-1.2-2-1.6 1.7z" fill="#f60"/><path d="M338 254.9l1.5-1.7-1.2-2-1.5 1.6z" fill="#f70"/><path d="M336.4 256.5l1.6-1.6-1.2-2.1-1.6 1.6z" fill="#f90"/><path d="M334.9 258.1l1.5-1.6-1.2-2.1-1.5 1.5z" fill="#fa0"/><path d="M333.3 259.6l1.6-1.5-1.2-2.2-1.5 1.4z" fill="#fb0"/><path d="M331.8 261l1.5-1.4-1.1-2.3-1.6 1.4z" fill="#fc0"/><path d="M330.2 262.3l1.6-1.3-1.2-2.3-1.5 1.3z" fill="#fd0"/><path d="M328.7 263.6l1.5-1.3-1.1-2.3-1.6 1.2z" fill="#fe0"/><path d="M327.1 264.7l1.6-1.1-1.2-2.4-1.5 1.1z" fill="#ff0"/><path d="M325.6 265.8l1.5-1.1-1.1-2.4-1.6 1.1zM324 266.7l1.6-.9-1.2-2.4-1.5 .9z" fill="#ef1"/><path d="M322.5 267.6l1.5-.9-1.1-2.4-1.6 .8zM320.9 268.3l1.6-.7-1.2-2.5-1.5 .7zM319.4 268.9l1.5-.6-1.1-2.5-1.6 .6zM317.8 269.3l1.6-.4-1.2-2.5-1.5 .4zM316.3 269.7l1.5-.4-1.1-2.5-1.6 .4zM314.7 269.9l1.6-.2-1.2-2.5-1.5 .2zM313.2 270l1.5-.1-1.1-2.5-1.6 .1zM311.7 270l1.5 0-1.2-2.5-1.5 0z" fill="#df2"/><path d="M310.1 269.9l1.6 .1-1.2-2.5-1.6-.1zM308.6 269.6l1.5 .3-1.2-2.5-1.5-.2z" fill="#ef1"/><path d="M307 269.3l1.6 .3-1.2-2.4-1.6-.3z" fill="#ff0"/><path d="M305.5 268.9l1.5 .4-1.2-2.4-1.5-.4z" fill="#fe0"/><path d="M303.9 268.3l1.6 .6-1.2-2.4-1.6-.4z" fill="#fd0"/><path d="M302.4 267.7l1.5 .6-1.2-2.2-1.5-.6z" fill="#fc0"/><path d="M300.8 267l1.6 .7-1.2-2.2-1.6-.6z" fill="#fb0"/><path d="M299.3 266.3l1.5 .7-1.2-2.1-1.5-.7z" fill="#fa0"/><path d="M297.7 265.5l1.6 .8-1.2-2.1-1.6-.8z" fill="#f90"/><path d="M296.2 264.6l1.5 .9-1.2-2.1-1.5-.8z" fill="#f70"/><path d="M294.6 263.7l1.6 .9-1.2-2-1.5-.9z" fill="#f60"/><path d="M293.1 262.7l1.5 1-1.1-2-1.6-.9z" fill="#f40"/><path d="M291.5 261.7l1.6 1-1.2-1.9-1.5-1z" fill="#f30"/><path d="M290 260.6l1.5 1.1-1.1-1.9-1.6-1z" fill="#f10"/><path d="M288.4 259.6l1.6 1-1.2-1.8-1.5-1.1z" fill="#f00"/><path d="M286.9 258.4l1.5 1.2-1.1-1.9-1.6-1.1z" fill="#d00"/><path d="M348.4 245.8l1.6-1.9-1.2-1.8-1.5 2z" fill="#f00"/><path d="M346.9 247.8l1.5-2-1.1-1.7-1.6 1.9z" fill="#f10"/><path d="M345.3 249.7l1.6-1.9-1.2-1.8-1.5 1.8z" fill="#f30"/><path d="M343.8 251.6l1.5-1.9-1.1-1.9-1.6 1.9z" fill="#f40"/><path d="M342.2 253.4l1.6-1.8-1.2-1.9-1.5 1.8z" fill="#f60"/><path d="M340.7 255.2l1.5-1.8-1.1-1.9-1.6 1.7z" fill="#f70"/><path d="M339.1 256.9l1.6-1.7-1.2-2-1.5 1.7z" fill="#f90"/><path d="M337.6 258.6l1.5-1.7-1.1-2-1.6 1.6z" fill="#fa0"/><path d="M336 260.2l1.6-1.6-1.2-2.1-1.5 1.6z" fill="#fc0"/><path d="M334.5 261.8l1.5-1.6-1.1-2.1-1.6 1.5z" fill="#fd0"/><path d="M332.9 263.2l1.6-1.4-1.2-2.2-1.5 1.4z" fill="#fe0"/><path d="M331.4 264.6l1.5-1.4-1.1-2.2-1.6 1.3z" fill="#ff0"/><path d="M329.9 265.9l1.5-1.3-1.2-2.3-1.5 1.3z" fill="#ef1"/><path d="M328.3 267.1l1.6-1.2-1.2-2.3-1.6 1.1z" fill="#df2"/><path d="M326.8 268.2l1.5-1.1-1.2-2.4-1.5 1.1zM325.2 269.2l1.6-1-1.2-2.4-1.6 .9z" fill="#cf3"/><path d="M323.7 270l1.5-.8-1.2-2.5-1.5 .9zM322.1 270.8l1.6-.8-1.2-2.4-1.6 .7zM320.6 271.4l1.5-.6-1.2-2.5-1.5 .6z" fill="#bf4"/><path d="M319 271.8l1.6-.4-1.2-2.5-1.6 .4zM317.5 272.2l1.5-.4-1.2-2.5-1.5 .4z" fill="#af5"/><path d="M315.9 272.4l1.6-.2-1.2-2.5-1.6 .2zM314.4 272.5l1.5-.1-1.2-2.5-1.5 .1zM312.8 272.4l1.6 .1-1.2-2.5-1.5 0z" fill="#bf4"/><path d="M311.3 272.3l1.5 .1-1.1-2.4-1.6-.1zM309.7 272l1.6 .3-1.2-2.4-1.5-.3z" fill="#cf3"/><path d="M308.2 271.6l1.5 .4-1.1-2.4-1.6-.3z" fill="#df2"/><path d="M306.6 271.1l1.6 .5-1.2-2.3-1.5-.4z" fill="#ef1"/><path d="M305.1 270.6l1.5 .5-1.1-2.2-1.6-.6z" fill="#ff0"/><path d="M303.5 269.9l1.6 .7-1.2-2.3-1.5-.6z" fill="#fe0"/><path d="M302 269.2l1.5 .7-1.1-2.2-1.6-.7z" fill="#fd0"/><path d="M300.4 268.4l1.6 .8-1.2-2.2-1.5-.7z" fill="#fc0"/><path d="M298.9 267.5l1.5 .9-1.1-2.1-1.6-.8z" fill="#fa0"/><path d="M297.3 266.6l1.6 .9-1.2-2-1.5-.9z" fill="#f90"/><path d="M295.8 265.6l1.5 1-1.1-2-1.6-.9z" fill="#f70"/><path d="M294.2 264.6l1.6 1-1.2-1.9-1.5-1z" fill="#f60"/><path d="M292.7 263.6l1.5 1-1.1-1.9-1.6-1z" fill="#f40"/><path d="M291.2 262.5l1.5 1.1-1.2-1.9-1.5-1.1z" fill="#f30"/><path d="M289.6 261.3l1.6 1.2-1.2-1.9-1.6-1z" fill="#f10"/><path d="M288.1 260.2l1.5 1.1-1.2-1.7-1.5-1.2z" fill="#f00"/><path d="M349.6 247.6l1.5-2.1-1.1-1.6-1.6 1.9z" fill="#f10"/><path d="M348.1 249.6l1.5-2-1.2-1.8-1.5 2z" fill="#f30"/><path d="M346.5 251.5l1.6-1.9-1.2-1.8-1.6 1.9z" fill="#f40"/><path d="M345 253.4l1.5-1.9-1.2-1.8-1.5 1.9z" fill="#f60"/><path d="M343.4 255.3l1.6-1.9-1.2-1.8-1.6 1.8z" fill="#f70"/><path d="M341.9 257.1l1.5-1.8-1.2-1.9-1.5 1.8z" fill="#f90"/><path d="M340.3 258.9l1.6-1.8-1.2-1.9-1.6 1.7z" fill="#fa0"/><path d="M338.8 260.7l1.5-1.8-1.2-2-1.5 1.7z" fill="#fc0"/><path d="M337.2 262.3l1.6-1.6-1.2-2.1-1.6 1.6z" fill="#fd0"/><path d="M335.7 263.9l1.5-1.6-1.2-2.1-1.5 1.6z" fill="#ff0"/><path d="M334.1 265.4l1.6-1.5-1.2-2.1-1.6 1.4z" fill="#ef1"/><path d="M332.6 266.9l1.5-1.5-1.2-2.2-1.5 1.4z" fill="#df2"/><path d="M331 268.2l1.6-1.3-1.2-2.3-1.5 1.3z" fill="#cf3"/><path d="M329.5 269.5l1.5-1.3-1.1-2.3-1.6 1.2z" fill="#bf4"/><path d="M327.9 270.6l1.6-1.1-1.2-2.4-1.5 1.1zM326.4 271.6l1.5-1-1.1-2.4-1.6 1z" fill="#af5"/><path d="M324.8 272.5l1.6-.9-1.2-2.4-1.5 .8zM323.3 273.3l1.5-.8-1.1-2.5-1.6 .8z" fill="#9f6"/><path d="M321.7 273.9l1.6-.6-1.2-2.5-1.5 .6zM320.2 274.4l1.5-.5-1.1-2.5-1.6 .4zM318.6 274.7l1.6-.3-1.2-2.6-1.5 .4zM317.1 274.9l1.5-.2-1.1-2.5-1.6 .2z" fill="#8f7"/><path d="M315.5 274.9l1.6 0-1.2-2.5-1.5 .1zM314 274.9l1.5 0-1.1-2.4-1.6-.1z" fill="#9f6"/><path d="M312.4 274.7l1.6 .2-1.2-2.5-1.5-.1zM310.9 274.4l1.5 .3-1.1-2.4-1.6-.3z" fill="#af5"/><path d="M309.4 273.9l1.5 .5-1.2-2.4-1.5-.4z" fill="#bf4"/><path d="M307.8 273.4l1.6 .5-1.2-2.3-1.6-.5z" fill="#cf3"/><path d="M306.3 272.8l1.5 .6-1.2-2.3-1.5-.5z" fill="#df2"/><path d="M304.7 272.1l1.6 .7-1.2-2.2-1.6-.7z" fill="#ef1"/><path d="M303.2 271.3l1.5 .8-1.2-2.2-1.5-.7z" fill="#ff0"/><path d="M301.6 270.4l1.6 .9-1.2-2.1-1.6-.8z" fill="#fd0"/><path d="M300.1 269.5l1.5 .9-1.2-2-1.5-.9z" fill="#fc0"/><path d="M298.5 268.6l1.6 .9-1.2-2-1.6-.9z" fill="#fa0"/><path d="M297 267.5l1.5 1.1-1.2-2-1.5-1z" fill="#f90"/><path d="M295.4 266.5l1.6 1-1.2-1.9-1.6-1z" fill="#f70"/><path d="M293.9 265.4l1.5 1.1-1.2-1.9-1.5-1z" fill="#f60"/><path d="M292.3 264.2l1.6 1.2-1.2-1.8-1.5-1.1z" fill="#f40"/><path d="M290.8 263.1l1.5 1.1-1.1-1.7-1.6-1.2z" fill="#f30"/><path d="M289.2 261.9l1.6 1.2-1.2-1.8-1.5-1.1z" fill="#f10"/><path d="M350.8 249.2l1.5-2-1.2-1.7-1.5 2.1z" fill="#f20"/><path d="M349.2 251.3l1.6-2.1-1.2-1.6-1.5 2z" fill="#f40"/><path d="M347.7 253.3l1.5-2-1.1-1.7-1.6 1.9z" fill="#f60"/><path d="M346.1 255.2l1.6-1.9-1.2-1.8-1.5 1.9z" fill="#f70"/><path d="M344.6 257.2l1.5-2-1.1-1.8-1.6 1.9z" fill="#f90"/><path d="M343 259l1.6-1.8-1.2-1.9-1.5 1.8z" fill="#fa0"/><path d="M341.5 260.9l1.5-1.9-1.1-1.9-1.6 1.8z" fill="#fc0"/><path d="M339.9 262.7l1.6-1.8-1.2-2-1.5 1.8z" fill="#fd0"/><path d="M338.4 264.4l1.5-1.7-1.1-2-1.6 1.6z" fill="#ff0"/><path d="M336.8 266l1.6-1.6-1.2-2.1-1.5 1.6z" fill="#ef1"/><path d="M335.3 267.6l1.5-1.6-1.1-2.1-1.6 1.5z" fill="#df2"/><path d="M333.7 269.1l1.6-1.5-1.2-2.2-1.5 1.5z" fill="#bf4"/><path d="M332.2 270.5l1.5-1.4-1.1-2.2-1.6 1.3z" fill="#af5"/><path d="M330.6 271.8l1.6-1.3-1.2-2.3-1.5 1.3z" fill="#9f6"/><path d="M329.1 273l1.5-1.2-1.1-2.3-1.6 1.1zM327.6 274l1.5-1-1.2-2.4-1.5 1z" fill="#8f7"/><path d="M326 275l1.6-1-1.2-2.4-1.6 .9zM324.5 275.7l1.5-.7-1.2-2.5-1.5 .8z" fill="#7f8"/><path d="M322.9 276.4l1.6-.7-1.2-2.4-1.6 .6zM321.4 276.9l1.5-.5-1.2-2.5-1.5 .5zM319.8 277.2l1.6-.3-1.2-2.5-1.6 .3zM318.3 277.4l1.5-.2-1.2-2.5-1.5 .2z" fill="#6f9"/><path d="M316.7 277.4l1.6 0-1.2-2.5-1.6 0zM315.2 277.3l1.5 .1-1.2-2.5-1.5 0z" fill="#7f8"/><path d="M313.6 277.1l1.6 .2-1.2-2.4-1.6-.2zM312.1 276.7l1.5 .4-1.2-2.4-1.5-.3z" fill="#8f7"/><path d="M310.5 276.2l1.6 .5-1.2-2.3-1.5-.5z" fill="#9f6"/><path d="M309 275.6l1.5 .6-1.1-2.3-1.6-.5z" fill="#af5"/><path d="M307.4 275l1.6 .6-1.2-2.2-1.5-.6z" fill="#bf4"/><path d="M305.9 274.2l1.5 .8-1.1-2.2-1.6-.7z" fill="#df2"/><path d="M304.3 273.4l1.6 .8-1.2-2.1-1.5-.8z" fill="#ef1"/><path d="M302.8 272.5l1.5 .9-1.1-2.1-1.6-.9z" fill="#ff0"/><path d="M301.2 271.5l1.6 1-1.2-2.1-1.5-.9z" fill="#fd0"/><path d="M299.7 270.5l1.5 1-1.1-2-1.6-.9z" fill="#fc0"/><path d="M298.1 269.4l1.6 1.1-1.2-1.9-1.5-1.1z" fill="#fa0"/><path d="M296.6 268.3l1.5 1.1-1.1-1.9-1.6-1z" fill="#f90"/><path d="M295 267.1l1.6 1.2-1.2-1.8-1.5-1.1z" fill="#f70"/><path d="M293.5 266l1.5 1.1-1.1-1.7-1.6-1.2z" fill="#f60"/><path d="M291.9 264.7l1.6 1.3-1.2-1.8-1.5-1.1z" fill="#f40"/><path d="M290.4 263.5l1.5 1.2-1.1-1.6-1.6-1.2z" fill="#f20"/><path d="M351.9 250.9l1.6-2.1-1.2-1.6-1.5 2z" fill="#f30"/><path d="M350.4 252.9l1.5-2-1.1-1.7-1.6 2.1z" fill="#f50"/><path d="M348.8 255l1.6-2.1-1.2-1.6-1.5 2z" fill="#f70"/><path d="M347.3 257l1.5-2-1.1-1.7-1.6 1.9z" fill="#f90"/><path d="M345.8 259l1.5-2-1.2-1.8-1.5 2z" fill="#fa0"/><path d="M344.2 260.9l1.6-1.9-1.2-1.8-1.6 1.8z" fill="#fc0"/><path d="M342.7 262.8l1.5-1.9-1.2-1.9-1.5 1.9z" fill="#fd0"/><path d="M341.1 264.6l1.6-1.8-1.2-1.9-1.6 1.8z" fill="#ff0"/><path d="M339.6 266.4l1.5-1.8-1.2-1.9-1.5 1.7z" fill="#ef1"/><path d="M338 268.1l1.6-1.7-1.2-2-1.6 1.6z" fill="#cf3"/><path d="M336.5 269.8l1.5-1.7-1.2-2.1-1.5 1.6z" fill="#bf4"/><path d="M334.9 271.3l1.6-1.5-1.2-2.2-1.6 1.5z" fill="#af5"/><path d="M333.4 272.8l1.5-1.5-1.2-2.2-1.5 1.4z" fill="#8f7"/><path d="M331.8 274.1l1.6-1.3-1.2-2.3-1.6 1.3z" fill="#7f8"/><path d="M330.3 275.4l1.5-1.3-1.2-2.3-1.5 1.2zM328.7 276.5l1.6-1.1-1.2-2.4-1.5 1z" fill="#6f9"/><path d="M327.2 277.4l1.5-.9-1.1-2.5-1.6 1zM325.6 278.2l1.6-.8-1.2-2.4-1.5 .7z" fill="#5fa"/><path d="M324.1 278.9l1.5-.7-1.1-2.5-1.6 .7zM322.5 279.4l1.6-.5-1.2-2.5-1.5 .5zM321 279.7l1.5-.3-1.1-2.5-1.6 .3zM319.4 279.9l1.6-.2-1.2-2.5-1.5 .2z" fill="#4fb"/><path d="M317.9 279.9l1.5 0-1.1-2.5-1.6 0zM316.3 279.7l1.6 .2-1.2-2.5-1.5-.1z" fill="#5fa"/><path d="M314.8 279.4l1.5 .3-1.1-2.4-1.6-.2zM313.2 279l1.6 .4-1.2-2.3-1.5-.4z" fill="#6f9"/><path d="M311.7 278.5l1.5 .5-1.1-2.3-1.6-.5z" fill="#7f8"/><path d="M310.1 277.8l1.6 .7-1.2-2.3-1.5-.6z" fill="#8f7"/><path d="M308.6 277.1l1.5 .7-1.1-2.2-1.6-.6z" fill="#af5"/><path d="M307.1 276.3l1.5 .8-1.2-2.1-1.5-.8z" fill="#bf4"/><path d="M305.5 275.4l1.6 .9-1.2-2.1-1.6-.8z" fill="#cf3"/><path d="M304 274.4l1.5 1-1.2-2-1.5-.9z" fill="#ef1"/><path d="M302.4 273.4l1.6 1-1.2-1.9-1.6-1z" fill="#ff0"/><path d="M300.9 272.3l1.5 1.1-1.2-1.9-1.5-1z" fill="#fd0"/><path d="M299.3 271.2l1.6 1.1-1.2-1.8-1.6-1.1z" fill="#fc0"/><path d="M297.8 270l1.5 1.2-1.2-1.8-1.5-1.1z" fill="#fa0"/><path d="M296.2 268.8l1.6 1.2-1.2-1.7-1.6-1.2z" fill="#f90"/><path d="M294.7 267.6l1.5 1.2-1.2-1.7-1.5-1.1z" fill="#f70"/><path d="M293.1 266.4l1.6 1.2-1.2-1.6-1.6-1.3z" fill="#f50"/><path d="M291.6 265.1l1.5 1.3-1.2-1.7-1.5-1.2z" fill="#f30"/><path d="M353.1 252.4l1.6-2.1-1.2-1.5-1.6 2.1z" fill="#f40"/><path d="M351.6 254.5l1.5-2.1-1.2-1.5-1.5 2z" fill="#f60"/><path d="M350 256.6l1.6-2.1-1.2-1.6-1.6 2.1z" fill="#f80"/><path d="M348.5 258.7l1.5-2.1-1.2-1.6-1.5 2z" fill="#fa0"/><path d="M346.9 260.7l1.6-2-1.2-1.7-1.5 2z" fill="#fc0"/><path d="M345.4 262.7l1.5-2-1.1-1.7-1.6 1.9z" fill="#fd0"/><path d="M343.8 264.6l1.6-1.9-1.2-1.8-1.5 1.9z" fill="#ff0"/><path d="M342.3 266.5l1.5-1.9-1.1-1.8-1.6 1.8z" fill="#ef1"/><path d="M340.7 268.4l1.6-1.9-1.2-1.9-1.5 1.8z" fill="#cf3"/><path d="M339.2 270.1l1.5-1.7-1.1-2-1.6 1.7z" fill="#bf4"/><path d="M337.6 271.8l1.6-1.7-1.2-2-1.5 1.7z" fill="#9f6"/><path d="M336.1 273.5l1.5-1.7-1.1-2-1.6 1.5z" fill="#8f7"/><path d="M334.5 275l1.6-1.5-1.2-2.2-1.5 1.5z" fill="#7f8"/><path d="M333 276.4l1.5-1.4-1.1-2.2-1.6 1.3z" fill="#6f9"/><path d="M331.4 277.7l1.6-1.3-1.2-2.3-1.5 1.3z" fill="#5fa"/><path d="M329.9 278.9l1.5-1.2-1.1-2.3-1.6 1.1z" fill="#4fb"/><path d="M328.3 279.9l1.6-1-1.2-2.4-1.5 .9z" fill="#3fc"/><path d="M326.8 280.7l1.5-.8-1.1-2.5-1.6 .8zM325.3 281.4l1.5-.7-1.2-2.5-1.5 .7zM323.7 281.9l1.6-.5-1.2-2.5-1.6 .5zM322.2 282.2l1.5-.3-1.2-2.5-1.5 .3zM320.6 282.3l1.6-.1-1.2-2.5-1.6 .2zM319.1 282.3l1.5 0-1.2-2.4-1.5 0z" fill="#2fd"/><path d="M317.5 282.1l1.6 .2-1.2-2.4-1.6-.2z" fill="#3fc"/><path d="M316 281.8l1.5 .3-1.2-2.4-1.5-.3z" fill="#4fb"/><path d="M314.4 281.3l1.6 .5-1.2-2.4-1.6-.4z" fill="#5fa"/><path d="M312.9 280.7l1.5 .6-1.2-2.3-1.5-.5z" fill="#6f9"/><path d="M311.3 280l1.6 .7-1.2-2.2-1.6-.7z" fill="#7f8"/><path d="M309.8 279.2l1.5 .8-1.2-2.2-1.5-.7z" fill="#8f7"/><path d="M308.2 278.3l1.6 .9-1.2-2.1-1.5-.8z" fill="#9f6"/><path d="M306.7 277.3l1.5 1-1.1-2-1.6-.9z" fill="#bf4"/><path d="M305.1 276.3l1.6 1-1.2-1.9-1.5-1z" fill="#cf3"/><path d="M303.6 275.2l1.5 1.1-1.1-1.9-1.6-1z" fill="#ef1"/><path d="M302 274.1l1.6 1.1-1.2-1.8-1.5-1.1z" fill="#ff0"/><path d="M300.5 272.9l1.5 1.2-1.1-1.8-1.6-1.1z" fill="#fd0"/><path d="M298.9 271.7l1.6 1.2-1.2-1.7-1.5-1.2z" fill="#fc0"/><path d="M297.4 270.5l1.5 1.2-1.1-1.7-1.6-1.2z" fill="#fa0"/><path d="M295.8 269.2l1.6 1.3-1.2-1.7-1.5-1.2z" fill="#f80"/><path d="M294.3 267.9l1.5 1.3-1.1-1.6-1.6-1.2z" fill="#f60"/><path d="M292.7 266.6l1.6 1.3-1.2-1.5-1.5-1.3z" fill="#f40"/><path d="M354.3 253.9l1.5-2.2-1.1-1.4-1.6 2.1z" fill="#f60"/><path d="M352.7 256l1.6-2.1-1.2-1.5-1.5 2.1z" fill="#f70"/><path d="M351.2 258.2l1.5-2.2-1.1-1.5-1.6 2.1z" fill="#f90"/><path d="M349.6 260.3l1.6-2.1-1.2-1.6-1.5 2.1z" fill="#fb0"/><path d="M348.1 262.4l1.5-2.1-1.1-1.6-1.6 2z" fill="#fd0"/><path d="M346.5 264.4l1.6-2-1.2-1.7-1.5 2z" fill="#ff0"/><path d="M345 266.4l1.5-2-1.1-1.7-1.6 1.9z" fill="#ef1"/><path d="M343.5 268.3l1.5-1.9-1.2-1.8-1.5 1.9z" fill="#cf3"/><path d="M341.9 270.3l1.6-2-1.2-1.8-1.6 1.9z" fill="#bf4"/><path d="M340.4 272.1l1.5-1.8-1.2-1.9-1.5 1.7z" fill="#9f6"/><path d="M338.8 273.9l1.6-1.8-1.2-2-1.6 1.7z" fill="#8f7"/><path d="M337.3 275.6l1.5-1.7-1.2-2.1-1.5 1.7z" fill="#6f9"/><path d="M335.7 277.2l1.6-1.6-1.2-2.1-1.6 1.5z" fill="#5fa"/><path d="M334.2 278.6l1.5-1.4-1.2-2.2-1.5 1.4z" fill="#4fb"/><path d="M332.6 280l1.6-1.4-1.2-2.2-1.6 1.3z" fill="#3fc"/><path d="M331.1 281.2l1.5-1.2-1.2-2.3-1.5 1.2z" fill="#2fd"/><path d="M329.5 282.3l1.6-1.1-1.2-2.3-1.6 1z" fill="#1fe"/><path d="M328 283.2l1.5-.9-1.2-2.4-1.5 .8zM326.4 283.9l1.6-.7-1.2-2.5-1.5 .7zM324.9 284.4l1.5-.5-1.1-2.5-1.6 .5zM323.3 284.7l1.6-.3-1.2-2.5-1.5 .3zM321.8 284.8l1.5-.1-1.1-2.5-1.6 .1zM320.2 284.7l1.6 .1-1.2-2.5-1.5 0z" fill="#0ff"/><path d="M318.7 284.5l1.5 .2-1.1-2.4-1.6-.2z" fill="#1fe"/><path d="M317.1 284.1l1.6 .4-1.2-2.4-1.5-.3z" fill="#2fd"/><path d="M315.6 283.5l1.5 .6-1.1-2.3-1.6-.5z" fill="#3fc"/><path d="M314 282.9l1.6 .6-1.2-2.2-1.5-.6z" fill="#4fb"/><path d="M312.5 282.1l1.5 .8-1.1-2.2-1.6-.7z" fill="#5fa"/><path d="M310.9 281.2l1.6 .9-1.2-2.1-1.5-.8z" fill="#6f9"/><path d="M309.4 280.3l1.5 .9-1.1-2-1.6-.9z" fill="#8f7"/><path d="M307.8 279.2l1.6 1.1-1.2-2-1.5-1z" fill="#9f6"/><path d="M306.3 278.1l1.5 1.1-1.1-1.9-1.6-1z" fill="#bf4"/><path d="M304.8 277l1.5 1.1-1.2-1.8-1.5-1.1z" fill="#cf3"/><path d="M303.2 275.8l1.6 1.2-1.2-1.8-1.6-1.1z" fill="#ef1"/><path d="M301.7 274.6l1.5 1.2-1.2-1.7-1.5-1.2z" fill="#ff0"/><path d="M300.1 273.3l1.6 1.3-1.2-1.7-1.6-1.2z" fill="#fd0"/><path d="M298.6 272l1.5 1.3-1.2-1.6-1.5-1.2z" fill="#fb0"/><path d="M297 270.7l1.6 1.3-1.2-1.5-1.6-1.3z" fill="#f90"/><path d="M295.5 269.4l1.5 1.3-1.2-1.5-1.5-1.3z" fill="#f70"/><path d="M293.9 268l1.6 1.4-1.2-1.5-1.6-1.3zM355.5 255.3l1.5-2.2-1.2-1.4-1.5 2.2z" fill="#f60"/><path d="M353.9 257.5l1.6-2.2-1.2-1.4-1.6 2.1z" fill="#f80"/><path d="M352.4 259.7l1.5-2.2-1.2-1.5-1.5 2.2z" fill="#fa0"/><path d="M350.8 261.8l1.6-2.1-1.2-1.5-1.6 2.1z" fill="#fc0"/><path d="M349.3 263.9l1.5-2.1-1.2-1.5-1.5 2.1z" fill="#fe0"/><path d="M347.7 266l1.6-2.1-1.2-1.5-1.6 2z" fill="#ef1"/><path d="M346.2 268.1l1.5-2.1-1.2-1.6-1.5 2z" fill="#df2"/><path d="M344.6 270.1l1.6-2-1.2-1.7-1.5 1.9z" fill="#bf4"/><path d="M343.1 272.1l1.5-2-1.1-1.8-1.6 2z" fill="#9f6"/><path d="M341.5 274l1.6-1.9-1.2-1.8-1.5 1.8z" fill="#8f7"/><path d="M340 275.8l1.5-1.8-1.1-1.9-1.6 1.8z" fill="#6f9"/><path d="M338.4 277.6l1.6-1.8-1.2-1.9-1.5 1.7z" fill="#5fa"/><path d="M336.9 279.3l1.5-1.7-1.1-2-1.6 1.6z" fill="#3fc"/><path d="M335.3 280.9l1.6-1.6-1.2-2.1-1.5 1.4z" fill="#2fd"/><path d="M333.8 282.3l1.5-1.4-1.1-2.3-1.6 1.4z" fill="#1fe"/><path d="M332.2 283.6l1.6-1.3-1.2-2.3-1.5 1.2z" fill="#0ff"/><path d="M330.7 284.7l1.5-1.1-1.1-2.4-1.6 1.1z" fill="#0ef"/><path d="M329.1 285.7l1.6-1-1.2-2.4-1.5 .9zM327.6 286.4l1.5-.7-1.1-2.5-1.6 .7zM326 286.9l1.6-.5-1.2-2.5-1.5 .5zM324.5 287.2l1.5-.3-1.1-2.5-1.6 .3zM323 287.3l1.5-.1-1.2-2.5-1.5 .1zM321.4 287.2l1.6 .1-1.2-2.5-1.6-.1z" fill="#0df"/><path d="M319.9 286.9l1.5 .3-1.2-2.5-1.5-.2z" fill="#0ef"/><path d="M318.3 286.4l1.6 .5-1.2-2.4-1.6-.4z" fill="#0ff"/><path d="M316.8 285.7l1.5 .7-1.2-2.3-1.5-.6z" fill="#1fe"/><path d="M315.2 285l1.6 .7-1.2-2.2-1.6-.6z" fill="#2fd"/><path d="M313.7 284.1l1.5 .9-1.2-2.1-1.5-.8z" fill="#3fc"/><path d="M312.1 283.2l1.6 .9-1.2-2-1.6-.9z" fill="#5fa"/><path d="M310.6 282.1l1.5 1.1-1.2-2-1.5-.9z" fill="#6f9"/><path d="M309 281.1l1.6 1-1.2-1.8-1.6-1.1z" fill="#8f7"/><path d="M307.5 279.9l1.5 1.2-1.2-1.9-1.5-1.1z" fill="#9f6"/><path d="M305.9 278.7l1.6 1.2-1.2-1.8-1.5-1.1z" fill="#bf4"/><path d="M304.4 277.5l1.5 1.2-1.1-1.7-1.6-1.2z" fill="#df2"/><path d="M302.8 276.2l1.6 1.3-1.2-1.7-1.5-1.2z" fill="#ef1"/><path d="M301.3 274.9l1.5 1.3-1.1-1.6-1.6-1.3z" fill="#fe0"/><path d="M299.7 273.5l1.6 1.4-1.2-1.6-1.5-1.3z" fill="#fc0"/><path d="M298.2 272.2l1.5 1.3-1.1-1.5-1.6-1.3z" fill="#fa0"/><path d="M296.6 270.8l1.6 1.4-1.2-1.5-1.5-1.3z" fill="#f80"/><path d="M295.1 269.4l1.5 1.4-1.1-1.4-1.6-1.4z" fill="#f60"/><path d="M356.6 256.6l1.6-2.2-1.2-1.3-1.5 2.2z" fill="#f70"/><path d="M355.1 258.9l1.5-2.3-1.1-1.3-1.6 2.2z" fill="#f90"/><path d="M353.5 261.1l1.6-2.2-1.2-1.4-1.5 2.2z" fill="#fb0"/><path d="M352 263.3l1.5-2.2-1.1-1.4-1.6 2.1z" fill="#fd0"/><path d="M350.4 265.4l1.6-2.1-1.2-1.5-1.5 2.1z" fill="#ff0"/><path d="M348.9 267.6l1.5-2.2-1.1-1.5-1.6 2.1z" fill="#df2"/><path d="M347.3 269.7l1.6-2.1-1.2-1.6-1.5 2.1z" fill="#bf4"/><path d="M345.8 271.8l1.5-2.1-1.1-1.6-1.6 2z" fill="#af5"/><path d="M344.2 273.8l1.6-2-1.2-1.7-1.5 2z" fill="#8f7"/><path d="M342.7 275.8l1.5-2-1.1-1.7-1.6 1.9z" fill="#6f9"/><path d="M341.2 277.7l1.5-1.9-1.2-1.8-1.5 1.8z" fill="#5fa"/><path d="M339.6 279.6l1.6-1.9-1.2-1.9-1.6 1.8z" fill="#3fc"/><path d="M338.1 281.3l1.5-1.7-1.2-2-1.5 1.7z" fill="#2fd"/><path d="M336.5 283l1.6-1.7-1.2-2-1.6 1.6z" fill="#0ff"/><path d="M335 284.5l1.5-1.5-1.2-2.1-1.5 1.4z" fill="#0ef"/><path d="M333.4 285.9l1.6-1.4-1.2-2.2-1.6 1.3z" fill="#0df"/><path d="M331.9 287.1l1.5-1.2-1.2-2.3-1.5 1.1z" fill="#0cf"/><path d="M330.3 288.1l1.6-1-1.2-2.4-1.6 1zM328.8 288.9l1.5-.8-1.2-2.4-1.5 .7zM327.2 289.4l1.6-.5-1.2-2.5-1.6 .5zM325.7 289.7l1.5-.3-1.2-2.5-1.5 .3zM324.1 289.7l1.6 0-1.2-2.5-1.5 .1zM322.6 289.6l1.5 .1-1.1-2.4-1.6-.1z" fill="#0bf"/><path d="M321 289.2l1.6 .4-1.2-2.4-1.5-.3z" fill="#0cf"/><path d="M319.5 288.6l1.5 .6-1.1-2.3-1.6-.5z" fill="#0df"/><path d="M317.9 287.9l1.6 .7-1.2-2.2-1.5-.7z" fill="#0ef"/><path d="M316.4 287.1l1.5 .8-1.1-2.2-1.6-.7z" fill="#0ff"/><path d="M314.8 286.1l1.6 1-1.2-2.1-1.5-.9z" fill="#2fd"/><path d="M313.3 285.1l1.5 1-1.1-2-1.6-.9z" fill="#3fc"/><path d="M311.7 284l1.6 1.1-1.2-1.9-1.5-1.1z" fill="#5fa"/><path d="M310.2 282.8l1.5 1.2-1.1-1.9-1.6-1z" fill="#6f9"/><path d="M308.6 281.6l1.6 1.2-1.2-1.7-1.5-1.2z" fill="#8f7"/><path d="M307.1 280.3l1.5 1.3-1.1-1.7-1.6-1.2z" fill="#af5"/><path d="M305.5 279l1.6 1.3-1.2-1.6-1.5-1.2z" fill="#bf4"/><path d="M304 277.7l1.5 1.3-1.1-1.5-1.6-1.3z" fill="#df2"/><path d="M302.5 276.3l1.5 1.4-1.2-1.5-1.5-1.3z" fill="#ff0"/><path d="M300.9 275l1.6 1.3-1.2-1.4-1.6-1.4z" fill="#fd0"/><path d="M299.4 273.6l1.5 1.4-1.2-1.5-1.5-1.3z" fill="#fb0"/><path d="M297.8 272.1l1.6 1.5-1.2-1.4-1.6-1.4z" fill="#f90"/><path d="M296.3 270.7l1.5 1.4-1.2-1.3-1.5-1.4z" fill="#f70"/><path d="M357.8 257.9l1.6-2.3-1.2-1.2-1.6 2.2z" fill="#f80"/><path d="M356.3 260.2l1.5-2.3-1.2-1.3-1.5 2.3z" fill="#fa0"/><path d="M354.7 262.4l1.6-2.2-1.2-1.3-1.6 2.2z" fill="#fc0"/><path d="M353.2 264.6l1.5-2.2-1.2-1.3-1.5 2.2z" fill="#fe0"/><path d="M351.6 266.9l1.6-2.3-1.2-1.3-1.6 2.1z" fill="#ef1"/><path d="M350.1 269l1.5-2.1-1.2-1.5-1.5 2.2z" fill="#cf3"/><path d="M348.5 271.2l1.6-2.2-1.2-1.4-1.6 2.1z" fill="#af5"/><path d="M347 273.4l1.5-2.2-1.2-1.5-1.5 2.1z" fill="#8f7"/><path d="M345.4 275.5l1.6-2.1-1.2-1.6-1.6 2z" fill="#7f8"/><path d="M343.9 277.5l1.5-2-1.2-1.7-1.5 2z" fill="#5fa"/><path d="M342.3 279.5l1.6-2-1.2-1.7-1.5 1.9z" fill="#3fc"/><path d="M340.8 281.5l1.5-2-1.1-1.8-1.6 1.9z" fill="#2fd"/><path d="M339.2 283.3l1.6-1.8-1.2-1.9-1.5 1.7z" fill="#0ff"/><path d="M337.7 285.1l1.5-1.8-1.1-2-1.6 1.7z" fill="#0ef"/><path d="M336.1 286.7l1.6-1.6-1.2-2.1-1.5 1.5z" fill="#0cf"/><path d="M334.6 288.2l1.5-1.5-1.1-2.2-1.6 1.4z" fill="#0bf"/><path d="M333 289.5l1.6-1.3-1.2-2.3-1.5 1.2z" fill="#0af"/><path d="M331.5 290.5l1.5-1-1.1-2.4-1.6 1zM329.9 291.4l1.6-.9-1.2-2.4-1.5 .8z" fill="#09f"/><path d="M328.4 291.9l1.5-.5-1.1-2.5-1.6 .5zM326.8 292.2l1.6-.3-1.2-2.5-1.5 .3z" fill="#08f"/><path d="M325.3 292.2l1.5 0-1.1-2.5-1.6 0zM323.7 291.9l1.6 .3-1.2-2.5-1.5-.1z" fill="#09f"/><path d="M322.2 291.4l1.5 .5-1.1-2.3-1.6-.4z" fill="#0af"/><path d="M320.7 290.8l1.5 .6-1.2-2.2-1.5-.6z" fill="#0bf"/><path d="M319.1 290l1.6 .8-1.2-2.2-1.6-.7z" fill="#0cf"/><path d="M317.6 289l1.5 1-1.2-2.1-1.5-.8z" fill="#0ef"/><path d="M316 288l1.6 1-1.2-1.9-1.6-1z" fill="#0ff"/><path d="M314.5 286.9l1.5 1.1-1.2-1.9-1.5-1z" fill="#2fd"/><path d="M312.9 285.7l1.6 1.2-1.2-1.8-1.6-1.1z" fill="#3fc"/><path d="M311.4 284.4l1.5 1.3-1.2-1.7-1.5-1.2z" fill="#5fa"/><path d="M309.8 283.1l1.6 1.3-1.2-1.6-1.6-1.2z" fill="#7f8"/><path d="M308.3 281.8l1.5 1.3-1.2-1.5-1.5-1.3z" fill="#8f7"/><path d="M306.7 280.5l1.6 1.3-1.2-1.5-1.6-1.3z" fill="#af5"/><path d="M305.2 279.1l1.5 1.4-1.2-1.5-1.5-1.3z" fill="#cf3"/><path d="M303.6 277.7l1.6 1.4-1.2-1.4-1.5-1.4z" fill="#ef1"/><path d="M302.1 276.3l1.5 1.4-1.1-1.4-1.6-1.3z" fill="#fe0"/><path d="M300.5 274.8l1.6 1.5-1.2-1.3-1.5-1.4z" fill="#fc0"/><path d="M299 273.4l1.5 1.4-1.1-1.2-1.6-1.5z" fill="#fa0"/><path d="M297.4 271.9l1.6 1.5-1.2-1.3-1.5-1.4z" fill="#f80"/><path d="M359 259.1l1.5-2.3-1.1-1.2-1.6 2.3z" fill="#f90"/><path d="M357.4 261.4l1.6-2.3-1.2-1.2-1.5 2.3z" fill="#fb0"/><path d="M355.9 263.6l1.5-2.2-1.1-1.2-1.6 2.2z" fill="#fd0"/><path d="M354.3 265.9l1.6-2.3-1.2-1.2-1.5 2.2z" fill="#ff0"/><path d="M352.8 268.2l1.5-2.3-1.1-1.3-1.6 2.3z" fill="#df2"/><path d="M351.2 270.4l1.6-2.2-1.2-1.3-1.5 2.1z" fill="#bf4"/><path d="M349.7 272.6l1.5-2.2-1.1-1.4-1.6 2.2z" fill="#9f6"/><path d="M348.1 274.8l1.6-2.2-1.2-1.4-1.5 2.2z" fill="#7f8"/><path d="M346.6 277l1.5-2.2-1.1-1.4-1.6 2.1z" fill="#6f9"/><path d="M345 279.1l1.6-2.1-1.2-1.5-1.5 2z" fill="#4fb"/><path d="M343.5 281.2l1.5-2.1-1.1-1.6-1.6 2z" fill="#2fd"/><path d="M341.9 283.2l1.6-2-1.2-1.7-1.5 2z" fill="#0ff"/><path d="M340.4 285.2l1.5-2-1.1-1.7-1.6 1.8z" fill="#0ef"/><path d="M338.9 287.1l1.5-1.9-1.2-1.9-1.5 1.8z" fill="#0cf"/><path d="M337.3 288.8l1.6-1.7-1.2-2-1.6 1.6z" fill="#0bf"/><path d="M335.8 290.4l1.5-1.6-1.2-2.1-1.5 1.5z" fill="#09f"/><path d="M334.2 291.8l1.6-1.4-1.2-2.2-1.6 1.3z" fill="#08f"/><path d="M332.7 293l1.5-1.2-1.2-2.3-1.5 1zM331.1 293.9l1.6-.9-1.2-2.5-1.6 .9z" fill="#07f"/><path d="M329.6 294.4l1.5-.5-1.2-2.5-1.5 .5zM328 294.7l1.6-.3-1.2-2.5-1.6 .3z" fill="#06f"/><path d="M326.5 294.6l1.5 .1-1.2-2.5-1.5 0zM324.9 294.2l1.6 .4-1.2-2.4-1.6-.3z" fill="#07f"/><path d="M323.4 293.7l1.5 .5-1.2-2.3-1.5-.5z" fill="#08f"/><path d="M321.8 292.9l1.6 .8-1.2-2.3-1.5-.6z" fill="#09f"/><path d="M320.3 291.9l1.5 1-1.1-2.1-1.6-.8z" fill="#0bf"/><path d="M318.7 290.9l1.6 1-1.2-1.9-1.5-1z" fill="#0cf"/><path d="M317.2 289.8l1.5 1.1-1.1-1.9-1.6-1z" fill="#0ef"/><path d="M315.6 288.5l1.6 1.3-1.2-1.8-1.5-1.1z" fill="#0ff"/><path d="M314.1 287.3l1.5 1.2-1.1-1.6-1.6-1.2z" fill="#2fd"/><path d="M312.5 286l1.6 1.3-1.2-1.6-1.5-1.3z" fill="#4fb"/><path d="M311 284.6l1.5 1.4-1.1-1.6-1.6-1.3z" fill="#6f9"/><path d="M309.4 283.2l1.6 1.4-1.2-1.5-1.5-1.3z" fill="#7f8"/><path d="M307.9 281.8l1.5 1.4-1.1-1.4-1.6-1.3z" fill="#9f6"/><path d="M306.3 280.4l1.6 1.4-1.2-1.3-1.5-1.4z" fill="#bf4"/><path d="M304.8 279l1.5 1.4-1.1-1.3-1.6-1.4z" fill="#df2"/><path d="M303.2 277.5l1.6 1.5-1.2-1.3-1.5-1.4z" fill="#ff0"/><path d="M301.7 276l1.5 1.5-1.1-1.2-1.6-1.5z" fill="#fd0"/><path d="M300.2 274.6l1.5 1.4-1.2-1.2-1.5-1.4z" fill="#fb0"/><path d="M298.6 273.1l1.6 1.5-1.2-1.2-1.6-1.5z" fill="#f90"/><path d="M360.1 260.1l1.6-2.3-1.2-1-1.5 2.3z" fill="#fa0"/><path d="M358.6 262.5l1.5-2.4-1.1-1-1.6 2.3z" fill="#fc0"/><path d="M357.1 264.8l1.5-2.3-1.2-1.1-1.5 2.2z" fill="#fe0"/><path d="M355.5 267.1l1.6-2.3-1.2-1.2-1.6 2.3z" fill="#ef1"/><path d="M354 269.4l1.5-2.3-1.2-1.2-1.5 2.3z" fill="#cf3"/><path d="M352.4 271.7l1.6-2.3-1.2-1.2-1.6 2.2z" fill="#af5"/><path d="M350.9 273.9l1.5-2.2-1.2-1.3-1.5 2.2z" fill="#8f7"/><path d="M349.3 276.2l1.6-2.3-1.2-1.3-1.6 2.2z" fill="#6f9"/><path d="M347.8 278.4l1.5-2.2-1.2-1.4-1.5 2.2z" fill="#5fa"/><path d="M346.2 280.6l1.6-2.2-1.2-1.4-1.6 2.1z" fill="#3fc"/><path d="M344.7 282.8l1.5-2.2-1.2-1.5-1.5 2.1z" fill="#1fe"/><path d="M343.1 284.9l1.6-2.1-1.2-1.6-1.6 2z" fill="#0ef"/><path d="M341.6 286.9l1.5-2-1.2-1.7-1.5 2z" fill="#0cf"/><path d="M340 288.9l1.6-2-1.2-1.7-1.5 1.9z" fill="#0bf"/><path d="M338.5 290.8l1.5-1.9-1.1-1.8-1.6 1.7z" fill="#09f"/><path d="M336.9 292.5l1.6-1.7-1.2-2-1.5 1.6z" fill="#08f"/><path d="M335.4 294.1l1.5-1.6-1.1-2.1-1.6 1.4z" fill="#06f"/><path d="M333.8 295.4l1.6-1.3-1.2-2.3-1.5 1.2zM332.3 296.3l1.5-.9-1.1-2.4-1.6 .9z" fill="#05f"/><path d="M330.7 296.9l1.6-.6-1.2-2.4-1.5 .5zM329.2 297.2l1.5-.3-1.1-2.5-1.6 .3z" fill="#04f"/><path d="M327.6 297l1.6 .2-1.2-2.5-1.5-.1zM326.1 296.5l1.5 .5-1.1-2.4-1.6-.4z" fill="#05f"/><path d="M324.5 295.8l1.6 .7-1.2-2.3-1.5-.5z" fill="#06f"/><path d="M323 294.9l1.5 .9-1.1-2.1-1.6-.8z" fill="#08f"/><path d="M321.4 293.8l1.6 1.1-1.2-2-1.5-1z" fill="#09f"/><path d="M319.9 292.7l1.5 1.1-1.1-1.9-1.6-1z" fill="#0bf"/><path d="M318.4 291.4l1.5 1.3-1.2-1.8-1.5-1.1z" fill="#0cf"/><path d="M316.8 290.1l1.6 1.3-1.2-1.6-1.6-1.3z" fill="#0ef"/><path d="M315.3 288.8l1.5 1.3-1.2-1.6-1.5-1.2z" fill="#1fe"/><path d="M313.7 287.4l1.6 1.4-1.2-1.5-1.6-1.3z" fill="#3fc"/><path d="M312.2 286l1.5 1.4-1.2-1.4-1.5-1.4z" fill="#5fa"/><path d="M310.6 284.5l1.6 1.5-1.2-1.4-1.6-1.4z" fill="#6f9"/><path d="M309.1 283.1l1.5 1.4-1.2-1.3-1.5-1.4z" fill="#8f7"/><path d="M307.5 281.6l1.6 1.5-1.2-1.3-1.6-1.4z" fill="#af5"/><path d="M306 280.1l1.5 1.5-1.2-1.2-1.5-1.4z" fill="#cf3"/><path d="M304.4 278.6l1.6 1.5-1.2-1.1-1.6-1.5z" fill="#ef1"/><path d="M302.9 277.1l1.5 1.5-1.2-1.1-1.5-1.5z" fill="#fe0"/><path d="M301.3 275.6l1.6 1.5-1.2-1.1-1.5-1.4z" fill="#fc0"/><path d="M299.8 274.1l1.5 1.5-1.1-1-1.6-1.5zM361.3 261.1l1.6-2.3-1.2-1-1.6 2.3z" fill="#fa0"/><path d="M359.8 263.5l1.5-2.4-1.2-1-1.5 2.4z" fill="#fc0"/><path d="M358.2 265.8l1.6-2.3-1.2-1-1.5 2.3z" fill="#fe0"/><path d="M356.7 268.1l1.5-2.3-1.1-1-1.6 2.3z" fill="#ef1"/><path d="M355.1 270.5l1.6-2.4-1.2-1-1.5 2.3z" fill="#cf3"/><path d="M353.6 272.8l1.5-2.3-1.1-1.1-1.6 2.3z" fill="#af5"/><path d="M352 275.1l1.6-2.3-1.2-1.1-1.5 2.2z" fill="#8f7"/><path d="M350.5 277.4l1.5-2.3-1.1-1.2-1.6 2.3z" fill="#6f9"/><path d="M348.9 279.7l1.6-2.3-1.2-1.2-1.5 2.2z" fill="#4fb"/><path d="M347.4 281.9l1.5-2.2-1.1-1.3-1.6 2.2z" fill="#2fd"/><path d="M345.8 284.2l1.6-2.3-1.2-1.3-1.5 2.2z" fill="#0ff"/><path d="M344.3 286.4l1.5-2.2-1.1-1.4-1.6 2.1z" fill="#0df"/><path d="M342.7 288.5l1.6-2.1-1.2-1.5-1.5 2z" fill="#0bf"/><path d="M341.2 290.6l1.5-2.1-1.1-1.6-1.6 2z" fill="#09f"/><path d="M339.6 292.6l1.6-2-1.2-1.7-1.5 1.9z" fill="#08f"/><path d="M338.1 294.5l1.5-1.9-1.1-1.8-1.6 1.7z" fill="#06f"/><path d="M336.6 296.2l1.5-1.7-1.2-2-1.5 1.6z" fill="#05f"/><path d="M335 297.7l1.6-1.5-1.2-2.1-1.6 1.3zM333.5 298.8l1.5-1.1-1.2-2.3-1.5 .9z" fill="#03f"/><path d="M331.9 299.4l1.6-.6-1.2-2.5-1.6 .6zM330.4 299.6l1.5-.2-1.2-2.5-1.5 .3z" fill="#02f"/><path d="M328.8 299.3l1.6 .3-1.2-2.4-1.6-.2zM327.3 298.7l1.5 .6-1.2-2.3-1.5-.5z" fill="#03f"/><path d="M325.7 297.8l1.6 .9-1.2-2.2-1.6-.7z" fill="#05f"/><path d="M324.2 296.7l1.5 1.1-1.2-2-1.5-.9z" fill="#06f"/><path d="M322.6 295.5l1.6 1.2-1.2-1.8-1.6-1.1z" fill="#08f"/><path d="M321.1 294.2l1.5 1.3-1.2-1.7-1.5-1.1z" fill="#09f"/><path d="M319.5 292.9l1.6 1.3-1.2-1.5-1.5-1.3z" fill="#0bf"/><path d="M318 291.5l1.5 1.4-1.1-1.5-1.6-1.3z" fill="#0df"/><path d="M316.4 290.1l1.6 1.4-1.2-1.4-1.5-1.3z" fill="#0ff"/><path d="M314.9 288.7l1.5 1.4-1.1-1.3-1.6-1.4z" fill="#2fd"/><path d="M313.3 287.2l1.6 1.5-1.2-1.3-1.5-1.4z" fill="#4fb"/><path d="M311.8 285.7l1.5 1.5-1.1-1.2-1.6-1.5z" fill="#6f9"/><path d="M310.2 284.2l1.6 1.5-1.2-1.2-1.5-1.4z" fill="#8f7"/><path d="M308.7 282.7l1.5 1.5-1.1-1.1-1.6-1.5z" fill="#af5"/><path d="M307.1 281.2l1.6 1.5-1.2-1.1-1.5-1.5z" fill="#cf3"/><path d="M305.6 279.7l1.5 1.5-1.1-1.1-1.6-1.5z" fill="#ef1"/><path d="M304 278.2l1.6 1.5-1.2-1.1-1.5-1.5z" fill="#fe0"/><path d="M302.5 276.6l1.5 1.6-1.1-1.1-1.6-1.5z" fill="#fc0"/><path d="M300.9 275.1l1.6 1.5-1.2-1-1.5-1.5zM362.5 262l1.5-2.4-1.1-.8-1.6 2.3z" fill="#fa0"/><path d="M360.9 264.4l1.6-2.4-1.2-.9-1.5 2.4z" fill="#fd0"/><path d="M359.4 266.7l1.5-2.3-1.1-.9-1.6 2.3z" fill="#ff0"/><path d="M357.8 269.1l1.6-2.4-1.2-.9-1.5 2.3z" fill="#df2"/><path d="M356.3 271.4l1.5-2.3-1.1-1-1.6 2.4z" fill="#bf4"/><path d="M354.8 273.8l1.5-2.4-1.2-.9-1.5 2.3z" fill="#9f6"/><path d="M353.2 276.1l1.6-2.3-1.2-1-1.6 2.3z" fill="#7f8"/><path d="M351.7 278.5l1.5-2.4-1.2-1-1.5 2.3z" fill="#5fa"/><path d="M350.1 280.8l1.6-2.3-1.2-1.1-1.6 2.3z" fill="#3fc"/><path d="M348.6 283.1l1.5-2.3-1.2-1.1-1.5 2.2z" fill="#1fe"/><path d="M347 285.4l1.6-2.3-1.2-1.2-1.6 2.3z" fill="#0ef"/><path d="M345.5 287.7l1.5-2.3-1.2-1.2-1.5 2.2z" fill="#0cf"/><path d="M343.9 289.9l1.6-2.2-1.2-1.3-1.6 2.1z" fill="#0af"/><path d="M342.4 292.2l1.5-2.3-1.2-1.4-1.5 2.1z" fill="#08f"/><path d="M340.8 294.3l1.6-2.1-1.2-1.6-1.6 2z" fill="#06f"/><path d="M339.3 296.4l1.5-2.1-1.2-1.7-1.5 1.9z" fill="#05f"/><path d="M337.7 298.3l1.6-1.9-1.2-1.9-1.5 1.7z" fill="#03f"/><path d="M336.2 299.9l1.5-1.6-1.1-2.1-1.6 1.5z" fill="#02f"/><path d="M334.6 301.2l1.6-1.3-1.2-2.2-1.5 1.1z" fill="#01f"/><path d="M333.1 302l1.5-.8-1.1-2.4-1.6 .6zM331.5 302l1.6 0-1.2-2.6-1.5 .2z" fill="#00f"/><path d="M330 301.6l1.5 .4-1.1-2.4-1.6-.3z" fill="#01f"/><path d="M328.4 300.7l1.6 .9-1.2-2.3-1.5-.6z" fill="#02f"/><path d="M326.9 299.6l1.5 1.1-1.1-2-1.6-.9z" fill="#03f"/><path d="M325.3 298.4l1.6 1.2-1.2-1.8-1.5-1.1z" fill="#05f"/><path d="M323.8 297.1l1.5 1.3-1.1-1.7-1.6-1.2z" fill="#06f"/><path d="M322.2 295.7l1.6 1.4-1.2-1.6-1.5-1.3z" fill="#08f"/><path d="M320.7 294.2l1.5 1.5-1.1-1.5-1.6-1.3z" fill="#0af"/><path d="M319.1 292.8l1.6 1.4-1.2-1.3-1.5-1.4z" fill="#0cf"/><path d="M317.6 291.3l1.5 1.5-1.1-1.3-1.6-1.4z" fill="#0ef"/><path d="M316.1 289.8l1.5 1.5-1.2-1.2-1.5-1.4z" fill="#1fe"/><path d="M314.5 288.3l1.6 1.5-1.2-1.1-1.6-1.5z" fill="#3fc"/><path d="M313 286.8l1.5 1.5-1.2-1.1-1.5-1.5z" fill="#5fa"/><path d="M311.4 285.2l1.6 1.6-1.2-1.1-1.6-1.5z" fill="#7f8"/><path d="M309.9 283.7l1.5 1.5-1.2-1-1.5-1.5z" fill="#9f6"/><path d="M308.3 282.1l1.6 1.6-1.2-1-1.6-1.5z" fill="#bf4"/><path d="M306.8 280.6l1.5 1.5-1.2-.9-1.5-1.5z" fill="#df2"/><path d="M305.2 279.1l1.6 1.5-1.2-.9-1.6-1.5z" fill="#ff0"/><path d="M303.7 277.5l1.5 1.6-1.2-.9-1.5-1.6z" fill="#fd0"/><path d="M302.1 276l1.6 1.5-1.2-.9-1.6-1.5z" fill="#fa0"/><path d="M363.7 262.8l1.5-2.4-1.2-.8-1.5 2.4z" fill="#fb0"/><path d="M362.1 265.2l1.6-2.4-1.2-.8-1.6 2.4z" fill="#fd0"/><path d="M360.6 267.5l1.5-2.3-1.2-.8-1.5 2.3z" fill="#ff0"/><path d="M359 269.9l1.6-2.4-1.2-.8-1.6 2.4z" fill="#df2"/><path d="M357.5 272.3l1.5-2.4-1.2-.8-1.5 2.3z" fill="#bf4"/><path d="M355.9 274.7l1.6-2.4-1.2-.9-1.5 2.4z" fill="#9f6"/><path d="M354.4 277l1.5-2.3-1.1-.9-1.6 2.3z" fill="#7f8"/><path d="M352.8 279.4l1.6-2.4-1.2-.9-1.5 2.4z" fill="#5fa"/><path d="M351.3 281.8l1.5-2.4-1.1-.9-1.6 2.3z" fill="#2fd"/><path d="M349.7 284.1l1.6-2.3-1.2-1-1.5 2.3z" fill="#0ff"/><path d="M348.2 286.5l1.5-2.4-1.1-1-1.6 2.3z" fill="#0df"/><path d="M346.6 288.8l1.6-2.3-1.2-1.1-1.5 2.3z" fill="#0bf"/><path d="M345.1 291.1l1.5-2.3-1.1-1.1-1.6 2.2z" fill="#09f"/><path d="M343.5 293.4l1.6-2.3-1.2-1.2-1.5 2.3z" fill="#07f"/><path d="M342 295.7l1.5-2.3-1.1-1.2-1.6 2.1z" fill="#05f"/><path d="M340.4 297.9l1.6-2.2-1.2-1.4-1.5 2.1z" fill="#03f"/><path d="M338.9 300.1l1.5-2.2-1.1-1.5-1.6 1.9z" fill="#02f"/><path d="M337.3 302l1.6-1.9-1.2-1.8-1.5 1.6z" fill="#00f"/><path d="M335.8 303.6l1.5-1.6-1.1-2.1-1.6 1.3z" fill="#00e"/><path d="M334.3 304.5l1.5-.9-1.2-2.4-1.5 .8zM332.7 304.4l1.6 .1-1.2-2.5-1.6 0z" fill="#00d"/><path d="M331.2 303.6l1.5 .8-1.2-2.4-1.5-.4z" fill="#00e"/><path d="M329.6 302.5l1.6 1.1-1.2-2-1.6-.9z" fill="#00f"/><path d="M328.1 301.2l1.5 1.3-1.2-1.8-1.5-1.1z" fill="#02f"/><path d="M326.5 299.8l1.6 1.4-1.2-1.6-1.6-1.2z" fill="#03f"/><path d="M325 298.3l1.5 1.5-1.2-1.4-1.5-1.3z" fill="#05f"/><path d="M323.4 296.9l1.6 1.4-1.2-1.2-1.6-1.4z" fill="#07f"/><path d="M321.9 295.3l1.5 1.6-1.2-1.2-1.5-1.5z" fill="#09f"/><path d="M320.3 293.8l1.6 1.5-1.2-1.1-1.6-1.4z" fill="#0bf"/><path d="M318.8 292.3l1.5 1.5-1.2-1-1.5-1.5z" fill="#0df"/><path d="M317.2 290.7l1.6 1.6-1.2-1-1.5-1.5z" fill="#0ff"/><path d="M315.7 289.2l1.5 1.5-1.1-.9-1.6-1.5z" fill="#2fd"/><path d="M314.1 287.7l1.6 1.5-1.2-.9-1.5-1.5z" fill="#5fa"/><path d="M312.6 286.1l1.5 1.6-1.1-.9-1.6-1.6z" fill="#7f8"/><path d="M311 284.5l1.6 1.6-1.2-.9-1.5-1.5z" fill="#9f6"/><path d="M309.5 283l1.5 1.5-1.1-.8-1.6-1.6z" fill="#bf4"/><path d="M307.9 281.4l1.6 1.6-1.2-.9-1.5-1.5z" fill="#df2"/><path d="M306.4 279.9l1.5 1.5-1.1-.8-1.6-1.5z" fill="#ff0"/><path d="M304.8 278.3l1.6 1.6-1.2-.8-1.5-1.6z" fill="#fd0"/><path d="M303.3 276.7l1.5 1.6-1.1-.8-1.6-1.5zM364.8 263.5l1.6-2.4-1.2-.7-1.5 2.4z" fill="#fb0"/><path d="M363.3 265.9l1.5-2.4-1.1-.7-1.6 2.4z" fill="#fd0"/><path d="M361.7 268.2l1.6-2.3-1.2-.7-1.5 2.3z" fill="#ff0"/><path d="M360.2 270.6l1.5-2.4-1.1-.7-1.6 2.4z" fill="#df2"/><path d="M358.6 273l1.6-2.4-1.2-.7-1.5 2.4z" fill="#bf4"/><path d="M357.1 275.4l1.5-2.4-1.1-.7-1.6 2.4z" fill="#8f7"/><path d="M355.5 277.8l1.6-2.4-1.2-.7-1.5 2.3z" fill="#6f9"/><path d="M354 280.2l1.5-2.4-1.1-.8-1.6 2.4z" fill="#4fb"/><path d="M352.5 282.6l1.5-2.4-1.2-.8-1.5 2.4z" fill="#2fd"/><path d="M350.9 284.9l1.6-2.3-1.2-.8-1.6 2.3z" fill="#0ff"/><path d="M349.4 287.3l1.5-2.4-1.2-.8-1.5 2.4z" fill="#0df"/><path d="M347.8 289.7l1.6-2.4-1.2-.8-1.6 2.3z" fill="#0bf"/><path d="M346.3 292.1l1.5-2.4-1.2-.9-1.5 2.3z" fill="#09f"/><path d="M344.7 294.4l1.6-2.3-1.2-1-1.6 2.3z" fill="#07f"/><path d="M343.2 296.8l1.5-2.4-1.2-1-1.5 2.3z" fill="#05f"/><path d="M341.6 299.2l1.6-2.4-1.2-1.1-1.6 2.2z" fill="#03f"/><path d="M340.1 301.5l1.5-2.3-1.2-1.3-1.5 2.2z" fill="#01f"/><path d="M338.5 303.7l1.6-2.2-1.2-1.4-1.6 1.9z" fill="#00e"/><path d="M337 305.7l1.5-2-1.2-1.7-1.5 1.6z" fill="#00c"/><path d="M335.4 307l1.6-1.3-1.2-2.1-1.5 .9zM333.9 306.6l1.5 .4-1.1-2.5-1.6-.1z" fill="#00b"/><path d="M332.3 305.3l1.6 1.3-1.2-2.2-1.5-.8z" fill="#00c"/><path d="M330.8 303.9l1.5 1.4-1.1-1.7-1.6-1.1z" fill="#00e"/><path d="M329.2 302.4l1.6 1.5-1.2-1.4-1.5-1.3z" fill="#01f"/><path d="M327.7 300.9l1.5 1.5-1.1-1.2-1.6-1.4z" fill="#03f"/><path d="M326.1 299.3l1.6 1.6-1.2-1.1-1.5-1.5z" fill="#05f"/><path d="M324.6 297.8l1.5 1.5-1.1-1-1.6-1.4z" fill="#07f"/><path d="M323 296.2l1.6 1.6-1.2-.9-1.5-1.6z" fill="#09f"/><path d="M321.5 294.7l1.5 1.5-1.1-.9-1.6-1.5z" fill="#0bf"/><path d="M319.9 293.1l1.6 1.6-1.2-.9-1.5-1.5z" fill="#0df"/><path d="M318.4 291.5l1.5 1.6-1.1-.8-1.6-1.6z" fill="#0ff"/><path d="M316.8 290l1.6 1.5-1.2-.8-1.5-1.5z" fill="#2fd"/><path d="M315.3 288.4l1.5 1.6-1.1-.8-1.6-1.5z" fill="#4fb"/><path d="M313.8 286.8l1.5 1.6-1.2-.7-1.5-1.6z" fill="#6f9"/><path d="M312.2 285.3l1.6 1.5-1.2-.7-1.6-1.6z" fill="#8f7"/><path d="M310.7 283.7l1.5 1.6-1.2-.8-1.5-1.5z" fill="#bf4"/><path d="M309.1 282.1l1.6 1.6-1.2-.7-1.6-1.6z" fill="#df2"/><path d="M307.6 280.5l1.5 1.6-1.2-.7-1.5-1.5z" fill="#ff0"/><path d="M306 279l1.6 1.5-1.2-.6-1.6-1.6z" fill="#fd0"/><path d="M304.5 277.4l1.5 1.6-1.2-.7-1.5-1.6zM366 264.1l1.6-2.4-1.2-.6-1.6 2.4z" fill="#fb0"/><path d="M364.5 266.4l1.5-2.3-1.2-.6-1.5 2.4z" fill="#fd0"/><path d="M362.9 268.8l1.6-2.4-1.2-.5-1.6 2.3z" fill="#ff0"/><path d="M361.4 271.2l1.5-2.4-1.2-.6-1.5 2.4z" fill="#df2"/><path d="M359.8 273.6l1.6-2.4-1.2-.6-1.6 2.4z" fill="#af5"/><path d="M358.3 276l1.5-2.4-1.2-.6-1.5 2.4z" fill="#8f7"/><path d="M356.7 278.4l1.6-2.4-1.2-.6-1.6 2.4z" fill="#6f9"/><path d="M355.2 280.8l1.5-2.4-1.2-.6-1.5 2.4z" fill="#4fb"/><path d="M353.6 283.2l1.6-2.4-1.2-.6-1.5 2.4z" fill="#2fd"/><path d="M352.1 285.6l1.5-2.4-1.1-.6-1.6 2.3z" fill="#0ff"/><path d="M350.5 288l1.6-2.4-1.2-.7-1.5 2.4z" fill="#0df"/><path d="M349 290.4l1.5-2.4-1.1-.7-1.6 2.4z" fill="#0bf"/><path d="M347.4 292.7l1.6-2.3-1.2-.7-1.5 2.4z" fill="#08f"/><path d="M345.9 295.1l1.5-2.4-1.1-.6-1.6 2.3z" fill="#06f"/><path d="M344.3 297.5l1.6-2.4-1.2-.7-1.5 2.4z" fill="#04f"/><path d="M342.8 299.9l1.5-2.4-1.1-.7-1.6 2.4z" fill="#02f"/><path d="M341.2 302.3l1.6-2.4-1.2-.7-1.5 2.3z" fill="#00f"/><path d="M339.7 304.7l1.5-2.4-1.1-.8-1.6 2.2z" fill="#00d"/><path d="M338.1 307.1l1.6-2.4-1.2-1-1.5 2z" fill="#00b"/><path d="M336.6 309.5l1.5-2.4-1.1-1.4-1.6 1.3zM335 307.9l1.6 1.6-1.2-2.5-1.5-.4z" fill="#009"/><path d="M333.5 306.3l1.5 1.6-1.1-1.3-1.6-1.3z" fill="#00b"/><path d="M332 304.8l1.5 1.5-1.2-1-1.5-1.4z" fill="#00d"/><path d="M330.4 303.2l1.6 1.6-1.2-.9-1.6-1.5z" fill="#00f"/><path d="M328.9 301.6l1.5 1.6-1.2-.8-1.5-1.5z" fill="#02f"/><path d="M327.3 300l1.6 1.6-1.2-.7-1.6-1.6z" fill="#04f"/><path d="M325.8 298.5l1.5 1.5-1.2-.7-1.5-1.5z" fill="#06f"/><path d="M324.2 296.9l1.6 1.6-1.2-.7-1.6-1.6z" fill="#08f"/><path d="M322.7 295.3l1.5 1.6-1.2-.7-1.5-1.5z" fill="#0bf"/><path d="M321.1 293.7l1.6 1.6-1.2-.6-1.6-1.6z" fill="#0df"/><path d="M319.6 292.2l1.5 1.5-1.2-.6-1.5-1.6z" fill="#0ff"/><path d="M318 290.6l1.6 1.6-1.2-.7-1.6-1.5z" fill="#2fd"/><path d="M316.5 289l1.5 1.6-1.2-.6-1.5-1.6z" fill="#4fb"/><path d="M314.9 287.4l1.6 1.6-1.2-.6-1.5-1.6z" fill="#6f9"/><path d="M313.4 285.9l1.5 1.5-1.1-.6-1.6-1.5z" fill="#8f7"/><path d="M311.8 284.3l1.6 1.6-1.2-.6-1.5-1.6z" fill="#af5"/><path d="M310.3 282.7l1.5 1.6-1.1-.6-1.6-1.6z" fill="#df2"/><path d="M308.7 281.1l1.6 1.6-1.2-.6-1.5-1.6z" fill="#ff0"/><path d="M307.2 279.6l1.5 1.5-1.1-.6-1.6-1.5z" fill="#fd0"/><path d="M305.6 278l1.6 1.6-1.2-.6-1.5-1.6zM367.2 264.5l1.5-2.4-1.1-.4-1.6 2.4z" fill="#fb0"/><path d="M365.6 266.9l1.6-2.4-1.2-.4-1.5 2.3z" fill="#fd0"/><path d="M364.1 269.3l1.5-2.4-1.1-.5-1.6 2.4z" fill="#ff0"/><path d="M362.5 271.7l1.6-2.4-1.2-.5-1.5 2.4z" fill="#df2"/><path d="M361 274.1l1.5-2.4-1.1-.5-1.6 2.4z" fill="#af5"/><path d="M359.4 276.5l1.6-2.4-1.2-.5-1.5 2.4z" fill="#8f7"/><path d="M357.9 278.8l1.5-2.3-1.1-.5-1.6 2.4z" fill="#6f9"/><path d="M356.3 281.2l1.6-2.4-1.2-.4-1.5 2.4z" fill="#4fb"/><path d="M354.8 283.6l1.5-2.4-1.1-.4-1.6 2.4z" fill="#2fd"/><path d="M353.2 286l1.6-2.4-1.2-.4-1.5 2.4z" fill="#0ff"/><path d="M351.7 288.4l1.5-2.4-1.1-.4-1.6 2.4z" fill="#0df"/><path d="M350.2 290.8l1.5-2.4-1.2-.4-1.5 2.4z" fill="#0bf"/><path d="M348.6 293.1l1.6-2.3-1.2-.4-1.6 2.3z" fill="#08f"/><path d="M347.1 295.5l1.5-2.4-1.2-.4-1.5 2.4z" fill="#06f"/><path d="M345.5 297.9l1.6-2.4-1.2-.4-1.6 2.4z" fill="#04f"/><path d="M344 300.2l1.5-2.3-1.2-.4-1.5 2.4z" fill="#02f"/><path d="M342.4 302.5l1.6-2.3-1.2-.3-1.6 2.4z" fill="#00f"/><path d="M340.9 304.8l1.5-2.3-1.2-.2-1.5 2.4z" fill="#00d"/><path d="M339.3 306.8l1.6-2-1.2-.1-1.6 2.4z" fill="#00b"/><path d="M337.8 308l1.5-1.2-1.2 .3-1.5 2.4zM336.2 307.6l1.6 .4-1.2 1.5-1.6-1.6z" fill="#009"/><path d="M334.7 306.4l1.5 1.2-1.2 .3-1.5-1.6z" fill="#00b"/><path d="M333.1 305l1.6 1.4-1.2-.1-1.5-1.5z" fill="#00d"/><path d="M331.6 303.5l1.5 1.5-1.1-.2-1.6-1.6z" fill="#00f"/><path d="M330 301.9l1.6 1.6-1.2-.3-1.5-1.6z" fill="#02f"/><path d="M328.5 300.4l1.5 1.5-1.1-.3-1.6-1.6z" fill="#04f"/><path d="M326.9 298.8l1.6 1.6-1.2-.4-1.5-1.5z" fill="#06f"/><path d="M325.4 297.3l1.5 1.5-1.1-.3-1.6-1.6z" fill="#08f"/><path d="M323.8 295.7l1.6 1.6-1.2-.4-1.5-1.6z" fill="#0bf"/><path d="M322.3 294.2l1.5 1.5-1.1-.4-1.6-1.6z" fill="#0df"/><path d="M320.7 292.6l1.6 1.6-1.2-.5-1.5-1.5z" fill="#0ff"/><path d="M319.2 291l1.5 1.6-1.1-.4-1.6-1.6z" fill="#2fd"/><path d="M317.6 289.5l1.6 1.5-1.2-.4-1.5-1.6z" fill="#4fb"/><path d="M316.1 287.9l1.5 1.6-1.1-.5-1.6-1.6z" fill="#6f9"/><path d="M314.5 286.3l1.6 1.6-1.2-.5-1.5-1.5z" fill="#8f7"/><path d="M313 284.7l1.5 1.6-1.1-.4-1.6-1.6z" fill="#af5"/><path d="M311.5 283.2l1.5 1.5-1.2-.4-1.5-1.6z" fill="#df2"/><path d="M309.9 281.6l1.6 1.6-1.2-.5-1.6-1.6z" fill="#ff0"/><path d="M308.4 280l1.5 1.6-1.2-.5-1.5-1.5z" fill="#fd0"/><path d="M306.8 278.5l1.6 1.5-1.2-.4-1.6-1.6zM368.4 264.9l1.5-2.4-1.2-.4-1.5 2.4z" fill="#fb0"/><path d="M366.8 267.3l1.6-2.4-1.2-.4-1.6 2.4z" fill="#fd0"/><path d="M365.3 269.7l1.5-2.4-1.2-.4-1.5 2.4z" fill="#ff0"/><path d="M363.7 272l1.6-2.3-1.2-.4-1.6 2.4z" fill="#df2"/><path d="M362.2 274.4l1.5-2.4-1.2-.3-1.5 2.4z" fill="#bf4"/><path d="M360.6 276.8l1.6-2.4-1.2-.3-1.6 2.4z" fill="#8f7"/><path d="M359.1 279.1l1.5-2.3-1.2-.3-1.5 2.3z" fill="#6f9"/><path d="M357.5 281.5l1.6-2.4-1.2-.3-1.6 2.4z" fill="#4fb"/><path d="M356 283.9l1.5-2.4-1.2-.3-1.5 2.4z" fill="#2fd"/><path d="M354.4 286.2l1.6-2.3-1.2-.3-1.6 2.4z" fill="#0ff"/><path d="M352.9 288.6l1.5-2.4-1.2-.2-1.5 2.4z" fill="#0df"/><path d="M351.3 290.9l1.6-2.3-1.2-.2-1.5 2.4z" fill="#0bf"/><path d="M349.8 293.2l1.5-2.3-1.1-.1-1.6 2.3z" fill="#09f"/><path d="M348.2 295.5l1.6-2.3-1.2-.1-1.5 2.4z" fill="#07f"/><path d="M346.7 297.8l1.5-2.3-1.1 0-1.6 2.4z" fill="#05f"/><path d="M345.1 300l1.6-2.2-1.2 .1-1.5 2.3z" fill="#03f"/><path d="M343.6 302.2l1.5-2.2-1.1 .2-1.6 2.3z" fill="#01f"/><path d="M342 304.1l1.6-1.9-1.2 .3-1.5 2.3z" fill="#00e"/><path d="M340.5 305.7l1.5-1.6-1.1 .7-1.6 2z" fill="#00c"/><path d="M338.9 306.6l1.6-.9-1.2 1.1-1.5 1.2zM337.4 306.5l1.5 .1-1.1 1.4-1.6-.4z" fill="#00b"/><path d="M335.8 305.7l1.6 .8-1.2 1.1-1.5-1.2z" fill="#00c"/><path d="M334.3 304.6l1.5 1.1-1.1 .7-1.6-1.4z" fill="#00e"/><path d="M332.7 303.3l1.6 1.3-1.2 .4-1.5-1.5z" fill="#01f"/><path d="M331.2 301.9l1.5 1.4-1.1 .2-1.6-1.6z" fill="#03f"/><path d="M329.7 300.4l1.5 1.5-1.2 0-1.5-1.5z" fill="#05f"/><path d="M328.1 299l1.6 1.4-1.2 0-1.6-1.6z" fill="#07f"/><path d="M326.6 297.4l1.5 1.6-1.2-.2-1.5-1.5z" fill="#09f"/><path d="M325 295.9l1.6 1.5-1.2-.1-1.6-1.6z" fill="#0bf"/><path d="M323.5 294.4l1.5 1.5-1.2-.2-1.5-1.5z" fill="#0df"/><path d="M321.9 292.9l1.6 1.5-1.2-.2-1.6-1.6z" fill="#0ff"/><path d="M320.4 291.3l1.5 1.6-1.2-.3-1.5-1.6z" fill="#2fd"/><path d="M318.8 289.8l1.6 1.5-1.2-.3-1.6-1.5z" fill="#4fb"/><path d="M317.3 288.2l1.5 1.6-1.2-.3-1.5-1.6z" fill="#6f9"/><path d="M315.7 286.6l1.6 1.6-1.2-.3-1.6-1.6z" fill="#8f7"/><path d="M314.2 285.1l1.5 1.5-1.2-.3-1.5-1.6z" fill="#bf4"/><path d="M312.6 283.5l1.6 1.6-1.2-.4-1.5-1.5z" fill="#df2"/><path d="M311.1 282l1.5 1.5-1.1-.3-1.6-1.6z" fill="#ff0"/><path d="M309.5 280.4l1.6 1.6-1.2-.4-1.5-1.6z" fill="#fd0"/><path d="M308 278.8l1.5 1.6-1.1-.4-1.6-1.5zM369.5 265.2l1.6-2.4-1.2-.3-1.5 2.4z" fill="#fb0"/><path d="M368 267.5l1.5-2.3-1.1-.3-1.6 2.4z" fill="#fd0"/><path d="M366.4 269.9l1.6-2.4-1.2-.2-1.5 2.4z" fill="#ff0"/><path d="M364.9 272.2l1.5-2.3-1.1-.2-1.6 2.3z" fill="#df2"/><path d="M363.3 274.6l1.6-2.4-1.2-.2-1.5 2.4z" fill="#bf4"/><path d="M361.8 277l1.5-2.4-1.1-.2-1.6 2.4z" fill="#9f6"/><path d="M360.2 279.3l1.6-2.3-1.2-.2-1.5 2.3z" fill="#7f8"/><path d="M358.7 281.6l1.5-2.3-1.1-.2-1.6 2.4z" fill="#5fa"/><path d="M357.1 284l1.6-2.4-1.2-.1-1.5 2.4z" fill="#2fd"/><path d="M355.6 286.3l1.5-2.3-1.1-.1-1.6 2.3z" fill="#0ff"/><path d="M354 288.6l1.6-2.3-1.2-.1-1.5 2.4z" fill="#0df"/><path d="M352.5 290.9l1.5-2.3-1.1 0-1.6 2.3z" fill="#0bf"/><path d="M350.9 293.1l1.6-2.2-1.2 0-1.5 2.3z" fill="#09f"/><path d="M349.4 295.3l1.5-2.2-1.1 .1-1.6 2.3z" fill="#07f"/><path d="M347.9 297.5l1.5-2.2-1.2 .2-1.5 2.3z" fill="#05f"/><path d="M346.3 299.5l1.6-2-1.2 .3-1.6 2.2z" fill="#03f"/><path d="M344.8 301.4l1.5-1.9-1.2 .5-1.5 2.2z" fill="#02f"/><path d="M343.2 303.1l1.6-1.7-1.2 .8-1.6 1.9z" fill="#00f"/><path d="M341.7 304.4l1.5-1.3-1.2 1-1.5 1.6z" fill="#00e"/><path d="M340.1 305.1l1.6-.7-1.2 1.3-1.6 .9zM338.6 305.2l1.5-.1-1.2 1.5-1.5-.1z" fill="#00d"/><path d="M337 304.7l1.6 .5-1.2 1.3-1.6-.8z" fill="#00e"/><path d="M335.5 303.9l1.5 .8-1.2 1-1.5-1.1z" fill="#00f"/><path d="M333.9 302.8l1.6 1.1-1.2 .7-1.6-1.3z" fill="#02f"/><path d="M332.4 301.5l1.5 1.3-1.2 .5-1.5-1.4z" fill="#03f"/><path d="M330.8 300.2l1.6 1.3-1.2 .4-1.5-1.5z" fill="#05f"/><path d="M329.3 298.8l1.5 1.4-1.1 .2-1.6-1.4z" fill="#07f"/><path d="M327.7 297.4l1.6 1.4-1.2 .2-1.5-1.6z" fill="#09f"/><path d="M326.2 295.9l1.5 1.5-1.1 0-1.6-1.5z" fill="#0bf"/><path d="M324.6 294.4l1.6 1.5-1.2 0-1.5-1.5z" fill="#0df"/><path d="M323.1 292.9l1.5 1.5-1.1 0-1.6-1.5z" fill="#0ff"/><path d="M321.5 291.4l1.6 1.5-1.2 0-1.5-1.6z" fill="#2fd"/><path d="M320 289.9l1.5 1.5-1.1-.1-1.6-1.5z" fill="#5fa"/><path d="M318.4 288.4l1.6 1.5-1.2-.1-1.5-1.6z" fill="#7f8"/><path d="M316.9 286.8l1.5 1.6-1.1-.2-1.6-1.6z" fill="#9f6"/><path d="M315.3 285.3l1.6 1.5-1.2-.2-1.5-1.5z" fill="#bf4"/><path d="M313.8 283.8l1.5 1.5-1.1-.2-1.6-1.6z" fill="#df2"/><path d="M312.2 282.2l1.6 1.6-1.2-.3-1.5-1.5z" fill="#ff0"/><path d="M310.7 280.7l1.5 1.5-1.1-.2-1.6-1.6z" fill="#fd0"/><path d="M309.2 279.1l1.5 1.6-1.2-.3-1.5-1.6z" fill="#fb0"/><path d="M370.7 265.3l1.5-2.3-1.1-.2-1.6 2.4z" fill="#fa0"/><path d="M369.1 267.7l1.6-2.4-1.2-.1-1.5 2.3z" fill="#fd0"/><path d="M367.6 270l1.5-2.3-1.1-.2-1.6 2.4z" fill="#ff0"/><path d="M366.1 272.4l1.5-2.4-1.2-.1-1.5 2.3z" fill="#df2"/><path d="M364.5 274.7l1.6-2.3-1.2-.2-1.6 2.4z" fill="#bf4"/><path d="M363 277l1.5-2.3-1.2-.1-1.5 2.4z" fill="#9f6"/><path d="M361.4 279.3l1.6-2.3-1.2 0-1.6 2.3z" fill="#7f8"/><path d="M359.9 281.6l1.5-2.3-1.2 0-1.5 2.3z" fill="#5fa"/><path d="M358.3 283.9l1.6-2.3-1.2 0-1.6 2.4z" fill="#3fc"/><path d="M356.8 286.1l1.5-2.2-1.2 .1-1.5 2.3z" fill="#1fe"/><path d="M355.2 288.4l1.6-2.3-1.2 .2-1.6 2.3z" fill="#0ef"/><path d="M353.7 290.6l1.5-2.2-1.2 .2-1.5 2.3z" fill="#0cf"/><path d="M352.1 292.7l1.6-2.1-1.2 .3-1.6 2.2z" fill="#0af"/><path d="M350.6 294.8l1.5-2.1-1.2 .4-1.5 2.2z" fill="#08f"/><path d="M349 296.9l1.6-2.1-1.2 .5-1.5 2.2z" fill="#06f"/><path d="M347.5 298.7l1.5-1.8-1.1 .6-1.6 2z" fill="#05f"/><path d="M345.9 300.4l1.6-1.7-1.2 .8-1.5 1.9z" fill="#03f"/><path d="M344.4 301.9l1.5-1.5-1.1 1-1.6 1.7z" fill="#02f"/><path d="M342.8 303l1.6-1.1-1.2 1.2-1.5 1.3z" fill="#01f"/><path d="M341.3 303.7l1.5-.7-1.1 1.4-1.6 .7zM339.7 303.8l1.6-.1-1.2 1.4-1.5 .1z" fill="#00f"/><path d="M338.2 303.5l1.5 .3-1.1 1.4-1.6-.5z" fill="#01f"/><path d="M336.6 302.9l1.6 .6-1.2 1.2-1.5-.8z" fill="#02f"/><path d="M335.1 302l1.5 .9-1.1 1-1.6-1.1z" fill="#03f"/><path d="M333.5 300.9l1.6 1.1-1.2 .8-1.5-1.3z" fill="#05f"/><path d="M332 299.7l1.5 1.2-1.1 .6-1.6-1.3z" fill="#06f"/><path d="M330.4 298.5l1.6 1.2-1.2 .5-1.5-1.4z" fill="#08f"/><path d="M328.9 297.1l1.5 1.4-1.1 .3-1.6-1.4z" fill="#0af"/><path d="M327.4 295.7l1.5 1.4-1.2 .3-1.5-1.5z" fill="#0cf"/><path d="M325.8 294.3l1.6 1.4-1.2 .2-1.6-1.5z" fill="#0ef"/><path d="M324.3 292.9l1.5 1.4-1.2 .1-1.5-1.5z" fill="#1fe"/><path d="M322.7 291.4l1.6 1.5-1.2 0-1.6-1.5z" fill="#3fc"/><path d="M321.2 289.9l1.5 1.5-1.2 0-1.5-1.5z" fill="#5fa"/><path d="M319.6 288.4l1.6 1.5-1.2 0-1.6-1.5z" fill="#7f8"/><path d="M318.1 286.9l1.5 1.5-1.2 0-1.5-1.6z" fill="#9f6"/><path d="M316.5 285.4l1.6 1.5-1.2-.1-1.6-1.5z" fill="#bf4"/><path d="M315 283.9l1.5 1.5-1.2-.1-1.5-1.5z" fill="#df2"/><path d="M313.4 282.4l1.6 1.5-1.2-.1-1.6-1.6z" fill="#ff0"/><path d="M311.9 280.8l1.5 1.6-1.2-.2-1.5-1.5z" fill="#fd0"/><path d="M310.3 279.3l1.6 1.5-1.2-.1-1.5-1.6zM371.9 265.4l1.5-2.3-1.2-.1-1.5 2.3z" fill="#fa0"/><path d="M370.3 267.7l1.6-2.3-1.2-.1-1.6 2.4z" fill="#fc0"/><path d="M368.8 270l1.5-2.3-1.2 0-1.5 2.3z" fill="#fe0"/><path d="M367.2 272.3l1.6-2.3-1.2 0-1.5 2.4z" fill="#ef1"/><path d="M365.7 274.6l1.5-2.3-1.1 .1-1.6 2.3z" fill="#cf3"/><path d="M364.1 276.9l1.6-2.3-1.2 .1-1.5 2.3z" fill="#af5"/><path d="M362.6 279.2l1.5-2.3-1.1 .1-1.6 2.3z" fill="#8f7"/><path d="M361 281.4l1.6-2.2-1.2 .1-1.5 2.3z" fill="#6f9"/><path d="M359.5 283.7l1.5-2.3-1.1 .2-1.6 2.3z" fill="#4fb"/><path d="M357.9 285.9l1.6-2.2-1.2 .2-1.5 2.2z" fill="#2fd"/><path d="M356.4 288l1.5-2.1-1.1 .2-1.6 2.3z" fill="#0ff"/><path d="M354.8 290.1l1.6-2.1-1.2 .4-1.5 2.2z" fill="#0df"/><path d="M353.3 292.2l1.5-2.1-1.1 .5-1.6 2.1z" fill="#0bf"/><path d="M351.7 294.2l1.6-2-1.2 .5-1.5 2.1z" fill="#09f"/><path d="M350.2 296.1l1.5-1.9-1.1 .6-1.6 2.1z" fill="#08f"/><path d="M348.6 297.8l1.6-1.7-1.2 .8-1.5 1.8z" fill="#06f"/><path d="M347.1 299.3l1.5-1.5-1.1 .9-1.6 1.7z" fill="#05f"/><path d="M345.6 300.6l1.5-1.3-1.2 1.1-1.5 1.5zM344 301.6l1.6-1-1.2 1.3-1.6 1.1z" fill="#03f"/><path d="M342.5 302.2l1.5-.6-1.2 1.4-1.5 .7zM340.9 302.4l1.6-.2-1.2 1.5-1.6 .1z" fill="#02f"/><path d="M339.4 302.3l1.5 .1-1.2 1.4-1.5-.3zM337.8 301.8l1.6 .5-1.2 1.2-1.6-.6z" fill="#03f"/><path d="M336.3 301l1.5 .8-1.2 1.1-1.5-.9z" fill="#05f"/><path d="M334.7 300.1l1.6 .9-1.2 1-1.6-1.1z" fill="#06f"/><path d="M333.2 299.1l1.5 1-1.2 .8-1.5-1.2z" fill="#08f"/><path d="M331.6 297.9l1.6 1.2-1.2 .6-1.6-1.2z" fill="#09f"/><path d="M330.1 296.7l1.5 1.2-1.2 .6-1.5-1.4z" fill="#0bf"/><path d="M328.5 295.4l1.6 1.3-1.2 .4-1.5-1.4z" fill="#0df"/><path d="M327 294l1.5 1.4-1.1 .3-1.6-1.4z" fill="#0ff"/><path d="M325.4 292.6l1.6 1.4-1.2 .3-1.5-1.4z" fill="#2fd"/><path d="M323.9 291.2l1.5 1.4-1.1 .3-1.6-1.5z" fill="#4fb"/><path d="M322.3 289.8l1.6 1.4-1.2 .2-1.5-1.5z" fill="#6f9"/><path d="M320.8 288.3l1.5 1.5-1.1 .1-1.6-1.5z" fill="#8f7"/><path d="M319.2 286.9l1.6 1.4-1.2 .1-1.5-1.5z" fill="#af5"/><path d="M317.7 285.4l1.5 1.5-1.1 0-1.6-1.5z" fill="#cf3"/><path d="M316.1 283.9l1.6 1.5-1.2 0-1.5-1.5z" fill="#ef1"/><path d="M314.6 282.4l1.5 1.5-1.1 0-1.6-1.5z" fill="#fe0"/><path d="M313 280.9l1.6 1.5-1.2 0-1.5-1.6z" fill="#fc0"/><path d="M311.5 279.4l1.5 1.5-1.1-.1-1.6-1.5zM373 265.4l1.6-2.3-1.2 0-1.5 2.3z" fill="#fa0"/><path d="M371.5 267.7l1.5-2.3-1.1 0-1.6 2.3z" fill="#fc0"/><path d="M369.9 270l1.6-2.3-1.2 0-1.5 2.3z" fill="#fe0"/><path d="M368.4 272.2l1.5-2.2-1.1 0-1.6 2.3z" fill="#ef1"/><path d="M366.8 274.5l1.6-2.3-1.2 .1-1.5 2.3z" fill="#cf3"/><path d="M365.3 276.7l1.5-2.2-1.1 .1-1.6 2.3z" fill="#af5"/><path d="M363.8 278.9l1.5-2.2-1.2 .2-1.5 2.3z" fill="#8f7"/><path d="M362.2 281.1l1.6-2.2-1.2 .3-1.6 2.2z" fill="#6f9"/><path d="M360.7 283.3l1.5-2.2-1.2 .3-1.5 2.3z" fill="#5fa"/><path d="M359.1 285.4l1.6-2.1-1.2 .4-1.6 2.2z" fill="#3fc"/><path d="M357.6 287.5l1.5-2.1-1.2 .5-1.5 2.1z" fill="#1fe"/><path d="M356 289.5l1.6-2-1.2 .5-1.6 2.1z" fill="#0ef"/><path d="M354.5 291.5l1.5-2-1.2 .6-1.5 2.1z" fill="#0cf"/><path d="M352.9 293.4l1.6-1.9-1.2 .7-1.6 2z" fill="#0bf"/><path d="M351.4 295.1l1.5-1.7-1.2 .8-1.5 1.9z" fill="#09f"/><path d="M349.8 296.7l1.6-1.6-1.2 1-1.6 1.7z" fill="#08f"/><path d="M348.3 298.1l1.5-1.4-1.2 1.1-1.5 1.5z" fill="#06f"/><path d="M346.7 299.3l1.6-1.2-1.2 1.2-1.5 1.3zM345.2 300.2l1.5-.9-1.1 1.3-1.6 1z" fill="#05f"/><path d="M343.6 300.7l1.6-.5-1.2 1.4-1.5 .6zM342.1 301l1.5-.3-1.1 1.5-1.6 .2z" fill="#04f"/><path d="M340.5 300.9l1.6 .1-1.2 1.4-1.5-.1zM339 300.6l1.5 .3-1.1 1.4-1.6-.5z" fill="#05f"/><path d="M337.4 300l1.6 .6-1.2 1.2-1.5-.8z" fill="#06f"/><path d="M335.9 299.2l1.5 .8-1.1 1-1.6-.9z" fill="#08f"/><path d="M334.3 298.3l1.6 .9-1.2 .9-1.5-1z" fill="#09f"/><path d="M332.8 297.2l1.5 1.1-1.1 .8-1.6-1.2z" fill="#0bf"/><path d="M331.2 296.1l1.6 1.1-1.2 .7-1.5-1.2z" fill="#0cf"/><path d="M329.7 294.9l1.5 1.2-1.1 .6-1.6-1.3z" fill="#0ef"/><path d="M328.1 293.6l1.6 1.3-1.2 .5-1.5-1.4z" fill="#1fe"/><path d="M326.6 292.3l1.5 1.3-1.1 .4-1.6-1.4z" fill="#3fc"/><path d="M325.1 290.9l1.5 1.4-1.2 .3-1.5-1.4z" fill="#5fa"/><path d="M323.5 289.5l1.6 1.4-1.2 .3-1.6-1.4z" fill="#6f9"/><path d="M322 288.1l1.5 1.4-1.2 .3-1.5-1.5z" fill="#8f7"/><path d="M320.4 286.7l1.6 1.4-1.2 .2-1.6-1.4z" fill="#af5"/><path d="M318.9 285.3l1.5 1.4-1.2 .2-1.5-1.5z" fill="#cf3"/><path d="M317.3 283.8l1.6 1.5-1.2 .1-1.6-1.5z" fill="#ef1"/><path d="M315.8 282.4l1.5 1.4-1.2 .1-1.5-1.5z" fill="#fe0"/><path d="M314.2 280.9l1.6 1.5-1.2 0-1.6-1.5z" fill="#fc0"/><path d="M312.7 279.4l1.5 1.5-1.2 0-1.5-1.5z" fill="#fa0"/><path d="M374.2 265.3l1.6-2.3-1.2 .1-1.6 2.3z" fill="#f90"/><path d="M372.7 267.5l1.5-2.2-1.2 .1-1.5 2.3z" fill="#fb0"/><path d="M371.1 269.8l1.6-2.3-1.2 .2-1.6 2.3z" fill="#fd0"/><path d="M369.6 272l1.5-2.2-1.2 .2-1.5 2.2z" fill="#ff0"/><path d="M368 274.2l1.6-2.2-1.2 .2-1.6 2.3z" fill="#df2"/><path d="M366.5 276.4l1.5-2.2-1.2 .3-1.5 2.2z" fill="#bf4"/><path d="M364.9 278.6l1.6-2.2-1.2 .3-1.5 2.2z" fill="#9f6"/><path d="M363.4 280.7l1.5-2.1-1.1 .3-1.6 2.2z" fill="#7f8"/><path d="M361.8 282.8l1.6-2.1-1.2 .4-1.5 2.2z" fill="#6f9"/><path d="M360.3 284.9l1.5-2.1-1.1 .5-1.6 2.1z" fill="#4fb"/><path d="M358.7 286.9l1.6-2-1.2 .5-1.5 2.1z" fill="#2fd"/><path d="M357.2 288.8l1.5-1.9-1.1 .6-1.6 2z" fill="#0ff"/><path d="M355.6 290.7l1.6-1.9-1.2 .7-1.5 2z" fill="#0ef"/><path d="M354.1 292.4l1.5-1.7-1.1 .8-1.6 1.9z" fill="#0cf"/><path d="M352.5 294.1l1.6-1.7-1.2 1-1.5 1.7z" fill="#0bf"/><path d="M351 295.5l1.5-1.4-1.1 1-1.6 1.6z" fill="#09f"/><path d="M349.4 296.8l1.6-1.3-1.2 1.2-1.5 1.4z" fill="#08f"/><path d="M347.9 297.9l1.5-1.1-1.1 1.3-1.6 1.2zM346.3 298.7l1.6-.8-1.2 1.4-1.5 .9z" fill="#07f"/><path d="M344.8 299.3l1.5-.6-1.1 1.5-1.6 .5zM343.3 299.6l1.5-.3-1.2 1.4-1.5 .3z" fill="#06f"/><path d="M341.7 299.5l1.6 .1-1.2 1.4-1.6-.1zM340.2 299.3l1.5 .2-1.2 1.4-1.5-.3z" fill="#07f"/><path d="M338.6 298.8l1.6 .5-1.2 1.3-1.6-.6z" fill="#08f"/><path d="M337.1 298.1l1.5 .7-1.2 1.2-1.5-.8z" fill="#09f"/><path d="M335.5 297.3l1.6 .8-1.2 1.1-1.6-.9z" fill="#0bf"/><path d="M334 296.4l1.5 .9-1.2 1-1.5-1.1z" fill="#0cf"/><path d="M332.4 295.3l1.6 1.1-1.2 .8-1.6-1.1z" fill="#0ef"/><path d="M330.9 294.2l1.5 1.1-1.2 .8-1.5-1.2z" fill="#0ff"/><path d="M329.3 293l1.6 1.2-1.2 .7-1.6-1.3z" fill="#2fd"/><path d="M327.8 291.8l1.5 1.2-1.2 .6-1.5-1.3z" fill="#4fb"/><path d="M326.2 290.5l1.6 1.3-1.2 .5-1.5-1.4z" fill="#6f9"/><path d="M324.7 289.2l1.5 1.3-1.1 .4-1.6-1.4z" fill="#7f8"/><path d="M323.1 287.8l1.6 1.4-1.2 .3-1.5-1.4z" fill="#9f6"/><path d="M321.6 286.5l1.5 1.3-1.1 .3-1.6-1.4z" fill="#bf4"/><path d="M320 285.1l1.6 1.4-1.2 .2-1.5-1.4z" fill="#df2"/><path d="M318.5 283.6l1.5 1.5-1.1 .2-1.6-1.5z" fill="#ff0"/><path d="M316.9 282.2l1.6 1.4-1.2 .2-1.5-1.4z" fill="#fd0"/><path d="M315.4 280.8l1.5 1.4-1.1 .2-1.6-1.5z" fill="#fb0"/><path d="M313.8 279.3l1.6 1.5-1.2 .1-1.5-1.5z" fill="#f90"/><path d="M375.4 265.1l1.5-2.3-1.1 .2-1.6 2.3z" fill="#f80"/><path d="M373.8 267.3l1.6-2.2-1.2 .2-1.5 2.2z" fill="#fa0"/><path d="M372.3 269.5l1.5-2.2-1.1 .2-1.6 2.3z" fill="#fc0"/><path d="M370.7 271.7l1.6-2.2-1.2 .3-1.5 2.2z" fill="#fe0"/><path d="M369.2 273.9l1.5-2.2-1.1 .3-1.6 2.2z" fill="#ef1"/><path d="M367.6 276l1.6-2.1-1.2 .3-1.5 2.2z" fill="#cf3"/><path d="M366.1 278.1l1.5-2.1-1.1 .4-1.6 2.2z" fill="#af5"/><path d="M364.5 280.2l1.6-2.1-1.2 .5-1.5 2.1z" fill="#8f7"/><path d="M363 282.2l1.5-2-1.1 .5-1.6 2.1z" fill="#7f8"/><path d="M361.5 284.2l1.5-2-1.2 .6-1.5 2.1z" fill="#5fa"/><path d="M359.9 286.1l1.6-1.9-1.2 .7-1.6 2z" fill="#3fc"/><path d="M358.4 288l1.5-1.9-1.2 .8-1.5 1.9z" fill="#2fd"/><path d="M356.8 289.8l1.6-1.8-1.2 .8-1.6 1.9z" fill="#0ff"/><path d="M355.3 291.4l1.5-1.6-1.2 .9-1.5 1.7z" fill="#0ef"/><path d="M353.7 292.9l1.6-1.5-1.2 1-1.6 1.7z" fill="#0cf"/><path d="M352.2 294.3l1.5-1.4-1.2 1.2-1.5 1.4z" fill="#0bf"/><path d="M350.6 295.5l1.6-1.2-1.2 1.2-1.6 1.3z" fill="#0af"/><path d="M349.1 296.5l1.5-1-1.2 1.3-1.5 1.1zM347.5 297.3l1.6-.8-1.2 1.4-1.6 .8z" fill="#09f"/><path d="M346 297.8l1.5-.5-1.2 1.4-1.5 .6zM344.4 298.1l1.6-.3-1.2 1.5-1.5 .3z" fill="#08f"/><path d="M342.9 298.2l1.5-.1-1.1 1.5-1.6-.1zM341.3 298l1.6 .2-1.2 1.3-1.5-.2z" fill="#09f"/><path d="M339.8 297.6l1.5 .4-1.1 1.3-1.6-.5z" fill="#0af"/><path d="M338.2 297l1.6 .6-1.2 1.2-1.5-.7z" fill="#0bf"/><path d="M336.7 296.3l1.5 .7-1.1 1.1-1.6-.8z" fill="#0cf"/><path d="M335.1 295.5l1.6 .8-1.2 1-1.5-.9z" fill="#0ef"/><path d="M333.6 294.5l1.5 1-1.1 .9-1.6-1.1z" fill="#0ff"/><path d="M332 293.5l1.6 1-1.2 .8-1.5-1.1z" fill="#2fd"/><path d="M330.5 292.4l1.5 1.1-1.1 .7-1.6-1.2z" fill="#3fc"/><path d="M328.9 291.2l1.6 1.2-1.2 .6-1.5-1.2z" fill="#5fa"/><path d="M327.4 290l1.5 1.2-1.1 .6-1.6-1.3z" fill="#7f8"/><path d="M325.8 288.7l1.6 1.3-1.2 .5-1.5-1.3z" fill="#8f7"/><path d="M324.3 287.4l1.5 1.3-1.1 .5-1.6-1.4z" fill="#af5"/><path d="M322.8 286.1l1.5 1.3-1.2 .4-1.5-1.3z" fill="#cf3"/><path d="M321.2 284.7l1.6 1.4-1.2 .4-1.6-1.4z" fill="#ef1"/><path d="M319.7 283.4l1.5 1.3-1.2 .4-1.5-1.5z" fill="#fe0"/><path d="M318.1 282l1.6 1.4-1.2 .2-1.6-1.4z" fill="#fc0"/><path d="M316.6 280.6l1.5 1.4-1.2 .2-1.5-1.4z" fill="#fa0"/><path d="M315 279.1l1.6 1.5-1.2 .2-1.6-1.5z" fill="#f80"/><path d="M376.6 264.8l1.5-2.2-1.2 .2-1.5 2.3z" fill="#f70"/><path d="M375 267l1.6-2.2-1.2 .3-1.6 2.2z" fill="#f90"/><path d="M373.5 269.1l1.5-2.1-1.2 .3-1.5 2.2z" fill="#fb0"/><path d="M371.9 271.3l1.6-2.2-1.2 .4-1.6 2.2z" fill="#fd0"/><path d="M370.4 273.4l1.5-2.1-1.2 .4-1.5 2.2z" fill="#ff0"/><path d="M368.8 275.5l1.6-2.1-1.2 .5-1.6 2.1z" fill="#df2"/><path d="M367.3 277.6l1.5-2.1-1.2 .5-1.5 2.1z" fill="#bf4"/><path d="M365.7 279.6l1.6-2-1.2 .5-1.6 2.1z" fill="#af5"/><path d="M364.2 281.5l1.5-1.9-1.2 .6-1.5 2z" fill="#8f7"/><path d="M362.6 283.5l1.6-2-1.2 .7-1.5 2z" fill="#6f9"/><path d="M361.1 285.3l1.5-1.8-1.1 .7-1.6 1.9z" fill="#5fa"/><path d="M359.5 287.1l1.6-1.8-1.2 .8-1.5 1.9z" fill="#3fc"/><path d="M358 288.8l1.5-1.7-1.1 .9-1.6 1.8z" fill="#2fd"/><path d="M356.4 290.3l1.6-1.5-1.2 1-1.5 1.6z" fill="#0ff"/><path d="M354.9 291.8l1.5-1.5-1.1 1.1-1.6 1.5z" fill="#0ef"/><path d="M353.3 293.1l1.6-1.3-1.2 1.1-1.5 1.4z" fill="#0df"/><path d="M351.8 294.2l1.5-1.1-1.1 1.2-1.6 1.2z" fill="#0cf"/><path d="M350.2 295.1l1.6-.9-1.2 1.3-1.5 1zM348.7 295.9l1.5-.8-1.1 1.4-1.6 .8zM347.1 296.4l1.6-.5-1.2 1.4-1.5 .5zM345.6 296.7l1.5-.3-1.1 1.4-1.6 .3zM344 296.8l1.6-.1-1.2 1.4-1.5 .1zM342.5 296.6l1.5 .2-1.1 1.4-1.6-.2z" fill="#0bf"/><path d="M341 296.3l1.5 .3-1.2 1.4-1.5-.4z" fill="#0cf"/><path d="M339.4 295.8l1.6 .5-1.2 1.3-1.6-.6z" fill="#0df"/><path d="M337.9 295.2l1.5 .6-1.2 1.2-1.5-.7z" fill="#0ef"/><path d="M336.3 294.5l1.6 .7-1.2 1.1-1.6-.8z" fill="#0ff"/><path d="M334.8 293.6l1.5 .9-1.2 1-1.5-1z" fill="#2fd"/><path d="M333.2 292.6l1.6 1-1.2 .9-1.6-1z" fill="#3fc"/><path d="M331.7 291.6l1.5 1-1.2 .9-1.5-1.1z" fill="#5fa"/><path d="M330.1 290.5l1.6 1.1-1.2 .8-1.6-1.2z" fill="#6f9"/><path d="M328.6 289.4l1.5 1.1-1.2 .7-1.5-1.2z" fill="#8f7"/><path d="M327 288.2l1.6 1.2-1.2 .6-1.6-1.3z" fill="#af5"/><path d="M325.5 286.9l1.5 1.3-1.2 .5-1.5-1.3z" fill="#bf4"/><path d="M323.9 285.6l1.6 1.3-1.2 .5-1.5-1.3z" fill="#df2"/><path d="M322.4 284.3l1.5 1.3-1.1 .5-1.6-1.4z" fill="#ff0"/><path d="M320.8 283l1.6 1.3-1.2 .4-1.5-1.3z" fill="#fd0"/><path d="M319.3 281.7l1.5 1.3-1.1 .4-1.6-1.4z" fill="#fb0"/><path d="M317.7 280.3l1.6 1.4-1.2 .3-1.5-1.4z" fill="#f90"/><path d="M316.2 278.9l1.5 1.4-1.1 .3-1.6-1.5z" fill="#f70"/><path d="M377.7 264.4l1.6-2.2-1.2 .4-1.5 2.2z" fill="#f60"/><path d="M376.2 266.6l1.5-2.2-1.1 .4-1.6 2.2z" fill="#f80"/><path d="M374.6 268.7l1.6-2.1-1.2 .4-1.5 2.1z" fill="#fa0"/><path d="M373.1 270.8l1.5-2.1-1.1 .4-1.6 2.2z" fill="#fc0"/><path d="M371.5 272.9l1.6-2.1-1.2 .5-1.5 2.1z" fill="#fe0"/><path d="M370 274.9l1.5-2-1.1 .5-1.6 2.1z" fill="#ef1"/><path d="M368.4 276.9l1.6-2-1.2 .6-1.5 2.1z" fill="#df2"/><path d="M366.9 278.9l1.5-2-1.1 .7-1.6 2z" fill="#bf4"/><path d="M365.3 280.8l1.6-1.9-1.2 .7-1.5 1.9z" fill="#9f6"/><path d="M363.8 282.6l1.5-1.8-1.1 .7-1.6 2z" fill="#8f7"/><path d="M362.2 284.4l1.6-1.8-1.2 .9-1.5 1.8z" fill="#6f9"/><path d="M360.7 286.1l1.5-1.7-1.1 .9-1.6 1.8z" fill="#5fa"/><path d="M359.2 287.7l1.5-1.6-1.2 1-1.5 1.7z" fill="#3fc"/><path d="M357.6 289.2l1.6-1.5-1.2 1.1-1.6 1.5z" fill="#2fd"/><path d="M356.1 290.5l1.5-1.3-1.2 1.1-1.5 1.5z" fill="#1fe"/><path d="M354.5 291.8l1.6-1.3-1.2 1.3-1.6 1.3z" fill="#0ff"/><path d="M353 292.8l1.5-1-1.2 1.3-1.5 1.1z" fill="#0ef"/><path d="M351.4 293.7l1.6-.9-1.2 1.4-1.6 .9zM349.9 294.4l1.5-.7-1.2 1.4-1.5 .8zM348.3 294.9l1.6-.5-1.2 1.5-1.6 .5zM346.8 295.2l1.5-.3-1.2 1.5-1.5 .3zM345.2 295.3l1.6-.1-1.2 1.5-1.6 .1zM343.7 295.3l1.5 0-1.2 1.5-1.5-.2z" fill="#0df"/><path d="M342.1 295l1.6 .3-1.2 1.3-1.5-.3z" fill="#0ef"/><path d="M340.6 294.6l1.5 .4-1.1 1.3-1.6-.5z" fill="#0ff"/><path d="M339 294.1l1.6 .5-1.2 1.2-1.5-.6z" fill="#1fe"/><path d="M337.5 293.4l1.5 .7-1.1 1.1-1.6-.7z" fill="#2fd"/><path d="M335.9 292.6l1.6 .8-1.2 1.1-1.5-.9z" fill="#3fc"/><path d="M334.4 291.7l1.5 .9-1.1 1-1.6-1z" fill="#5fa"/><path d="M332.8 290.8l1.6 .9-1.2 .9-1.5-1z" fill="#6f9"/><path d="M331.3 289.7l1.5 1.1-1.1 .8-1.6-1.1z" fill="#8f7"/><path d="M329.7 288.7l1.6 1-1.2 .8-1.5-1.1z" fill="#9f6"/><path d="M328.2 287.5l1.5 1.2-1.1 .7-1.6-1.2z" fill="#bf4"/><path d="M326.6 286.3l1.6 1.2-1.2 .7-1.5-1.3z" fill="#df2"/><path d="M325.1 285.1l1.5 1.2-1.1 .6-1.6-1.3z" fill="#ef1"/><path d="M323.5 283.9l1.6 1.2-1.2 .5-1.5-1.3z" fill="#fe0"/><path d="M322 282.6l1.5 1.3-1.1 .4-1.6-1.3z" fill="#fc0"/><path d="M320.5 281.3l1.5 1.3-1.2 .4-1.5-1.3z" fill="#fa0"/><path d="M318.9 279.9l1.6 1.4-1.2 .4-1.6-1.4z" fill="#f80"/><path d="M317.4 278.6l1.5 1.3-1.2 .4-1.5-1.4zM378.9 264l1.5-2.2-1.1 .4-1.6 2.2z" fill="#f60"/><path d="M377.4 266.1l1.5-2.1-1.2 .4-1.5 2.2z" fill="#f70"/><path d="M375.8 268.2l1.6-2.1-1.2 .5-1.6 2.1z" fill="#f90"/><path d="M374.3 270.2l1.5-2-1.2 .5-1.5 2.1z" fill="#fb0"/><path d="M372.7 272.3l1.6-2.1-1.2 .6-1.6 2.1z" fill="#fd0"/><path d="M371.2 274.2l1.5-1.9-1.2 .6-1.5 2z" fill="#ff0"/><path d="M369.6 276.2l1.6-2-1.2 .7-1.6 2z" fill="#ef1"/><path d="M368.1 278.1l1.5-1.9-1.2 .7-1.5 2z" fill="#cf3"/><path d="M366.5 279.9l1.6-1.8-1.2 .8-1.6 1.9z" fill="#bf4"/><path d="M365 281.7l1.5-1.8-1.2 .9-1.5 1.8z" fill="#9f6"/><path d="M363.4 283.4l1.6-1.7-1.2 .9-1.6 1.8z" fill="#8f7"/><path d="M361.9 285l1.5-1.6-1.2 1-1.5 1.7z" fill="#6f9"/><path d="M360.3 286.6l1.6-1.6-1.2 1.1-1.5 1.6z" fill="#5fa"/><path d="M358.8 288l1.5-1.4-1.1 1.1-1.6 1.5z" fill="#4fb"/><path d="M357.2 289.3l1.6-1.3-1.2 1.2-1.5 1.3z" fill="#3fc"/><path d="M355.7 290.4l1.5-1.1-1.1 1.2-1.6 1.3z" fill="#2fd"/><path d="M354.1 291.4l1.6-1-1.2 1.4-1.5 1z" fill="#1fe"/><path d="M352.6 292.3l1.5-.9-1.1 1.4-1.6 .9zM351 293l1.6-.7-1.2 1.4-1.5 .7zM349.5 293.5l1.5-.5-1.1 1.4-1.6 .5zM347.9 293.8l1.6-.3-1.2 1.4-1.5 .3zM346.4 293.9l1.5-.1-1.1 1.4-1.6 .1zM344.8 293.9l1.6 0-1.2 1.4-1.5 0z" fill="#0ff"/><path d="M343.3 293.7l1.5 .2-1.1 1.4-1.6-.3z" fill="#1fe"/><path d="M341.7 293.3l1.6 .4-1.2 1.3-1.5-.4z" fill="#2fd"/><path d="M340.2 292.9l1.5 .4-1.1 1.3-1.6-.5z" fill="#3fc"/><path d="M338.7 292.3l1.5 .6-1.2 1.2-1.5-.7z" fill="#4fb"/><path d="M337.1 291.6l1.6 .7-1.2 1.1-1.6-.8z" fill="#5fa"/><path d="M335.6 290.8l1.5 .8-1.2 1-1.5-.9z" fill="#6f9"/><path d="M334 289.9l1.6 .9-1.2 .9-1.6-.9z" fill="#8f7"/><path d="M332.5 288.9l1.5 1-1.2 .9-1.5-1.1z" fill="#9f6"/><path d="M330.9 287.9l1.6 1-1.2 .8-1.6-1z" fill="#bf4"/><path d="M329.4 286.8l1.5 1.1-1.2 .8-1.5-1.2z" fill="#cf3"/><path d="M327.8 285.7l1.6 1.1-1.2 .7-1.6-1.2z" fill="#ef1"/><path d="M326.3 284.5l1.5 1.2-1.2 .6-1.5-1.2z" fill="#ff0"/><path d="M324.7 283.3l1.6 1.2-1.2 .6-1.6-1.2z" fill="#fd0"/><path d="M323.2 282l1.5 1.3-1.2 .6-1.5-1.3z" fill="#fb0"/><path d="M321.6 280.8l1.6 1.2-1.2 .6-1.5-1.3z" fill="#f90"/><path d="M320.1 279.5l1.5 1.3-1.1 .5-1.6-1.4z" fill="#f70"/><path d="M318.5 278.2l1.6 1.3-1.2 .4-1.5-1.3z" fill="#f60"/><path d="M380.1 263.5l1.5-2.1-1.2 .4-1.5 2.2z" fill="#f40"/><path d="M378.5 265.5l1.6-2-1.2 .5-1.5 2.1z" fill="#f60"/><path d="M377 267.6l1.5-2.1-1.1 .6-1.6 2.1z" fill="#f80"/><path d="M375.4 269.6l1.6-2-1.2 .6-1.5 2z" fill="#fa0"/><path d="M373.9 271.6l1.5-2-1.1 .6-1.6 2.1z" fill="#fc0"/><path d="M372.3 273.5l1.6-1.9-1.2 .7-1.5 1.9z" fill="#fd0"/><path d="M370.8 275.4l1.5-1.9-1.1 .7-1.6 2z" fill="#ff0"/><path d="M369.2 277.2l1.6-1.8-1.2 .8-1.5 1.9z" fill="#ef1"/><path d="M367.7 279l1.5-1.8-1.1 .9-1.6 1.8z" fill="#cf3"/><path d="M366.1 280.7l1.6-1.7-1.2 .9-1.5 1.8z" fill="#bf4"/><path d="M364.6 282.4l1.5-1.7-1.1 1-1.6 1.7z" fill="#9f6"/><path d="M363 283.9l1.6-1.5-1.2 1-1.5 1.6z" fill="#8f7"/><path d="M361.5 285.4l1.5-1.5-1.1 1.1-1.6 1.6z" fill="#7f8"/><path d="M359.9 286.7l1.6-1.3-1.2 1.2-1.5 1.4z" fill="#6f9"/><path d="M358.4 288l1.5-1.3-1.1 1.3-1.6 1.3z" fill="#5fa"/><path d="M356.9 289.1l1.5-1.1-1.2 1.3-1.5 1.1z" fill="#4fb"/><path d="M355.3 290l1.6-.9-1.2 1.3-1.6 1z" fill="#3fc"/><path d="M353.8 290.9l1.5-.9-1.2 1.4-1.5 .9zM352.2 291.5l1.6-.6-1.2 1.4-1.6 .7zM350.7 292l1.5-.5-1.2 1.5-1.5 .5zM349.1 292.3l1.6-.3-1.2 1.5-1.6 .3zM347.6 292.5l1.5-.2-1.2 1.5-1.5 .1zM346 292.5l1.6 0-1.2 1.4-1.6 0z" fill="#2fd"/><path d="M344.5 292.3l1.5 .2-1.2 1.4-1.5-.2z" fill="#3fc"/><path d="M342.9 292.1l1.6 .2-1.2 1.4-1.6-.4z" fill="#4fb"/><path d="M341.4 291.6l1.5 .5-1.2 1.2-1.5-.4z" fill="#5fa"/><path d="M339.8 291.1l1.6 .5-1.2 1.3-1.5-.6z" fill="#6f9"/><path d="M338.3 290.5l1.5 .6-1.1 1.2-1.6-.7z" fill="#7f8"/><path d="M336.7 289.7l1.6 .8-1.2 1.1-1.5-.8z" fill="#8f7"/><path d="M335.2 288.9l1.5 .8-1.1 1.1-1.6-.9z" fill="#9f6"/><path d="M333.6 288l1.6 .9-1.2 1-1.5-1z" fill="#bf4"/><path d="M332.1 287l1.5 1-1.1 .9-1.6-1z" fill="#cf3"/><path d="M330.5 286l1.6 1-1.2 .9-1.5-1.1z" fill="#ef1"/><path d="M329 284.9l1.5 1.1-1.1 .8-1.6-1.1z" fill="#ff0"/><path d="M327.4 283.8l1.6 1.1-1.2 .8-1.5-1.2z" fill="#fd0"/><path d="M325.9 282.7l1.5 1.1-1.1 .7-1.6-1.2z" fill="#fc0"/><path d="M324.3 281.5l1.6 1.2-1.2 .6-1.5-1.3z" fill="#fa0"/><path d="M322.8 280.2l1.5 1.3-1.1 .5-1.6-1.2z" fill="#f80"/><path d="M321.2 279l1.6 1.2-1.2 .6-1.5-1.3z" fill="#f60"/><path d="M319.7 277.7l1.5 1.3-1.1 .5-1.6-1.3z" fill="#f40"/><path d="M381.2 262.9l1.6-2-1.2 .5-1.5 2.1z" fill="#f30"/><path d="M379.7 264.9l1.5-2-1.1 .6-1.6 2z" fill="#f50"/><path d="M378.1 266.9l1.6-2-1.2 .6-1.5 2.1z" fill="#f70"/><path d="M376.6 268.9l1.5-2-1.1 .7-1.6 2z" fill="#f90"/><path d="M375.1 270.8l1.5-1.9-1.2 .7-1.5 2z" fill="#fa0"/><path d="M373.5 272.7l1.6-1.9-1.2 .8-1.6 1.9z" fill="#fc0"/><path d="M372 274.6l1.5-1.9-1.2 .8-1.5 1.9z" fill="#fd0"/><path d="M370.4 276.3l1.6-1.7-1.2 .8-1.6 1.8z" fill="#ff0"/><path d="M368.9 278.1l1.5-1.8-1.2 .9-1.5 1.8z" fill="#ef1"/><path d="M367.3 279.7l1.6-1.6-1.2 .9-1.6 1.7z" fill="#cf3"/><path d="M365.8 281.3l1.5-1.6-1.2 1-1.5 1.7z" fill="#bf4"/><path d="M364.2 282.8l1.6-1.5-1.2 1.1-1.6 1.5z" fill="#af5"/><path d="M362.7 284.2l1.5-1.4-1.2 1.1-1.5 1.5z" fill="#8f7"/><path d="M361.1 285.5l1.6-1.3-1.2 1.2-1.6 1.3z" fill="#7f8"/><path d="M359.6 286.7l1.5-1.2-1.2 1.2-1.5 1.3zM358 287.7l1.6-1-1.2 1.3-1.5 1.1z" fill="#6f9"/><path d="M356.5 288.6l1.5-.9-1.1 1.4-1.6 .9zM354.9 289.4l1.6-.8-1.2 1.4-1.5 .9z" fill="#5fa"/><path d="M353.4 290.1l1.5-.7-1.1 1.5-1.6 .6zM351.8 290.5l1.6-.4-1.2 1.4-1.5 .5zM350.3 290.9l1.5-.4-1.1 1.5-1.6 .3zM348.7 291.1l1.6-.2-1.2 1.4-1.5 .2z" fill="#4fb"/><path d="M347.2 291.1l1.5 0-1.1 1.4-1.6 0zM345.6 291l1.6 .1-1.2 1.4-1.5-.2z" fill="#5fa"/><path d="M344.1 290.7l1.5 .3-1.1 1.3-1.6-.2zM342.5 290.4l1.6 .3-1.2 1.4-1.5-.5z" fill="#6f9"/><path d="M341 289.9l1.5 .5-1.1 1.2-1.6-.5z" fill="#7f8"/><path d="M339.4 289.3l1.6 .6-1.2 1.2-1.5-.6z" fill="#8f7"/><path d="M337.9 288.6l1.5 .7-1.1 1.2-1.6-.8z" fill="#af5"/><path d="M336.4 287.9l1.5 .7-1.2 1.1-1.5-.8z" fill="#bf4"/><path d="M334.8 287l1.6 .9-1.2 1-1.6-.9z" fill="#cf3"/><path d="M333.3 286.1l1.5 .9-1.2 1-1.5-1z" fill="#ef1"/><path d="M331.7 285.2l1.6 .9-1.2 .9-1.6-1z" fill="#ff0"/><path d="M330.2 284.1l1.5 1.1-1.2 .8-1.5-1.1z" fill="#fd0"/><path d="M328.6 283.1l1.6 1-1.2 .8-1.6-1.1z" fill="#fc0"/><path d="M327.1 282l1.5 1.1-1.2 .7-1.5-1.1z" fill="#fa0"/><path d="M325.5 280.8l1.6 1.2-1.2 .7-1.6-1.2z" fill="#f90"/><path d="M324 279.6l1.5 1.2-1.2 .7-1.5-1.3z" fill="#f70"/><path d="M322.4 278.4l1.6 1.2-1.2 .6-1.6-1.2z" fill="#f50"/><path d="M320.9 277.2l1.5 1.2-1.2 .6-1.5-1.3z" fill="#f30"/><path d="M382.4 262.3l1.6-2-1.2 .6-1.6 2z" fill="#f20"/><path d="M380.9 264.3l1.5-2-1.2 .6-1.5 2z" fill="#f40"/><path d="M379.3 266.2l1.6-1.9-1.2 .6-1.6 2z" fill="#f60"/><path d="M377.8 268.2l1.5-2-1.2 .7-1.5 2z" fill="#f70"/><path d="M376.2 270l1.6-1.8-1.2 .7-1.5 1.9z" fill="#f90"/><path d="M374.7 271.9l1.5-1.9-1.1 .8-1.6 1.9z" fill="#fa0"/><path d="M373.1 273.7l1.6-1.8-1.2 .8-1.5 1.9z" fill="#fc0"/><path d="M371.6 275.4l1.5-1.7-1.1 .9-1.6 1.7z" fill="#fd0"/><path d="M370 277l1.6-1.6-1.2 .9-1.5 1.8z" fill="#ff0"/><path d="M368.5 278.6l1.5-1.6-1.1 1.1-1.6 1.6z" fill="#ef1"/><path d="M366.9 280.2l1.6-1.6-1.2 1.1-1.5 1.6z" fill="#df2"/><path d="M365.4 281.6l1.5-1.4-1.1 1.1-1.6 1.5z" fill="#bf4"/><path d="M363.8 282.9l1.6-1.3-1.2 1.2-1.5 1.4z" fill="#af5"/><path d="M362.3 284.2l1.5-1.3-1.1 1.3-1.6 1.3z" fill="#9f6"/><path d="M360.7 285.3l1.6-1.1-1.2 1.3-1.5 1.2zM359.2 286.3l1.5-1-1.1 1.4-1.6 1z" fill="#8f7"/><path d="M357.6 287.2l1.6-.9-1.2 1.4-1.5 .9zM356.1 288l1.5-.8-1.1 1.4-1.6 .8z" fill="#7f8"/><path d="M354.6 288.6l1.5-.6-1.2 1.4-1.5 .7zM353 289.1l1.6-.5-1.2 1.5-1.6 .4zM351.5 289.4l1.5-.3-1.2 1.4-1.5 .4zM349.9 289.6l1.6-.2-1.2 1.5-1.6 .2z" fill="#6f9"/><path d="M348.4 289.7l1.5-.1-1.2 1.5-1.5 0zM346.8 289.6l1.6 .1-1.2 1.4-1.6-.1z" fill="#7f8"/><path d="M345.3 289.4l1.5 .2-1.2 1.4-1.5-.3zM343.7 289.1l1.6 .3-1.2 1.3-1.6-.3z" fill="#8f7"/><path d="M342.2 288.7l1.5 .4-1.2 1.3-1.5-.5z" fill="#9f6"/><path d="M340.6 288.1l1.6 .6-1.2 1.2-1.6-.6z" fill="#af5"/><path d="M339.1 287.5l1.5 .6-1.2 1.2-1.5-.7z" fill="#bf4"/><path d="M337.5 286.8l1.6 .7-1.2 1.1-1.5-.7z" fill="#df2"/><path d="M336 286l1.5 .8-1.1 1.1-1.6-.9z" fill="#ef1"/><path d="M334.4 285.2l1.6 .8-1.2 1-1.5-.9z" fill="#ff0"/><path d="M332.9 284.3l1.5 .9-1.1 .9-1.6-.9z" fill="#fd0"/><path d="M331.3 283.3l1.6 1-1.2 .9-1.5-1.1z" fill="#fc0"/><path d="M329.8 282.3l1.5 1-1.1 .8-1.6-1z" fill="#fa0"/><path d="M328.2 281.2l1.6 1.1-1.2 .8-1.5-1.1z" fill="#f90"/><path d="M326.7 280.1l1.5 1.1-1.1 .8-1.6-1.2z" fill="#f70"/><path d="M325.1 279l1.6 1.1-1.2 .7-1.5-1.2z" fill="#f60"/><path d="M323.6 277.8l1.5 1.2-1.1 .6-1.6-1.2z" fill="#f40"/><path d="M322 276.6l1.6 1.2-1.2 .6-1.5-1.2z" fill="#f20"/><path d="M383.6 261.6l1.5-2-1.1 .7-1.6 2z" fill="#f10"/><path d="M382 263.6l1.6-2-1.2 .7-1.5 2z" fill="#f30"/><path d="M380.5 265.5l1.5-1.9-1.1 .7-1.6 1.9z" fill="#f40"/><path d="M378.9 267.4l1.6-1.9-1.2 .7-1.5 2z" fill="#f60"/><path d="M377.4 269.2l1.5-1.8-1.1 .8-1.6 1.8z" fill="#f70"/><path d="M375.8 271l1.6-1.8-1.2 .8-1.5 1.9z" fill="#f90"/><path d="M374.3 272.7l1.5-1.7-1.1 .9-1.6 1.8z" fill="#fa0"/><path d="M372.8 274.4l1.5-1.7-1.2 1-1.5 1.7z" fill="#fc0"/><path d="M371.2 276l1.6-1.6-1.2 1-1.6 1.6z" fill="#fd0"/><path d="M369.7 277.5l1.5-1.5-1.2 1-1.5 1.6z" fill="#ff0"/><path d="M368.1 279l1.6-1.5-1.2 1.1-1.6 1.6z" fill="#ef1"/><path d="M366.6 280.4l1.5-1.4-1.2 1.2-1.5 1.4z" fill="#df2"/><path d="M365 281.7l1.6-1.3-1.2 1.2-1.6 1.3z" fill="#cf3"/><path d="M363.5 282.9l1.5-1.2-1.2 1.2-1.5 1.3z" fill="#bf4"/><path d="M361.9 284l1.6-1.1-1.2 1.3-1.6 1.1zM360.4 285l1.5-1-1.2 1.3-1.5 1z" fill="#af5"/><path d="M358.8 285.8l1.6-.8-1.2 1.3-1.6 .9zM357.3 286.5l1.5-.7-1.2 1.4-1.5 .8z" fill="#9f6"/><path d="M355.7 287.2l1.6-.7-1.2 1.5-1.5 .6zM354.2 287.6l1.5-.4-1.1 1.4-1.6 .5zM352.6 288l1.6-.4-1.2 1.5-1.5 .3zM351.1 288.2l1.5-.2-1.1 1.4-1.6 .2z" fill="#8f7"/><path d="M349.5 288.3l1.6-.1-1.2 1.4-1.5 .1zM348 288.2l1.5 .1-1.1 1.4-1.6-.1z" fill="#9f6"/><path d="M346.4 288.1l1.6 .1-1.2 1.4-1.5-.2zM344.9 287.8l1.5 .3-1.1 1.3-1.6-.3z" fill="#af5"/><path d="M343.3 287.4l1.6 .4-1.2 1.3-1.5-.4z" fill="#bf4"/><path d="M341.8 286.9l1.5 .5-1.1 1.3-1.6-.6z" fill="#cf3"/><path d="M340.2 286.4l1.6 .5-1.2 1.2-1.5-.6z" fill="#df2"/><path d="M338.7 285.7l1.5 .7-1.1 1.1-1.6-.7z" fill="#ef1"/><path d="M337.1 285l1.6 .7-1.2 1.1-1.5-.8z" fill="#ff0"/><path d="M335.6 284.2l1.5 .8-1.1 1-1.6-.8z" fill="#fd0"/><path d="M334.1 283.3l1.5 .9-1.2 1-1.5-.9z" fill="#fc0"/><path d="M332.5 282.4l1.6 .9-1.2 1-1.6-1z" fill="#fa0"/><path d="M331 281.4l1.5 1-1.2 .9-1.5-1z" fill="#f90"/><path d="M329.4 280.4l1.6 1-1.2 .9-1.6-1.1z" fill="#f70"/><path d="M327.9 279.3l1.5 1.1-1.2 .8-1.5-1.1z" fill="#f60"/><path d="M326.3 278.2l1.6 1.1-1.2 .8-1.6-1.1z" fill="#f40"/><path d="M324.8 277.1l1.5 1.1-1.2 .8-1.5-1.2z" fill="#f30"/><path d="M323.2 276l1.6 1.1-1.2 .7-1.6-1.2z" fill="#f10"/><path d="M384.8 260.9l1.5-2-1.2 .7-1.5 2z" fill="#f00"/><path d="M383.2 262.8l1.6-1.9-1.2 .7-1.6 2z" fill="#f10"/><path d="M381.7 264.7l1.5-1.9-1.2 .8-1.5 1.9z" fill="#f30"/><path d="M380.1 266.5l1.6-1.8-1.2 .8-1.6 1.9z" fill="#f40"/><path d="M378.6 268.3l1.5-1.8-1.2 .9-1.5 1.8z" fill="#f60"/><path d="M377 270l1.6-1.7-1.2 .9-1.6 1.8z" fill="#f70"/><path d="M375.5 271.7l1.5-1.7-1.2 1-1.5 1.7z" fill="#f90"/><path d="M373.9 273.3l1.6-1.6-1.2 1-1.5 1.7z" fill="#fa0"/><path d="M372.4 274.9l1.5-1.6-1.1 1.1-1.6 1.6z" fill="#fc0"/><path d="M370.8 276.4l1.6-1.5-1.2 1.1-1.5 1.5z" fill="#fd0"/><path d="M369.3 277.8l1.5-1.4-1.1 1.1-1.6 1.5z" fill="#fe0"/><path d="M367.7 279.2l1.6-1.4-1.2 1.2-1.5 1.4z" fill="#ff0"/><path d="M366.2 280.4l1.5-1.2-1.1 1.2-1.6 1.3z" fill="#ef1"/><path d="M364.6 281.6l1.6-1.2-1.2 1.3-1.5 1.2z" fill="#df2"/><path d="M363.1 282.6l1.5-1-1.1 1.3-1.6 1.1zM361.5 283.6l1.6-1-1.2 1.4-1.5 1z" fill="#cf3"/><path d="M360 284.4l1.5-.8-1.1 1.4-1.6 .8zM358.4 285.1l1.6-.7-1.2 1.4-1.5 .7zM356.9 285.7l1.5-.6-1.1 1.4-1.6 .7z" fill="#bf4"/><path d="M355.3 286.2l1.6-.5-1.2 1.5-1.5 .4zM353.8 286.5l1.5-.3-1.1 1.4-1.6 .4z" fill="#af5"/><path d="M352.3 286.7l1.5-.2-1.2 1.5-1.5 .2zM350.7 286.8l1.6-.1-1.2 1.5-1.6 .1zM349.2 286.8l1.5 0-1.2 1.5-1.5-.1z" fill="#bf4"/><path d="M347.6 286.7l1.6 .1-1.2 1.4-1.6-.1zM346.1 286.5l1.5 .2-1.2 1.4-1.5-.3z" fill="#cf3"/><path d="M344.5 286.1l1.6 .4-1.2 1.3-1.6-.4z" fill="#df2"/><path d="M343 285.7l1.5 .4-1.2 1.3-1.5-.5z" fill="#ef1"/><path d="M341.4 285.2l1.6 .5-1.2 1.2-1.6-.5z" fill="#ff0"/><path d="M339.9 284.6l1.5 .6-1.2 1.2-1.5-.7z" fill="#fe0"/><path d="M338.3 283.9l1.6 .7-1.2 1.1-1.6-.7z" fill="#fd0"/><path d="M336.8 283.1l1.5 .8-1.2 1.1-1.5-.8z" fill="#fc0"/><path d="M335.2 282.3l1.6 .8-1.2 1.1-1.5-.9z" fill="#fa0"/><path d="M333.7 281.4l1.5 .9-1.1 1-1.6-.9z" fill="#f90"/><path d="M332.1 280.5l1.6 .9-1.2 1-1.5-1z" fill="#f70"/><path d="M330.6 279.6l1.5 .9-1.1 .9-1.6-1z" fill="#f60"/><path d="M329 278.5l1.6 1.1-1.2 .8-1.5-1.1z" fill="#f40"/><path d="M327.5 277.5l1.5 1-1.1 .8-1.6-1.1z" fill="#f30"/><path d="M325.9 276.4l1.6 1.1-1.2 .7-1.5-1.1z" fill="#f10"/><path d="M324.4 275.3l1.5 1.1-1.1 .7-1.6-1.1z" fill="#f00"/><path d="M385.9 260.1l1.6-1.9-1.2 .7-1.5 2z" fill="#d00"/><path d="M384.4 262l1.5-1.9-1.1 .8-1.6 1.9z" fill="#f00"/><path d="M382.8 263.8l1.6-1.8-1.2 .8-1.5 1.9z" fill="#f10"/><path d="M381.3 265.6l1.5-1.8-1.1 .9-1.6 1.8z" fill="#f30"/><path d="M379.7 267.3l1.6-1.7-1.2 .9-1.5 1.8z" fill="#f40"/><path d="M378.2 269l1.5-1.7-1.1 1-1.6 1.7z" fill="#f60"/><path d="M376.6 270.7l1.6-1.7-1.2 1-1.5 1.7z" fill="#f70"/><path d="M375.1 272.3l1.5-1.6-1.1 1-1.6 1.6z" fill="#f90"/><path d="M373.5 273.8l1.6-1.5-1.2 1-1.5 1.6z" fill="#fa0"/><path d="M372 275.2l1.5-1.4-1.1 1.1-1.6 1.5z" fill="#fb0"/><path d="M370.5 276.6l1.5-1.4-1.2 1.2-1.5 1.4z" fill="#fc0"/><path d="M368.9 277.9l1.6-1.3-1.2 1.2-1.6 1.4z" fill="#fd0"/><path d="M367.4 279.1l1.5-1.2-1.2 1.3-1.5 1.2z" fill="#fe0"/><path d="M365.8 280.2l1.6-1.1-1.2 1.3-1.6 1.2z" fill="#ff0"/><path d="M364.3 281.2l1.5-1-1.2 1.4-1.5 1zM362.7 282.2l1.6-1-1.2 1.4-1.6 1z" fill="#ef1"/><path d="M361.2 283l1.5-.8-1.2 1.4-1.5 .8zM359.6 283.7l1.6-.7-1.2 1.4-1.6 .7zM358.1 284.2l1.5-.5-1.2 1.4-1.5 .6zM356.5 284.7l1.6-.5-1.2 1.5-1.6 .5zM355 285.1l1.5-.4-1.2 1.5-1.5 .3zM353.4 285.3l1.6-.2-1.2 1.4-1.5 .2zM351.9 285.4l1.5-.1-1.1 1.4-1.6 .1zM350.3 285.4l1.6 0-1.2 1.4-1.5 0z" fill="#df2"/><path d="M348.8 285.3l1.5 .1-1.1 1.4-1.6-.1zM347.2 285.1l1.6 .2-1.2 1.4-1.5-.2z" fill="#ef1"/><path d="M345.7 284.8l1.5 .3-1.1 1.4-1.6-.4z" fill="#ff0"/><path d="M344.1 284.4l1.6 .4-1.2 1.3-1.5-.4z" fill="#fe0"/><path d="M342.6 283.9l1.5 .5-1.1 1.3-1.6-.5z" fill="#fd0"/><path d="M341 283.4l1.6 .5-1.2 1.3-1.5-.6z" fill="#fc0"/><path d="M339.5 282.8l1.5 .6-1.1 1.2-1.6-.7z" fill="#fb0"/><path d="M337.9 282.1l1.6 .7-1.2 1.1-1.5-.8z" fill="#fa0"/><path d="M336.4 281.3l1.5 .8-1.1 1-1.6-.8z" fill="#f90"/><path d="M334.8 280.5l1.6 .8-1.2 1-1.5-.9z" fill="#f70"/><path d="M333.3 279.6l1.5 .9-1.1 .9-1.6-.9z" fill="#f60"/><path d="M331.8 278.7l1.5 .9-1.2 .9-1.5-.9z" fill="#f40"/><path d="M330.2 277.7l1.6 1-1.2 .9-1.6-1.1z" fill="#f30"/><path d="M328.7 276.7l1.5 1-1.2 .8-1.5-1z" fill="#f10"/><path d="M327.1 275.6l1.6 1.1-1.2 .8-1.6-1.1z" fill="#f00"/><path d="M325.6 274.5l1.5 1.1-1.2 .8-1.5-1.1z" fill="#d00"/><path d="M387.1 259.3l1.6-1.9-1.2 .8-1.6 1.9z" fill="#c00"/><path d="M385.6 261.1l1.5-1.8-1.2 .8-1.5 1.9z" fill="#d00"/><path d="M384 262.9l1.6-1.8-1.2 .9-1.6 1.8z" fill="#f00"/><path d="M382.5 264.7l1.5-1.8-1.2 .9-1.5 1.8z" fill="#f10"/><path d="M380.9 266.4l1.6-1.7-1.2 .9-1.6 1.7z" fill="#f30"/><path d="M379.4 268l1.5-1.6-1.2 .9-1.5 1.7z" fill="#f40"/><path d="M377.8 269.6l1.6-1.6-1.2 1-1.6 1.7z" fill="#f60"/><path d="M376.3 271.2l1.5-1.6-1.2 1.1-1.5 1.6z" fill="#f70"/><path d="M374.7 272.6l1.6-1.4-1.2 1.1-1.6 1.5z" fill="#f80"/><path d="M373.2 274l1.5-1.4-1.2 1.2-1.5 1.4z" fill="#f90"/><path d="M371.6 275.4l1.6-1.4-1.2 1.2-1.5 1.4z" fill="#fa0"/><path d="M370.1 276.6l1.5-1.2-1.1 1.2-1.6 1.3z" fill="#fb0"/><path d="M368.5 277.8l1.6-1.2-1.2 1.3-1.5 1.2z" fill="#fc0"/><path d="M367 278.9l1.5-1.1-1.1 1.3-1.6 1.1z" fill="#fd0"/><path d="M365.4 279.9l1.6-1-1.2 1.3-1.5 1zM363.9 280.8l1.5-.9-1.1 1.3-1.6 1z" fill="#fe0"/><path d="M362.3 281.5l1.6-.7-1.2 1.4-1.5 .8zM360.8 282.2l1.5-.7-1.1 1.5-1.6 .7zM359.2 282.8l1.6-.6-1.2 1.5-1.5 .5zM357.7 283.3l1.5-.5-1.1 1.4-1.6 .5zM356.1 283.6l1.6-.3-1.2 1.4-1.5 .4zM354.6 283.9l1.5-.3-1.1 1.5-1.6 .2zM353 284l1.6-.1-1.2 1.4-1.5 .1zM351.5 284l1.5 0-1.1 1.4-1.6 0z" fill="#ff0"/><path d="M350 283.9l1.5 .1-1.2 1.4-1.5-.1zM348.4 283.8l1.6 .1-1.2 1.4-1.6-.2z" fill="#fe0"/><path d="M346.9 283.5l1.5 .3-1.2 1.3-1.5-.3z" fill="#fd0"/><path d="M345.3 283.2l1.6 .3-1.2 1.3-1.6-.4z" fill="#fc0"/><path d="M343.8 282.7l1.5 .5-1.2 1.2-1.5-.5z" fill="#fb0"/><path d="M342.2 282.2l1.6 .5-1.2 1.2-1.6-.5z" fill="#fa0"/><path d="M340.7 281.6l1.5 .6-1.2 1.2-1.5-.6z" fill="#f90"/><path d="M339.1 280.9l1.6 .7-1.2 1.2-1.6-.7z" fill="#f80"/><path d="M337.6 280.2l1.5 .7-1.2 1.2-1.5-.8z" fill="#f70"/><path d="M336 279.4l1.6 .8-1.2 1.1-1.6-.8z" fill="#f60"/><path d="M334.5 278.6l1.5 .8-1.2 1.1-1.5-.9z" fill="#f40"/><path d="M332.9 277.7l1.6 .9-1.2 1-1.5-.9z" fill="#f30"/><path d="M331.4 276.8l1.5 .9-1.1 1-1.6-1z" fill="#f10"/><path d="M329.8 275.8l1.6 1-1.2 .9-1.5-1z" fill="#f00"/><path d="M328.3 274.8l1.5 1-1.1 .9-1.6-1.1z" fill="#d00"/><path d="M326.7 273.7l1.6 1.1-1.2 .8-1.5-1.1z" fill="#c00"/><path d="M388.3 258.4l1.5-1.8-1.1 .8-1.6 1.9z" fill="#a00"/><path d="M386.7 260.2l1.6-1.8-1.2 .9-1.5 1.8z" fill="#c00"/><path d="M385.2 262l1.5-1.8-1.1 .9-1.6 1.8z" fill="#d00"/><path d="M383.6 263.7l1.6-1.7-1.2 .9-1.5 1.8z" fill="#f00"/><path d="M382.1 265.3l1.5-1.6-1.1 1-1.6 1.7z" fill="#f10"/><path d="M380.5 267l1.6-1.7-1.2 1.1-1.5 1.6z" fill="#f30"/><path d="M379 268.5l1.5-1.5-1.1 1-1.6 1.6z" fill="#f40"/><path d="M377.4 270l1.6-1.5-1.2 1.1-1.5 1.6z" fill="#f50"/><path d="M375.9 271.4l1.5-1.4-1.1 1.2-1.6 1.4z" fill="#f60"/><path d="M374.3 272.8l1.6-1.4-1.2 1.2-1.5 1.4z" fill="#f70"/><path d="M372.8 274.1l1.5-1.3-1.1 1.2-1.6 1.4z" fill="#f80"/><path d="M371.2 275.3l1.6-1.2-1.2 1.3-1.5 1.2z" fill="#f90"/><path d="M369.7 276.5l1.5-1.2-1.1 1.3-1.6 1.2z" fill="#fa0"/><path d="M368.2 277.5l1.5-1-1.2 1.3-1.5 1.1z" fill="#fb0"/><path d="M366.6 278.5l1.6-1-1.2 1.4-1.6 1zM365.1 279.3l1.5-.8-1.2 1.4-1.5 .9z" fill="#fc0"/><path d="M363.5 280.1l1.6-.8-1.2 1.5-1.6 .7zM362 280.8l1.5-.7-1.2 1.4-1.5 .7zM360.4 281.3l1.6-.5-1.2 1.4-1.6 .6zM358.9 281.8l1.5-.5-1.2 1.5-1.5 .5zM357.3 282.2l1.6-.4-1.2 1.5-1.6 .3zM355.8 282.4l1.5-.2-1.2 1.4-1.5 .3zM354.2 282.6l1.6-.2-1.2 1.5-1.6 .1zM352.7 282.6l1.5 0-1.2 1.4-1.5 0z" fill="#fd0"/><path d="M351.1 282.6l1.6 0-1.2 1.4-1.5-.1zM349.6 282.4l1.5 .2-1.1 1.3-1.6-.1z" fill="#fc0"/><path d="M348 282.2l1.6 .2-1.2 1.4-1.5-.3z" fill="#fb0"/><path d="M346.5 281.9l1.5 .3-1.1 1.3-1.6-.3z" fill="#fa0"/><path d="M344.9 281.5l1.6 .4-1.2 1.3-1.5-.5z" fill="#f90"/><path d="M343.4 281l1.5 .5-1.1 1.2-1.6-.5z" fill="#f80"/><path d="M341.8 280.4l1.6 .6-1.2 1.2-1.5-.6z" fill="#f70"/><path d="M340.3 279.8l1.5 .6-1.1 1.2-1.6-.7z" fill="#f60"/><path d="M338.7 279.1l1.6 .7-1.2 1.1-1.5-.7z" fill="#f50"/><path d="M337.2 278.4l1.5 .7-1.1 1.1-1.6-.8z" fill="#f40"/><path d="M335.6 277.6l1.6 .8-1.2 1-1.5-.8z" fill="#f30"/><path d="M334.1 276.7l1.5 .9-1.1 1-1.6-.9z" fill="#f10"/><path d="M332.5 275.9l1.6 .8-1.2 1-1.5-.9z" fill="#f00"/><path d="M331 274.9l1.5 1-1.1 .9-1.6-1z" fill="#d00"/><path d="M329.5 273.9l1.5 1-1.2 .9-1.5-1z" fill="#c00"/><path d="M327.9 272.9l1.6 1-1.2 .9-1.6-1.1z" fill="#a00"/><path d="M389.4 257.5l1.6-1.8-1.2 .9-1.5 1.8z" fill="#900"/><path d="M387.9 259.3l1.5-1.8-1.1 .9-1.6 1.8z" fill="#a00"/><path d="M386.4 261l1.5-1.7-1.2 .9-1.5 1.8z" fill="#c00"/><path d="M384.8 262.7l1.6-1.7-1.2 1-1.6 1.7z" fill="#d00"/><path d="M383.3 264.3l1.5-1.6-1.2 1-1.5 1.6z" fill="#f00"/><path d="M381.7 265.9l1.6-1.6-1.2 1-1.6 1.7z" fill="#f10"/><path d="M380.2 267.4l1.5-1.5-1.2 1.1-1.5 1.5z" fill="#f20"/><path d="M378.6 268.9l1.6-1.5-1.2 1.1-1.6 1.5z" fill="#f30"/><path d="M377.1 270.2l1.5-1.3-1.2 1.1-1.5 1.4z" fill="#f40"/><path d="M375.5 271.6l1.6-1.4-1.2 1.2-1.6 1.4zM374 272.8l1.5-1.2-1.2 1.2-1.5 1.3z" fill="#f60"/><path d="M372.4 274l1.6-1.2-1.2 1.3-1.6 1.2z" fill="#f70"/><path d="M370.9 275.1l1.5-1.1-1.2 1.3-1.5 1.2z" fill="#f80"/><path d="M369.3 276.1l1.6-1-1.2 1.4-1.5 1z" fill="#f90"/><path d="M367.8 277.1l1.5-1-1.1 1.4-1.6 1zM366.2 277.9l1.6-.8-1.2 1.4-1.5 .8zM364.7 278.7l1.5-.8-1.1 1.4-1.6 .8z" fill="#fa0"/><path d="M363.1 279.3l1.6-.6-1.2 1.4-1.5 .7zM361.6 279.9l1.5-.6-1.1 1.5-1.6 .5zM360 280.3l1.6-.4-1.2 1.4-1.5 .5zM358.5 280.7l1.5-.4-1.1 1.5-1.6 .4zM356.9 281l1.6-.3-1.2 1.5-1.5 .2zM355.4 281.1l1.5-.1-1.1 1.4-1.6 .2z" fill="#fb0"/><path d="M353.8 281.2l1.6-.1-1.2 1.5-1.5 0zM352.3 281.2l1.5 0-1.1 1.4-1.6 0zM350.7 281l1.6 .2-1.2 1.4-1.5-.2z" fill="#fa0"/><path d="M349.2 280.8l1.5 .2-1.1 1.4-1.6-.2z" fill="#f90"/><path d="M347.7 280.5l1.5 .3-1.2 1.4-1.5-.3z" fill="#f80"/><path d="M346.1 280.2l1.6 .3-1.2 1.4-1.6-.4z" fill="#f70"/><path d="M344.6 279.7l1.5 .5-1.2 1.3-1.5-.5zM343 279.2l1.6 .5-1.2 1.3-1.6-.6z" fill="#f60"/><path d="M341.5 278.6l1.5 .6-1.2 1.2-1.5-.6z" fill="#f40"/><path d="M339.9 278l1.6 .6-1.2 1.2-1.6-.7z" fill="#f30"/><path d="M338.4 277.3l1.5 .7-1.2 1.1-1.5-.7z" fill="#f20"/><path d="M336.8 276.5l1.6 .8-1.2 1.1-1.6-.8z" fill="#f10"/><path d="M335.3 275.7l1.5 .8-1.2 1.1-1.5-.9z" fill="#f00"/><path d="M333.7 274.9l1.6 .8-1.2 1-1.6-.8z" fill="#d00"/><path d="M332.2 274l1.5 .9-1.2 1-1.5-1z" fill="#c00"/><path d="M330.6 273l1.6 1-1.2 .9-1.5-1z" fill="#a00"/><path d="M329.1 272.1l1.5 .9-1.1 .9-1.6-1z" fill="#900"/></g>
<path d="M270.1 302.8L270.1 243.3M406.1 308.7L406.1 249.2M270.1 243.3L347.5 222.9M347.5 222.9L406.1 249.2M270.1 302.8L328.7 329.1M328.7 329.1L406.1 308.7M271.1 243.3L264.5 243.3M405.1 249.2L411.7 249.2M271.1 253.2L264.5 253.2M405.1 259.1L411.7 259.1M271.1 263.1L264.5 263.1M405.1 269.0L411.7 269.0M271.1 273.0L264.5 273.0M405.1 278.9L411.7 278.9M271.1 283.0L264.5 283.0M405.1 288.9L411.7 288.9M271.1 292.9L264.5 292.9M405.1 298.8L411.7 298.8M271.1 302.8L264.5 302.8M405.1 308.7L411.7 308.7M270.1 302.8L264.8 304.2M281.8 308.1L276.5 309.5M293.5 313.3L288.2 314.7M305.3 318.6L299.9 320.0M317.0 323.8L311.7 325.2M328.7 329.1L323.4 330.5M328.7 329.1L333.7 331.4M344.2 325.0L349.2 327.3M359.7 320.9L364.7 323.2M375.1 316.9L380.2 319.1M390.6 312.8L395.6 315.0M406.1 308.7L411.1 311.0" fill="none" stroke="#222" stroke-width="0.85"/>
<text x="255.7" y="246.8" text-anchor="end">12</text>
<text x="255.7" y="256.7" text-anchor="end">10</text>
<text x="255.7" y="266.6" text-anchor="end">8</text>
<text x="255.7" y="276.5" text-anchor="end">6</text>
<text x="255.7" y="286.5" text-anchor="end">4</text>
<text x="255.7" y="296.4" text-anchor="end">2</text>
<text x="255.7" y="306.3" text-anchor="end">0</text>
<text x="261.8" y="309.5" text-anchor="middle">50</text>
<text x="273.5" y="314.8" text-anchor="middle">40</text>
<text x="285.2" y="320.0" text-anchor="middle">30</text>
<text x="297.0" y="325.3" text-anchor="middle">20</text>
<text x="308.7" y="330.5" text-anchor="middle">10</text>
<text x="320.4" y="335.8" text-anchor="middle">0</text>
<text x="336.3" y="338.1" text-anchor="middle">0</text>
<text x="351.8" y="334.0" text-anchor="middle">10</text>
<text x="367.3" y="329.9" text-anchor="middle">20</text>
<text x="382.7" y="325.9" text-anchor="middle">30</text>
<text x="398.2" y="321.8" text-anchor="middle">40</text>
<text x="413.7" y="317.7" text-anchor="middle">50</text>
<clipPath id="clip77"><rect x="77.0" y="373.6" width="138" height="108.6"/></clipPath>
<rect x="77.0" y="373.6" width="138" height="108.6" fill="#800000"/>
<g clip-path="url(#clip77)" stroke="#000" stroke-width="0.8"><ellipse cx="146.0" cy="427.9" rx="81.3" ry="64.0" fill="#ff4c00"/><ellipse cx="146.0" cy="427.9" rx="65.1" ry="51.2" fill="#e5ff1a"/><ellipse cx="146.0" cy="427.9" rx="48.8" ry="38.4" fill="#1affe5"/><ellipse cx="146.0" cy="427.9" rx="32.5" ry="25.6" fill="#004dff"/><ellipse cx="146.0" cy="427.9" rx="16.3" ry="12.8" fill="#000080"/></g>
<path d="M77.0 373.6h138v108.6h-138zM77.0 482.2v-5M77.0 373.6v5M77.0 373.6h5M215.0 373.6h-5M94.2 482.2v-5M94.2 373.6v5M77.0 387.2h5M215.0 387.2h-5M111.5 482.2v-5M111.5 373.6v5M77.0 400.8h5M215.0 400.8h-5M128.8 482.2v-5M128.8 373.6v5M77.0 414.3h5M215.0 414.3h-5M146.0 482.2v-5M146.0 373.6v5M77.0 427.9h5M215.0 427.9h-5M163.2 482.2v-5M163.2 373.6v5M77.0 441.5h5M215.0 441.5h-5M180.5 482.2v-5M180.5 373.6v5M77.0 455.1h5M215.0 455.1h-5M197.8 482.2v-5M197.8 373.6v5M77.0 468.6h5M215.0 468.6h-5M215.0 482.2v-5M215.0 373.6v5M77.0 482.2h5M215.0 482.2h-5" fill="none" stroke="#111" stroke-width="0.9"/>
<text x="75.5" y="494.4" text-anchor="middle">-8</text>
<text x="72.0" y="485.6" text-anchor="end">-8</text>
<text x="92.8" y="494.4" text-anchor="middle">-6</text>
<text x="72.0" y="472.0" text-anchor="end">-6</text>
<text x="110.0" y="494.4" text-anchor="middle">-4</text>
<text x="72.0" y="458.4" text-anchor="end">-4</text>
<text x="127.2" y="494.4" text-anchor="middle">-2</text>
<text x="72.0" y="444.9" text-anchor="end">-2</text>
<text x="146.0" y="494.4" text-anchor="middle">0</text>
<text x="72.0" y="431.3" text-anchor="end">0</text>
<text x="163.2" y="494.4" text-anchor="middle">2</text>
<text x="72.0" y="417.7" text-anchor="end">2</text>
<text x="180.5" y="494.4" text-anchor="middle">4</text>
<text x="72.0" y="404.1" text-anchor="end">4</text>
<text x="197.8" y="494.4" text-anchor="middle">6</text>
<text x="72.0" y="390.6" text-anchor="end">6</text>
<text x="215.0" y="494.4" text-anchor="middle">8</text>
<text x="72.0" y="377.0" text-anchor="end">8</text>
<clipPath id="clip269"><rect x="269.3" y="373.6" width="138" height="108.6"/></clipPath>
<g clip-path="url(#clip269)" fill="none" stroke-width="1"><ellipse cx="338.3" cy="427.9" rx="16.3" ry="12.8" stroke="#000080"/><ellipse cx="338.3" cy="427.9" rx="32.5" ry="25.6" stroke="#0080ff"/><ellipse cx="338.3" cy="427.9" rx="48.8" ry="38.4" stroke="#80ff80"/><ellipse cx="338.3" cy="427.9" rx="65.1" ry="51.2" stroke="#ff8000"/><ellipse cx="338.3" cy="427.9" rx="81.3" ry="64.0" stroke="#800000"/></g>
<path d="M269.3 373.6h138v108.6h-138zM269.3 482.2v-5M269.3 373.6v5M269.3 373.6h5M407.3 373.6h-5M286.6 482.2v-5M286.6 373.6v5M269.3 387.2h5M407.3 387.2h-5M303.8 482.2v-5M303.8 373.6v5M269.3 400.8h5M407.3 400.8h-5M321.1 482.2v-5M321.1 373.6v5M269.3 414.3h5M407.3 414.3h-5M338.3 482.2v-5M338.3 373.6v5M269.3 427.9h5M407.3 427.9h-5M355.6 482.2v-5M355.6 373.6v5M269.3 441.5h5M407.3 441.5h-5M372.8 482.2v-5M372.8 373.6v5M269.3 455.1h5M407.3 455.1h-5M390.1 482.2v-5M390.1 373.6v5M269.3 468.6h5M407.3 468.6h-5M407.3 482.2v-5M407.3 373.6v5M269.3 482.2h5M407.3 482.2h-5" fill="none" stroke="#111" stroke-width="0.9"/>
<text x="267.8" y="494.4" text-anchor="middle">-8</text>
<text x="264.3" y="485.6" text-anchor="end">-8</text>
<text x="285.1" y="494.4" text-anchor="middle">-6</text>
<text x="264.3" y="472.0" text-anchor="end">-6</text>
<text x="302.3" y="494.4" text-anchor="middle">-4</text>
<text x="264.3" y="458.4" text-anchor="end">-4</text>
<text x="319.6" y="494.4" text-anchor="middle">-2</text>
<text x="264.3" y="444.9" text-anchor="end">-2</text>
<text x="338.3" y="494.4" text-anchor="middle">0</text>
<text x="264.3" y="431.3" text-anchor="end">0</text>
<text x="355.6" y="494.4" text-anchor="middle">2</text>
<text x="264.3" y="417.7" text-anchor="end">2</text>
<text x="372.8" y="494.4" text-anchor="middle">4</text>
<text x="264.3" y="404.1" text-anchor="end">4</text>
<text x="390.1" y="494.4" text-anchor="middle">6</text>
<text x="264.3" y="390.6" text-anchor="end">6</text>
<text x="407.3" y="494.4" text-anchor="middle">8</text>
<text x="264.3" y="377.0" text-anchor="end">8</text>
<text x="23.5" y="526.2" font-size="9.5">-35.1225, -2.80000</text>
</svg></div>
</div>

</body></html>
